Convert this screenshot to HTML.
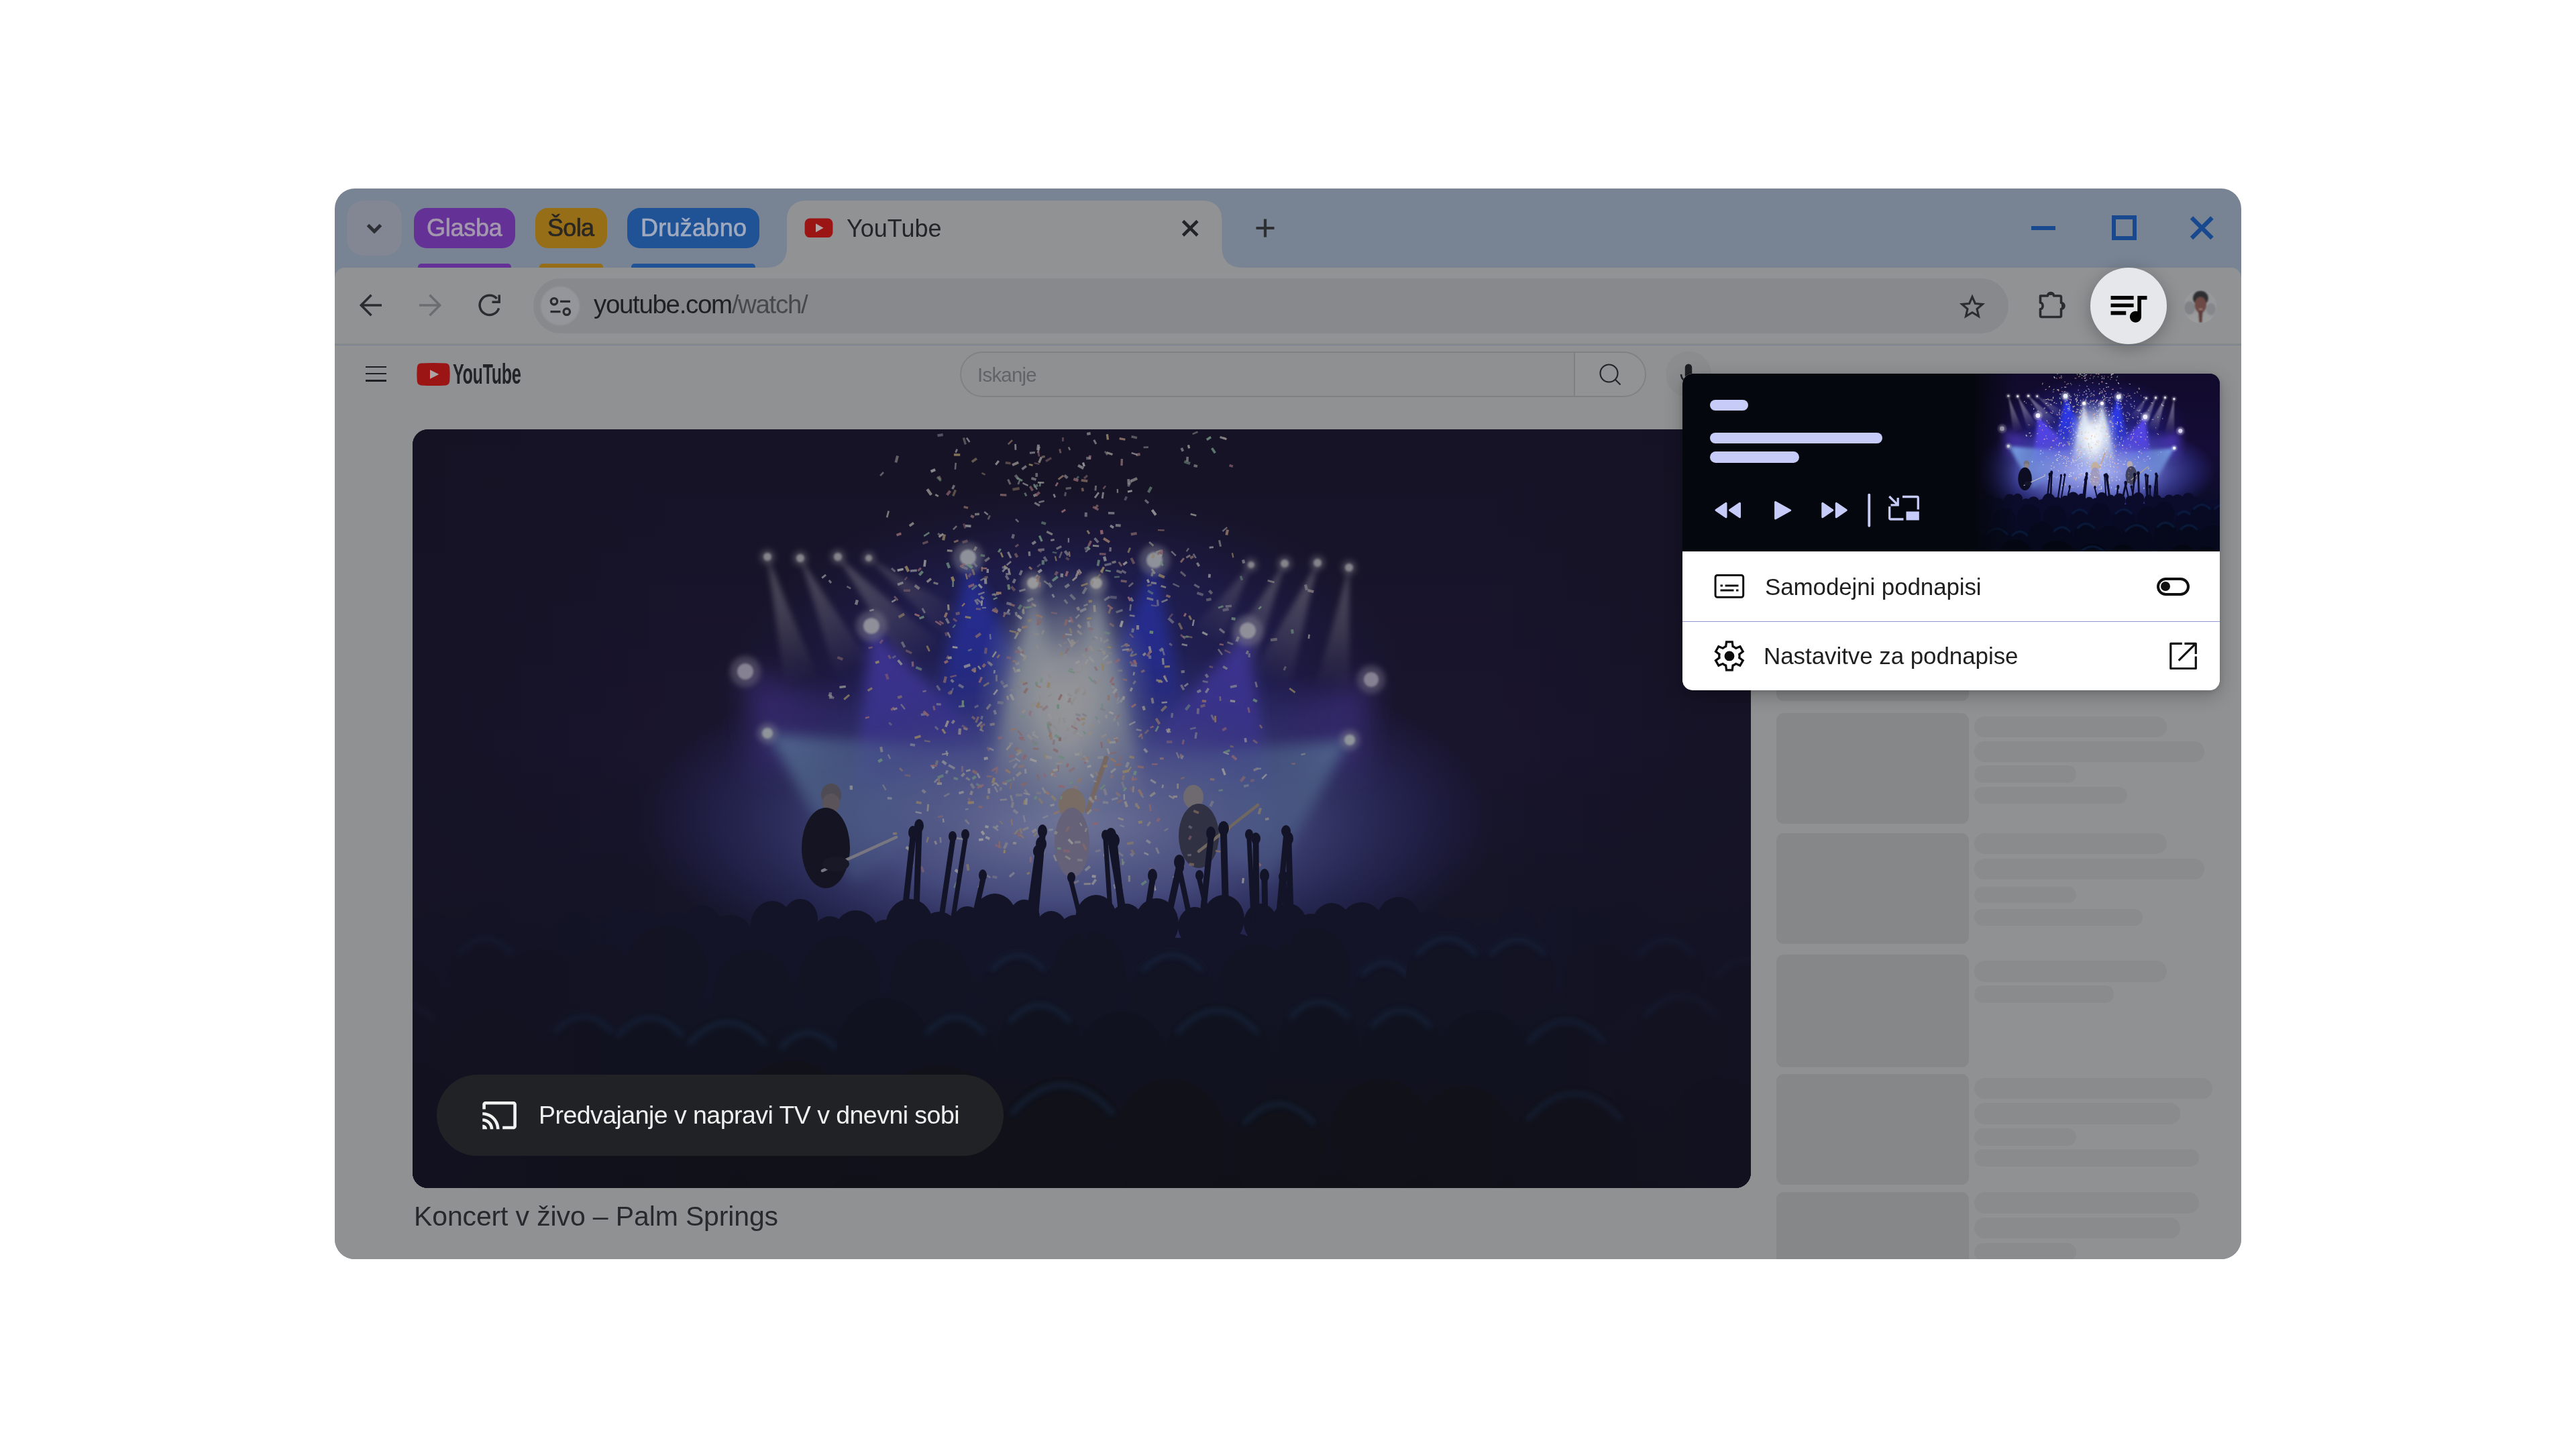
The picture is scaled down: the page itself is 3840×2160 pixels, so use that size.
<!DOCTYPE html><html lang="sl"><head><meta charset="utf-8"><title>YouTube</title><style>
*{box-sizing:border-box}
html,body{margin:0;padding:0}
body{width:3840px;height:2160px;background:#fff;position:relative;overflow:hidden;font-family:"Liberation Sans",sans-serif;-webkit-font-smoothing:antialiased}
.abs{position:absolute}
.t{position:absolute;white-space:nowrap;line-height:1;margin:0;will-change:transform}
#win{position:absolute;left:499px;top:281px;width:2842px;height:1596px;border-radius:30px;overflow:hidden;background:#788393}
#win>.in{position:absolute;left:-499px;top:-281px;width:3840px;height:2160px}
svg{position:absolute;overflow:visible}
.sk{position:absolute;background:#8a8b8d;border-radius:16px}
.th{position:absolute;background:#868789;border-radius:11px;left:2648px;width:287px}
</style></head><body><div id="win"><div class="in"><div class="abs" style="left:517px;top:299px;width:82px;height:82px;border-radius:25px;background:#838793"></div><svg style="left:540px;top:325px" width="36" height="32" viewBox="0 0 36 32" ><path d="M8.5 10.5 L18 20 L27.5 10.5" fill="none" stroke="#2d2f35" stroke-width="5" stroke-linejoin="miter"/></svg><div class="abs" style="left:617px;top:310px;width:151px;height:60px;border-radius:19px;background:#643296"></div><div class="t" style="letter-spacing:-0.246px;left:636px;top:322.43px;font-size:36px;color:#a398ad;-webkit-text-stroke:0.7px #a398ad">Glasba</div><div class="abs" style="left:623px;top:393px;width:139px;height:10px;border-radius:5px;background:#643296"></div><div class="abs" style="left:798px;top:310px;width:107px;height:60px;border-radius:19px;background:#966e17"></div><div class="t" style="letter-spacing:-0.641px;left:816.3px;top:322.43px;font-size:36px;color:#2a2723;-webkit-text-stroke:0.7px #2a2723">Šola</div><div class="abs" style="left:804px;top:393px;width:95px;height:10px;border-radius:5px;background:#966e17"></div><div class="abs" style="left:935px;top:310px;width:197px;height:60px;border-radius:19px;background:#205296"></div><div class="t" style="letter-spacing:0.263px;left:954.7px;top:322.43px;font-size:36px;color:#a0aabf;-webkit-text-stroke:0.7px #a0aabf">Družabno</div><div class="abs" style="left:940.5px;top:393px;width:185.5px;height:10px;border-radius:5px;background:#205296"></div><div class="abs" style="left:3028px;top:336.7px;width:36px;height:6.800000000000011px;background:#18498f"></div><div class="abs" style="left:3148px;top:321px;width:37px;height:37px;border:6.5px solid #18498f"></div><svg style="left:3262px;top:320px" width="40" height="40" viewBox="0 0 40 40" ><path d="M5 4.5 L35.5 35 M35.5 4.5 L5 35" stroke="#18498f" stroke-width="6.2" fill="none"/></svg><svg style="left:1870px;top:324px" width="32" height="32" viewBox="0 0 32 32" ><path d="M16 2.5V29.5M2.5 16H29.5" stroke="#2d2f33" stroke-width="4.2" fill="none"/></svg><div class="abs" style="left:499px;top:399px;width:2842px;height:115px;background:#919294;border-radius:15px 15px 0 0"></div><svg style="left:1140px;top:295px" width="720" height="110" viewBox="1140 295 720 110" ><path d="M1143 399 C1162 399 1173 388 1173 369 L1173 327 C1173 310 1184 299 1201 299 L1793.5 299 C1810.5 299 1821.5 310 1821.5 327 L1821.5 369 C1821.5 388 1833 399 1852 399 L1852 401 L1143 401 Z" fill="#919294"/></svg><svg style="left:1199px;top:325px" width="44" height="30" viewBox="0 0 44 30" ><rect x="0.6" y="0.6" width="41.8" height="28.5" rx="7.5" fill="#9c1515"/><path d="M17 8.3 L28.5 14.8 L17 21.3Z" fill="#b3a5a6"/></svg><div class="t" style="letter-spacing:0.004px;left:1261.5px;top:322.53px;font-size:36px;color:#242528">YouTube</div><svg style="left:1760px;top:326px" width="28" height="28" viewBox="0 0 28 28" ><path d="M3.5 3.5 L25 25 M25 3.5 L3.5 25" stroke="#232427" stroke-width="4.6" fill="none"/></svg><div class="abs" style="left:499px;top:512.3px;width:2842px;height:1.900000000000091px;background:#88898a"></div><svg style="left:535px;top:437px" width="36" height="36" viewBox="0 0 36 36" ><path d="M34 18 H4 M18.5 2.8 L3.3 18 L18.5 33.2" fill="none" stroke="#2a2c2f" stroke-width="3.5"/></svg><svg style="left:623px;top:437px" width="36" height="36" viewBox="0 0 36 36" ><path d="M2 18 H32 M17.5 2.8 L32.7 18 L17.5 33.2" fill="none" stroke="#6c6d70" stroke-width="3.5"/></svg><svg style="left:712px;top:437px" width="36" height="36" viewBox="0 0 36 36" ><path d="M31.6 22.5 A14.6 14.6 0 1 1 28.6 8.2" fill="none" stroke="#2a2c2f" stroke-width="3.5"/><path d="M32.2 2.5 V13.3 H21.5" fill="none" stroke="#2a2c2f" stroke-width="3.5"/></svg><div class="abs" style="left:795px;top:415.3px;width:2199px;height:81.5px;border-radius:41px;background:#88898d"></div><div class="abs" style="left:805.5px;top:426.9px;width:58.39999999999998px;height:58.200000000000045px;border-radius:30px;background:#95969b;filter:blur(1.2px)"></div><svg style="left:818px;top:440px" width="34" height="34" viewBox="0 0 34 34" ><g fill="none" stroke="#2a2c2f" stroke-width="3.3"><circle cx="8" cy="9.3" r="4.7"/><path d="M17 9.3H32"/><circle cx="26.8" cy="24.7" r="4.7"/><path d="M2.5 24.7H17.5"/></g></svg><div class="t" style="letter-spacing:-1.339px;left:885.2px;top:434.71px;font-size:38.5px;color:#46484d"><span style="color:#1f2024">youtube.com</span>/watch/</div><svg style="left:2919px;top:436px" width="42" height="42" viewBox="0 0 24 24" ><path d="M12 3.6 L14.5 9.4 L20.8 9.95 L16 14.1 L17.45 20.3 L12 17 L6.55 20.3 L8 14.1 L3.2 9.95 L9.5 9.4 Z" fill="none" stroke="#2a2c2f" stroke-width="1.75" stroke-linejoin="miter"/></svg><svg style="left:3036px;top:432px" width="46" height="46" viewBox="0 0 46 46" ><path d="M5.5 9 H16.5 C16.5 3 25.5 3 25.5 9 H34.5 Q36.5 9 36.5 11 V19.5 C42.5 19.5 42.5 28.5 36.5 28.5 V38.5 Q36.5 40.5 34.5 40.5 H7.5 Q5.5 40.5 5.5 38.5 V28.8 C10.3 28.8 10.3 19.2 5.5 19.2 Z" fill="none" stroke="#2a2c2f" stroke-width="3.6" stroke-linejoin="round"/><path d="M17.5 8 C17.5 3 24.5 3 24.5 8Z M37 20.5 C42 20.5 42 27.5 37 27.5Z" fill="#2a2c2f"/></svg><svg style="left:3255px;top:431.5px" width="50" height="50" viewBox="0 0 50 50" ><defs><clipPath id="avc"><circle cx="25" cy="25" r="24.6"/></clipPath><filter id="avb" x="-20%" y="-20%" width="140%" height="140%"><feGaussianBlur stdDeviation="0.9"/></filter></defs><g clip-path="url(#avc)"><rect width="50" height="50" fill="#97989a"/><g filter="url(#avb)"><ellipse cx="9" cy="27" rx="8" ry="10" fill="#808286"/><ellipse cx="41" cy="29" rx="7" ry="9" fill="#85878b"/><ellipse cx="25" cy="49" rx="21" ry="14" fill="#9a9b9d"/><ellipse cx="25.4" cy="12.5" rx="11.4" ry="11" fill="#2f2f32"/><ellipse cx="25.3" cy="22.5" rx="8.8" ry="11.8" fill="#6d4a45"/><path d="M21.8 31 L28.8 31 L27.6 49 L23.2 49Z" fill="#5f3d39"/><ellipse cx="25.5" cy="29" rx="3" ry="1.3" fill="#9a7a78"/></g></g></svg><div class="abs" style="left:499px;top:514.5px;width:2842px;height:1362.5px;background:#909193"></div><div class="abs" style="left:545px;top:545.6999999999999px;width:30.700000000000045px;height:2.2000000000000455px;background:#1e1f22"></div><div class="abs" style="left:545px;top:556.1999999999999px;width:30.700000000000045px;height:2.2000000000000455px;background:#1e1f22"></div><div class="abs" style="left:545px;top:566.4px;width:30.700000000000045px;height:2.2000000000000455px;background:#1e1f22"></div><svg style="left:621px;top:540px" width="52" height="36" viewBox="0 0 52 36" ><path d="M6.5 1.6 Q25 0.2 43.5 1.6 Q48.6 2.2 49.2 7.5 Q50.2 18 49.2 28.5 Q48.6 33.8 43.5 34.4 Q25 35.8 6.5 34.4 Q1.4 33.8 0.8 28.5 Q-0.2 18 0.8 7.5 Q1.4 2.2 6.5 1.6Z" fill="#9c1515"/><path d="M20 11.2 L33.3 18 L20 24.8Z" fill="#aca3a4"/></svg><div class="t" id="ytword" style="left:675.2px;top:535.90px;font-size:43px;font-weight:bold;color:#222326;transform-origin:0 0;transform:scaleX(0.583);letter-spacing:-0.5px">YouTube</div><div class="abs" style="left:1431.2px;top:524.2px;width:1022.9999999999998px;height:67.59999999999991px;border-radius:34px;border:2px solid #808183;background:#8f9092"></div><div class="abs" style="left:2346px;top:526.2px;width:106.19999999999982px;height:63.59999999999991px;border-radius:0 32px 32px 0;border-left:2px solid #808183;background:#929395"></div><div class="t" style="letter-spacing:-0.783px;left:1456.5px;top:543.63px;font-size:29.5px;color:#626366">Iskanje</div><svg style="left:2382px;top:540px" width="38" height="38" viewBox="0 0 38 38" ><circle cx="16.5" cy="16.5" r="13" fill="none" stroke="#222326" stroke-width="2.1"/><path d="M26 26 L33.5 33.5" stroke="#222326" stroke-width="2.1"/></svg><div class="abs" style="left:2483px;top:524px;width:68px;height:68px;border-radius:34px;background:#8b8c8e"></div><svg style="left:2500px;top:540px" width="34" height="40" viewBox="0 0 34 40" ><rect x="11.8" y="2.5" width="10.4" height="22" rx="5.2" fill="#1d1e21"/><path d="M6 18 A11 11 0 0 0 28 18 M17 29 V36" fill="none" stroke="#1d1e21" stroke-width="2.4"/></svg><svg style="left:615px;top:640px" width="1995" height="1131" viewBox="615 640 1995 1131"><defs>
<linearGradient id="sc-base" x1="0" y1="0" x2="0" y2="1">
 <stop offset="0" stop-color="#100a2a"/><stop offset="0.42" stop-color="#150d36"/>
 <stop offset="0.68" stop-color="#0b0d28"/><stop offset="1" stop-color="#03050f"/>
</linearGradient>
<radialGradient id="sc-glow" cx="0.5" cy="0.5" r="0.5">
 <stop offset="0" stop-color="#3a42d4" stop-opacity="0.6"/><stop offset="0.6" stop-color="#3030c0" stop-opacity="0.38"/>
 <stop offset="1" stop-color="#241c96" stop-opacity="0"/>
</radialGradient>
<radialGradient id="sc-glow2" cx="0.5" cy="0.5" r="0.5">
 <stop offset="0" stop-color="#fbfcff" stop-opacity="1"/><stop offset="0.3" stop-color="#eef3fa" stop-opacity="0.92"/><stop offset="0.6" stop-color="#c8d6ee" stop-opacity="0.6"/>
 <stop offset="1" stop-color="#8aa0e0" stop-opacity="0"/>
</radialGradient>
<radialGradient id="sc-haze" cx="0.5" cy="0.5" r="0.5">
 <stop offset="0" stop-color="#b4c0fa" stop-opacity="1"/><stop offset="0.45" stop-color="#7c88ee" stop-opacity="0.8"/>
 <stop offset="0.8" stop-color="#4a4cd0" stop-opacity="0.36"/><stop offset="1" stop-color="#3c38c0" stop-opacity="0"/>
</radialGradient>
<linearGradient id="sc-crowd" x1="0" y1="0" x2="0" y2="1">
 <stop offset="0" stop-color="#0b0c2c"/><stop offset="0.3" stop-color="#080b24"/><stop offset="1" stop-color="#03050f"/>
</linearGradient>
<linearGradient id="sc-vig" x1="0" y1="0" x2="1" y2="0">
 <stop offset="0" stop-color="#0c0824" stop-opacity="0.7"/><stop offset="0.2" stop-color="#0c0824" stop-opacity="0"/>
 <stop offset="0.8" stop-color="#0c0824" stop-opacity="0"/><stop offset="1" stop-color="#0c0824" stop-opacity="0.7"/></linearGradient>
<filter id="sc-b4" x="-50%" y="-50%" width="200%" height="200%"><feGaussianBlur stdDeviation="4"/></filter>
<filter id="sc-b10" x="-50%" y="-50%" width="200%" height="200%"><feGaussianBlur stdDeviation="10"/></filter>
<filter id="sc-b22" x="-50%" y="-50%" width="200%" height="200%"><feGaussianBlur stdDeviation="22"/></filter>
<filter id="sc-b2" x="-50%" y="-50%" width="200%" height="200%"><feGaussianBlur stdDeviation="1.6"/></filter>
<clipPath id="vclip"><rect x="615" y="640" width="1995" height="1131" rx="23"/></clipPath><g id="scene"><rect x="615" y="640" width="1995" height="1131" fill="url(#sc-base)"/><ellipse cx="1590" cy="1000" rx="500" ry="270" fill="url(#sc-glow)"/><ellipse cx="1590" cy="1225" rx="640" ry="265" fill="url(#sc-haze)"/><linearGradient id="sg1" gradientUnits="userSpaceOnUse" x1="1144" y1="830" x2="1195" y2="1018"><stop offset="0" stop-color="#cfc8dc" stop-opacity="0.6"/><stop offset="0.5" stop-color="#cfc8dc" stop-opacity="0.36"/><stop offset="1" stop-color="#cfc8dc" stop-opacity="0"/></linearGradient><polygon points="1144,830 1170,1023 1220,1012" fill="url(#sg1)" filter="url(#sc-b4)"/><linearGradient id="sg2" gradientUnits="userSpaceOnUse" x1="1193" y1="832" x2="1273" y2="999"><stop offset="0" stop-color="#cfc8dc" stop-opacity="0.55"/><stop offset="0.5" stop-color="#cfc8dc" stop-opacity="0.33"/><stop offset="1" stop-color="#cfc8dc" stop-opacity="0"/></linearGradient><polygon points="1193,832 1246,1007 1299,991" fill="url(#sg2)" filter="url(#sc-b4)"/><linearGradient id="sg3" gradientUnits="userSpaceOnUse" x1="1249" y1="830" x2="1380" y2="981"><stop offset="0" stop-color="#cfc8dc" stop-opacity="0.55"/><stop offset="0.5" stop-color="#cfc8dc" stop-opacity="0.33"/><stop offset="1" stop-color="#cfc8dc" stop-opacity="0"/></linearGradient><polygon points="1249,830 1351,997 1409,965" fill="url(#sg3)" filter="url(#sc-b4)"/><linearGradient id="sg4" gradientUnits="userSpaceOnUse" x1="1295" y1="832" x2="1427" y2="934"><stop offset="0" stop-color="#cfc8dc" stop-opacity="0.4"/><stop offset="0.5" stop-color="#cfc8dc" stop-opacity="0.24"/><stop offset="1" stop-color="#cfc8dc" stop-opacity="0"/></linearGradient><polygon points="1295,832 1409,949 1446,918" fill="url(#sg4)" filter="url(#sc-b4)"/><linearGradient id="sg5" gradientUnits="userSpaceOnUse" x1="2011" y1="846" x2="1986" y2="1031"><stop offset="0" stop-color="#cfc8dc" stop-opacity="0.55"/><stop offset="0.5" stop-color="#cfc8dc" stop-opacity="0.33"/><stop offset="1" stop-color="#cfc8dc" stop-opacity="0"/></linearGradient><polygon points="2011,846 1960,1028 2012,1033" fill="url(#sg5)" filter="url(#sc-b4)"/><linearGradient id="sg6" gradientUnits="userSpaceOnUse" x1="1964" y1="839" x2="1894" y2="1015"><stop offset="0" stop-color="#cfc8dc" stop-opacity="0.6"/><stop offset="0.5" stop-color="#cfc8dc" stop-opacity="0.36"/><stop offset="1" stop-color="#cfc8dc" stop-opacity="0"/></linearGradient><polygon points="1964,839 1865,1007 1923,1023" fill="url(#sg6)" filter="url(#sc-b4)"/><linearGradient id="sg7" gradientUnits="userSpaceOnUse" x1="1915" y1="840" x2="1839" y2="997"><stop offset="0" stop-color="#cfc8dc" stop-opacity="0.55"/><stop offset="0.5" stop-color="#cfc8dc" stop-opacity="0.33"/><stop offset="1" stop-color="#cfc8dc" stop-opacity="0"/></linearGradient><polygon points="1915,840 1813,986 1865,1007" fill="url(#sg7)" filter="url(#sc-b4)"/><linearGradient id="sg8" gradientUnits="userSpaceOnUse" x1="1865" y1="842" x2="1797" y2="952"><stop offset="0" stop-color="#cfc8dc" stop-opacity="0.4"/><stop offset="0.5" stop-color="#cfc8dc" stop-opacity="0.24"/><stop offset="1" stop-color="#cfc8dc" stop-opacity="0"/></linearGradient><polygon points="1865,842 1776,939 1818,965" fill="url(#sg8)" filter="url(#sc-b4)"/><linearGradient id="sg9" gradientUnits="userSpaceOnUse" x1="1111" y1="1001" x2="1262" y2="1123"><stop offset="0" stop-color="#5a3fd0" stop-opacity="0.9"/><stop offset="0.5" stop-color="#5a3fd0" stop-opacity="0.54"/><stop offset="1" stop-color="#5a3fd0" stop-opacity="0"/></linearGradient><polygon points="1111,1001 1126,1154 1399,1091" fill="url(#sg9)" filter="url(#sc-b22)"/><linearGradient id="sg10" gradientUnits="userSpaceOnUse" x1="2044" y1="1013" x2="1897" y2="1125"><stop offset="0" stop-color="#5a3fd0" stop-opacity="0.85"/><stop offset="0.5" stop-color="#5a3fd0" stop-opacity="0.51"/><stop offset="1" stop-color="#5a3fd0" stop-opacity="0"/></linearGradient><polygon points="2044,1013 1766,1091 2028,1159" fill="url(#sg10)" filter="url(#sc-b22)"/><linearGradient id="sg11" gradientUnits="userSpaceOnUse" x1="1443" y1="831" x2="1480" y2="1107"><stop offset="0" stop-color="#2c3af0" stop-opacity="1.0"/><stop offset="0.5" stop-color="#2c3af0" stop-opacity="0.85"/><stop offset="1" stop-color="#2c3af0" stop-opacity="0"/></linearGradient><polygon points="1443,831 1383,1112 1577,1102" fill="url(#sg11)" filter="url(#sc-b10)"/><linearGradient id="sg12" gradientUnits="userSpaceOnUse" x1="1721" y1="835" x2="1692" y2="1107"><stop offset="0" stop-color="#2c3af0" stop-opacity="1.0"/><stop offset="0.5" stop-color="#2c3af0" stop-opacity="0.85"/><stop offset="1" stop-color="#2c3af0" stop-opacity="0"/></linearGradient><polygon points="1721,835 1608,1102 1776,1112" fill="url(#sg12)" filter="url(#sc-b10)"/><linearGradient id="sg13" gradientUnits="userSpaceOnUse" x1="1299" y1="933" x2="1393" y2="1167"><stop offset="0" stop-color="#5848f2" stop-opacity="1.0"/><stop offset="0.5" stop-color="#5848f2" stop-opacity="0.80"/><stop offset="1" stop-color="#5848f2" stop-opacity="0"/></linearGradient><polygon points="1299,933 1273,1180 1514,1154" fill="url(#sg13)" filter="url(#sc-b10)"/><linearGradient id="sg14" gradientUnits="userSpaceOnUse" x1="1860" y1="940" x2="1779" y2="1167"><stop offset="0" stop-color="#5848f2" stop-opacity="1.0"/><stop offset="0.5" stop-color="#5848f2" stop-opacity="0.80"/><stop offset="1" stop-color="#5848f2" stop-opacity="0"/></linearGradient><polygon points="1860,940 1666,1154 1892,1180" fill="url(#sg14)" filter="url(#sc-b10)"/><linearGradient id="sg15" gradientUnits="userSpaceOnUse" x1="1144" y1="1093" x2="1425" y2="1222"><stop offset="0" stop-color="#86baf6" stop-opacity="0.85"/><stop offset="0.5" stop-color="#86baf6" stop-opacity="0.42"/><stop offset="1" stop-color="#86baf6" stop-opacity="0"/></linearGradient><polygon points="1144,1093 1273,1317 1577,1128" fill="url(#sg15)" filter="url(#sc-b10)"/><linearGradient id="sg16" gradientUnits="userSpaceOnUse" x1="2012" y1="1103" x2="1742" y2="1227"><stop offset="0" stop-color="#86baf6" stop-opacity="0.8"/><stop offset="0.5" stop-color="#86baf6" stop-opacity="0.36"/><stop offset="1" stop-color="#86baf6" stop-opacity="0"/></linearGradient><polygon points="2012,1103 1593,1138 1892,1317" fill="url(#sg16)" filter="url(#sc-b10)"/><linearGradient id="sg17" gradientUnits="userSpaceOnUse" x1="1540" y1="869" x2="1548" y2="1196"><stop offset="0" stop-color="#e8f0f6" stop-opacity="1.0"/><stop offset="0.5" stop-color="#e8f0f6" stop-opacity="0.92"/><stop offset="1" stop-color="#e8f0f6" stop-opacity="0"/></linearGradient><polygon points="1540,869 1472,1191 1624,1201" fill="url(#sg17)" filter="url(#sc-b10)"/><linearGradient id="sg18" gradientUnits="userSpaceOnUse" x1="1634" y1="869" x2="1632" y2="1196"><stop offset="0" stop-color="#e8f0f6" stop-opacity="1.0"/><stop offset="0.5" stop-color="#e8f0f6" stop-opacity="0.92"/><stop offset="1" stop-color="#e8f0f6" stop-opacity="0"/></linearGradient><polygon points="1634,869 1556,1201 1708,1191" fill="url(#sg18)" filter="url(#sc-b10)"/><ellipse cx="1588" cy="1044" rx="135" ry="205" fill="url(#sc-glow2)"/><circle cx="1144" cy="830" r="11" fill="#dcd8e2" opacity="0.4" filter="url(#sc-b4)"/><circle cx="1144" cy="830" r="6" fill="#dcd8e2" filter="url(#sc-b2)"/><circle cx="1193" cy="832" r="11" fill="#dcd8e2" opacity="0.4" filter="url(#sc-b4)"/><circle cx="1193" cy="832" r="6" fill="#dcd8e2" filter="url(#sc-b2)"/><circle cx="1249" cy="830" r="11" fill="#dcd8e2" opacity="0.4" filter="url(#sc-b4)"/><circle cx="1249" cy="830" r="6" fill="#dcd8e2" filter="url(#sc-b2)"/><circle cx="1295" cy="832" r="10" fill="#dcd8e2" opacity="0.4" filter="url(#sc-b4)"/><circle cx="1295" cy="832" r="5" fill="#dcd8e2" filter="url(#sc-b2)"/><circle cx="1865" cy="842" r="10" fill="#dcd8e2" opacity="0.4" filter="url(#sc-b4)"/><circle cx="1865" cy="842" r="5" fill="#dcd8e2" filter="url(#sc-b2)"/><circle cx="1915" cy="840" r="11" fill="#dcd8e2" opacity="0.4" filter="url(#sc-b4)"/><circle cx="1915" cy="840" r="6" fill="#dcd8e2" filter="url(#sc-b2)"/><circle cx="1964" cy="839" r="11" fill="#dcd8e2" opacity="0.4" filter="url(#sc-b4)"/><circle cx="1964" cy="839" r="6" fill="#dcd8e2" filter="url(#sc-b2)"/><circle cx="2011" cy="846" r="11" fill="#dcd8e2" opacity="0.4" filter="url(#sc-b4)"/><circle cx="2011" cy="846" r="6" fill="#dcd8e2" filter="url(#sc-b2)"/><circle cx="1443" cy="831" r="23" fill="#eef3ff" opacity="0.4" filter="url(#sc-b4)"/><circle cx="1443" cy="831" r="12" fill="#eef3ff" filter="url(#sc-b2)"/><circle cx="1721" cy="835" r="23" fill="#eef3ff" opacity="0.4" filter="url(#sc-b4)"/><circle cx="1721" cy="835" r="12" fill="#eef3ff" filter="url(#sc-b2)"/><circle cx="1540" cy="869" r="17" fill="#ffffff" opacity="0.4" filter="url(#sc-b4)"/><circle cx="1540" cy="869" r="9" fill="#ffffff" filter="url(#sc-b2)"/><circle cx="1634" cy="869" r="17" fill="#ffffff" opacity="0.4" filter="url(#sc-b4)"/><circle cx="1634" cy="869" r="9" fill="#ffffff" filter="url(#sc-b2)"/><circle cx="1299" cy="933" r="23" fill="#efeeff" opacity="0.4" filter="url(#sc-b4)"/><circle cx="1299" cy="933" r="12" fill="#efeeff" filter="url(#sc-b2)"/><circle cx="1860" cy="940" r="23" fill="#efeeff" opacity="0.4" filter="url(#sc-b4)"/><circle cx="1860" cy="940" r="12" fill="#efeeff" filter="url(#sc-b2)"/><circle cx="1111" cy="1001" r="23" fill="#ddd4f0" opacity="0.4" filter="url(#sc-b4)"/><circle cx="1111" cy="1001" r="12" fill="#ddd4f0" filter="url(#sc-b2)"/><circle cx="2044" cy="1013" r="21" fill="#ddd4f0" opacity="0.4" filter="url(#sc-b4)"/><circle cx="2044" cy="1013" r="11" fill="#ddd4f0" filter="url(#sc-b2)"/><circle cx="1144" cy="1093" r="15" fill="#eef6ff" opacity="0.4" filter="url(#sc-b4)"/><circle cx="1144" cy="1093" r="8" fill="#eef6ff" filter="url(#sc-b2)"/><circle cx="2012" cy="1103" r="15" fill="#eef6ff" opacity="0.4" filter="url(#sc-b4)"/><circle cx="2012" cy="1103" r="8" fill="#eef6ff" filter="url(#sc-b2)"/><ellipse cx="1239" cy="1185" rx="15" ry="17" fill="#76727e"/><ellipse cx="1239" cy="1197" rx="13" ry="14" fill="#8c8088"/><ellipse cx="1231" cy="1264" rx="36" ry="60" fill="#0c0c22"/><line x1="1226" y1="1298" x2="1336" y2="1248" stroke="#c4c0d0" stroke-width="4.5" stroke-linecap="round"/><ellipse cx="1246" cy="1288" rx="20" ry="11" fill="#14142a"/><ellipse cx="1598" cy="1199" rx="20" ry="24" fill="#c4ae9c"/><ellipse cx="1598" cy="1256" rx="26" ry="52" fill="#a09ac0"/><line x1="1621" y1="1209" x2="1649" y2="1130" stroke="#c0a498" stroke-width="7" stroke-linecap="round"/><ellipse cx="1779" cy="1188" rx="15" ry="18" fill="#b4aab0"/><ellipse cx="1787" cy="1246" rx="30" ry="48" fill="#40425e"/><line x1="1787" y1="1269" x2="1875" y2="1200" stroke="#b4a494" stroke-width="4.5" stroke-linecap="round"/><g><rect x="1712" y="863" width="5.4" height="3.4" fill="#f4f4f4" opacity="0.91" transform="rotate(66 1712 863)"/><rect x="1598" y="927" width="5.3" height="3.4" fill="#e8e8f0" opacity="0.78" transform="rotate(171 1598 927)"/><rect x="1773" y="1286" width="7.2" height="4.3" fill="#f2bc9e" opacity="0.63" transform="rotate(8 1773 1286)"/><rect x="1681" y="741" width="6.0" height="3.5" fill="#ccccdc" opacity="0.54" transform="rotate(115 1681 741)"/><rect x="1672" y="1126" width="8.1" height="3.5" fill="#dca4a4" opacity="0.69" transform="rotate(89 1672 1126)"/><rect x="1449" y="856" width="6.6" height="3.9" fill="#eca0ae" opacity="0.54" transform="rotate(126 1449 856)"/><rect x="1505" y="847" width="7.7" height="3.0" fill="#f0e8e0" opacity="0.94" transform="rotate(81 1505 847)"/><rect x="1709" y="975" width="5.2" height="3.6" fill="#f0e8e0" opacity="0.86" transform="rotate(138 1709 975)"/><rect x="1702" y="1184" width="5.4" height="2.5" fill="#e8e8f0" opacity="0.53" transform="rotate(49 1702 1184)"/><rect x="1517" y="1139" width="8.7" height="3.2" fill="#e8e8f0" opacity="0.66" transform="rotate(129 1517 1139)"/><rect x="1484" y="1058" width="6.6" height="3.8" fill="#ffffff" opacity="0.54" transform="rotate(72 1484 1058)"/><rect x="1591" y="948" width="8.0" height="4.1" fill="#dca4a4" opacity="0.63" transform="rotate(147 1591 948)"/><rect x="1395" y="925" width="10.3" height="2.6" fill="#eca0ae" opacity="0.80" transform="rotate(32 1395 925)"/><rect x="1824" y="651" width="6.0" height="2.9" fill="#dca4a4" opacity="0.67" transform="rotate(26 1824 651)"/><rect x="1803" y="1027" width="7.8" height="3.5" fill="#f4f4f4" opacity="0.71" transform="rotate(122 1803 1027)"/><rect x="1522" y="1234" width="8.7" height="3.4" fill="#f2d498" opacity="0.55" transform="rotate(72 1522 1234)"/><rect x="1638" y="1073" width="6.1" height="2.6" fill="#f4f4f4" opacity="0.55" transform="rotate(61 1638 1073)"/><rect x="1608" y="1028" width="8.0" height="4.2" fill="#ece4dc" opacity="0.89" transform="rotate(110 1608 1028)"/><rect x="1654" y="1060" width="6.9" height="3.0" fill="#ffffff" opacity="0.95" transform="rotate(22 1654 1060)"/><rect x="1677" y="959" width="7.7" height="2.5" fill="#ccccdc" opacity="0.83" transform="rotate(18 1677 959)"/><rect x="1524" y="968" width="6.1" height="4.2" fill="#dca4a4" opacity="0.91" transform="rotate(65 1524 968)"/><rect x="1422" y="1158" width="6.6" height="3.6" fill="#acE4c4" opacity="0.73" transform="rotate(16 1422 1158)"/><rect x="1670" y="984" width="8.5" height="3.5" fill="#eca0ae" opacity="0.86" transform="rotate(142 1670 984)"/><rect x="1482" y="884" width="5.2" height="2.4" fill="#acE4c4" opacity="0.59" transform="rotate(50 1482 884)"/><rect x="1438" y="1054" width="9.0" height="3.0" fill="#ece4dc" opacity="0.60" transform="rotate(175 1438 1054)"/><rect x="1363" y="781" width="7.6" height="3.6" fill="#ece4dc" opacity="0.88" transform="rotate(144 1363 781)"/><rect x="1684" y="1126" width="7.4" height="3.6" fill="#f2d498" opacity="0.71" transform="rotate(16 1684 1126)"/><rect x="1880" y="1147" width="5.5" height="2.6" fill="#f4f4f4" opacity="0.57" transform="rotate(179 1880 1147)"/><rect x="1616" y="1257" width="10.4" height="3.6" fill="#dca4a4" opacity="0.75" transform="rotate(63 1616 1257)"/><rect x="1510" y="657" width="9.0" height="2.5" fill="#f2bc9e" opacity="0.70" transform="rotate(135 1510 657)"/><rect x="1498" y="842" width="6.3" height="3.5" fill="#f2d498" opacity="0.88" transform="rotate(47 1498 842)"/><rect x="1568" y="684" width="9.5" height="3.3" fill="#dca4a4" opacity="0.56" transform="rotate(149 1568 684)"/><rect x="1621" y="1235" width="5.8" height="2.6" fill="#ece4dc" opacity="0.75" transform="rotate(111 1621 1235)"/><rect x="1389" y="864" width="7.9" height="3.4" fill="#ece4dc" opacity="0.90" transform="rotate(141 1389 864)"/><rect x="1628" y="950" width="5.2" height="4.1" fill="#ccccdc" opacity="0.78" transform="rotate(11 1628 950)"/><rect x="1362" y="986" width="7.5" height="3.4" fill="#eca0ae" opacity="0.81" transform="rotate(86 1362 986)"/><rect x="1570" y="1238" width="6.4" height="3.4" fill="#ffffff" opacity="0.56" transform="rotate(170 1570 1238)"/><rect x="1608" y="692" width="9.3" height="4.1" fill="#e8e8f0" opacity="0.80" transform="rotate(28 1608 692)"/><rect x="1864" y="974" width="5.9" height="3.2" fill="#ccccdc" opacity="0.69" transform="rotate(93 1864 974)"/><rect x="1570" y="885" width="5.5" height="3.0" fill="#ffffff" opacity="0.70" transform="rotate(61 1570 885)"/><rect x="1766" y="686" width="9.3" height="4.2" fill="#acE4c4" opacity="0.62" transform="rotate(19 1766 686)"/><rect x="1690" y="1258" width="9.7" height="3.7" fill="#f2d498" opacity="0.57" transform="rotate(170 1690 1258)"/><rect x="1812" y="1267" width="8.9" height="2.5" fill="#f2bc9e" opacity="0.69" transform="rotate(10 1812 1267)"/><rect x="1780" y="692" width="5.5" height="4.0" fill="#ece4dc" opacity="0.70" transform="rotate(12 1780 692)"/><rect x="1509" y="873" width="8.0" height="4.2" fill="#f2bc9e" opacity="0.52" transform="rotate(48 1509 873)"/><rect x="1946" y="1125" width="6.4" height="2.7" fill="#e8e8f0" opacity="0.64" transform="rotate(168 1946 1125)"/><rect x="1441" y="1158" width="6.6" height="3.3" fill="#ccccdc" opacity="0.86" transform="rotate(32 1441 1158)"/><rect x="1384" y="809" width="8.6" height="3.4" fill="#dca4a4" opacity="0.64" transform="rotate(160 1384 809)"/><rect x="1427" y="1315" width="9.6" height="2.3" fill="#acE4c4" opacity="0.69" transform="rotate(113 1427 1315)"/><rect x="1464" y="1302" width="8.8" height="2.4" fill="#acE4c4" opacity="0.70" transform="rotate(33 1464 1302)"/><rect x="1494" y="1014" width="6.3" height="4.2" fill="#ccccdc" opacity="0.58" transform="rotate(56 1494 1014)"/><rect x="1690" y="870" width="8.6" height="2.8" fill="#ece4dc" opacity="0.62" transform="rotate(140 1690 870)"/><rect x="1605" y="1040" width="7.9" height="3.8" fill="#f0e8e0" opacity="0.68" transform="rotate(118 1605 1040)"/><rect x="1671" y="864" width="9.0" height="3.6" fill="#dca4a4" opacity="0.78" transform="rotate(8 1671 864)"/><rect x="1579" y="1141" width="9.5" height="2.6" fill="#dca4a4" opacity="0.76" transform="rotate(94 1579 1141)"/><rect x="1810" y="1195" width="8.9" height="4.2" fill="#ece4dc" opacity="0.51" transform="rotate(116 1810 1195)"/><rect x="1684" y="714" width="8.4" height="3.7" fill="#f4f4f4" opacity="0.71" transform="rotate(88 1684 714)"/><rect x="1426" y="690" width="9.9" height="2.5" fill="#ffffff" opacity="0.61" transform="rotate(95 1426 690)"/><rect x="1824" y="1145" width="10.4" height="3.3" fill="#ffffff" opacity="0.91" transform="rotate(69 1824 1145)"/><rect x="1786" y="838" width="6.1" height="3.5" fill="#e8e8f0" opacity="0.83" transform="rotate(60 1786 838)"/><rect x="1648" y="849" width="8.1" height="2.3" fill="#acE4c4" opacity="0.94" transform="rotate(11 1648 849)"/><rect x="1622" y="710" width="6.6" height="3.2" fill="#dca4a4" opacity="0.59" transform="rotate(138 1622 710)"/><rect x="1754" y="1307" width="5.1" height="3.2" fill="#ffffff" opacity="0.95" transform="rotate(148 1754 1307)"/><rect x="1881" y="905" width="5.4" height="2.5" fill="#acE4c4" opacity="0.93" transform="rotate(135 1881 905)"/><rect x="1418" y="733" width="7.8" height="4.1" fill="#eca0ae" opacity="0.72" transform="rotate(127 1418 733)"/><rect x="1519" y="1238" width="8.7" height="3.1" fill="#f2d498" opacity="0.65" transform="rotate(131 1519 1238)"/><rect x="1641" y="857" width="9.6" height="2.3" fill="#f2d498" opacity="0.55" transform="rotate(135 1641 857)"/><rect x="1280" y="895" width="7.2" height="4.3" fill="#ccccdc" opacity="0.92" transform="rotate(106 1280 895)"/><rect x="1660" y="1156" width="5.3" height="3.6" fill="#f2bc9e" opacity="0.61" transform="rotate(114 1660 1156)"/><rect x="1493" y="823" width="7.8" height="2.7" fill="#f2d498" opacity="0.90" transform="rotate(67 1493 823)"/><rect x="1366" y="1194" width="8.0" height="3.7" fill="#f2d498" opacity="0.70" transform="rotate(9 1366 1194)"/><rect x="1349" y="1154" width="8.5" height="2.9" fill="#dca4a4" opacity="0.56" transform="rotate(9 1349 1154)"/><rect x="1519" y="963" width="9.1" height="4.3" fill="#e8e8f0" opacity="0.61" transform="rotate(47 1519 963)"/><rect x="1690" y="971" width="8.7" height="2.5" fill="#ece4dc" opacity="0.59" transform="rotate(116 1690 971)"/><rect x="1484" y="1258" width="10.5" height="3.2" fill="#eca0ae" opacity="0.61" transform="rotate(25 1484 1258)"/><rect x="1589" y="761" width="6.8" height="3.0" fill="#eca0ae" opacity="0.90" transform="rotate(146 1589 761)"/><rect x="1458" y="1152" width="7.9" height="3.1" fill="#f4f4f4" opacity="0.72" transform="rotate(61 1458 1152)"/><rect x="1666" y="1033" width="7.0" height="3.7" fill="#eca0ae" opacity="0.54" transform="rotate(95 1666 1033)"/><rect x="1728" y="855" width="9.5" height="4.2" fill="#f2d498" opacity="0.82" transform="rotate(23 1728 855)"/><rect x="1620" y="909" width="10.1" height="4.0" fill="#ffffff" opacity="0.61" transform="rotate(154 1620 909)"/><rect x="1688" y="717" width="10.2" height="3.7" fill="#ffffff" opacity="0.54" transform="rotate(117 1688 717)"/><rect x="1735" y="1170" width="5.0" height="2.6" fill="#f4f4f4" opacity="0.79" transform="rotate(102 1735 1170)"/><rect x="1665" y="849" width="8.5" height="3.7" fill="#ece4dc" opacity="0.64" transform="rotate(20 1665 849)"/><rect x="1589" y="820" width="8.0" height="4.3" fill="#ccccdc" opacity="0.79" transform="rotate(50 1589 820)"/><rect x="1594" y="802" width="6.7" height="2.3" fill="#e8e8f0" opacity="0.79" transform="rotate(90 1594 802)"/><rect x="1652" y="1115" width="9.0" height="3.0" fill="#f4f4f4" opacity="0.86" transform="rotate(71 1652 1115)"/><rect x="1488" y="1145" width="10.3" height="2.9" fill="#eca0ae" opacity="0.71" transform="rotate(148 1488 1145)"/><rect x="1584" y="823" width="9.9" height="2.5" fill="#f0e8e0" opacity="0.58" transform="rotate(112 1584 823)"/><rect x="1399" y="794" width="5.8" height="3.1" fill="#f0e8e0" opacity="0.56" transform="rotate(38 1399 794)"/><rect x="1832" y="910" width="9.0" height="4.3" fill="#ccccdc" opacity="0.59" transform="rotate(168 1832 910)"/><rect x="1406" y="1086" width="7.9" height="3.2" fill="#f2d498" opacity="0.88" transform="rotate(56 1406 1086)"/><rect x="1495" y="1165" width="6.7" height="3.9" fill="#ffffff" opacity="0.59" transform="rotate(16 1495 1165)"/><rect x="1465" y="1010" width="9.1" height="3.2" fill="#eca0ae" opacity="0.87" transform="rotate(114 1465 1010)"/><rect x="1630" y="1163" width="5.2" height="2.4" fill="#f4f4f4" opacity="0.62" transform="rotate(11 1630 1163)"/><rect x="1695" y="1150" width="6.5" height="4.2" fill="#acE4c4" opacity="0.84" transform="rotate(111 1695 1150)"/><rect x="1508" y="1111" width="10.1" height="2.9" fill="#f0e8e0" opacity="0.91" transform="rotate(130 1508 1111)"/><rect x="1618" y="1073" width="6.3" height="3.3" fill="#f2d498" opacity="0.86" transform="rotate(172 1618 1073)"/><rect x="1576" y="1263" width="5.7" height="3.3" fill="#acE4c4" opacity="0.87" transform="rotate(2 1576 1263)"/><rect x="1485" y="1168" width="6.8" height="3.0" fill="#ece4dc" opacity="0.73" transform="rotate(141 1485 1168)"/><rect x="1506" y="909" width="5.9" height="3.1" fill="#ffffff" opacity="0.75" transform="rotate(117 1506 909)"/><rect x="1890" y="864" width="10.4" height="2.8" fill="#ece4dc" opacity="0.69" transform="rotate(15 1890 864)"/><rect x="1550" y="1314" width="6.0" height="2.6" fill="#e8e8f0" opacity="0.61" transform="rotate(83 1550 1314)"/><rect x="1624" y="1008" width="9.3" height="2.9" fill="#acE4c4" opacity="0.67" transform="rotate(50 1624 1008)"/><rect x="1342" y="1144" width="6.1" height="2.8" fill="#f2bc9e" opacity="0.63" transform="rotate(44 1342 1144)"/><rect x="1720" y="1084" width="5.2" height="2.3" fill="#eca0ae" opacity="0.88" transform="rotate(159 1720 1084)"/><rect x="1657" y="842" width="10.4" height="3.5" fill="#ccccdc" opacity="0.73" transform="rotate(167 1657 842)"/><rect x="1652" y="763" width="9.3" height="3.6" fill="#e8e8f0" opacity="0.77" transform="rotate(1 1652 763)"/><rect x="1616" y="1064" width="5.8" height="2.7" fill="#f0e8e0" opacity="0.83" transform="rotate(46 1616 1064)"/><rect x="1725" y="1263" width="9.5" height="3.1" fill="#f0e8e0" opacity="0.64" transform="rotate(67 1725 1263)"/><rect x="1546" y="1016" width="5.9" height="3.7" fill="#acE4c4" opacity="0.80" transform="rotate(74 1546 1016)"/><rect x="1538" y="926" width="5.3" height="3.8" fill="#f2d498" opacity="0.69" transform="rotate(159 1538 926)"/><rect x="1584" y="1137" width="6.1" height="2.3" fill="#f2d498" opacity="0.55" transform="rotate(162 1584 1137)"/><rect x="1464" y="704" width="5.7" height="2.4" fill="#f2d498" opacity="0.54" transform="rotate(26 1464 704)"/><rect x="1522" y="1065" width="7.0" height="3.3" fill="#acE4c4" opacity="0.57" transform="rotate(26 1522 1065)"/><rect x="1719" y="759" width="9.4" height="3.9" fill="#f4f4f4" opacity="0.94" transform="rotate(54 1719 759)"/><rect x="1647" y="970" width="5.3" height="4.2" fill="#f0e8e0" opacity="0.81" transform="rotate(70 1647 970)"/><rect x="1403" y="1248" width="8.4" height="2.7" fill="#f0e8e0" opacity="0.60" transform="rotate(85 1403 1248)"/><rect x="1364" y="914" width="7.8" height="3.1" fill="#eca0ae" opacity="0.94" transform="rotate(22 1364 914)"/><rect x="1695" y="1197" width="8.7" height="3.6" fill="#f2d498" opacity="0.77" transform="rotate(58 1695 1197)"/><rect x="1873" y="1016" width="8.4" height="2.9" fill="#f0e8e0" opacity="0.61" transform="rotate(76 1873 1016)"/><rect x="1470" y="907" width="6.0" height="2.3" fill="#ffffff" opacity="0.61" transform="rotate(178 1470 907)"/><rect x="1716" y="1161" width="9.3" height="3.2" fill="#ffffff" opacity="0.68" transform="rotate(32 1716 1161)"/><rect x="1499" y="688" width="7.8" height="3.6" fill="#f2bc9e" opacity="0.54" transform="rotate(7 1499 688)"/><rect x="1696" y="1141" width="9.3" height="3.3" fill="#dca4a4" opacity="0.90" transform="rotate(10 1696 1141)"/><rect x="1595" y="1086" width="5.4" height="3.5" fill="#ece4dc" opacity="0.59" transform="rotate(125 1595 1086)"/><rect x="1664" y="1292" width="10.1" height="2.4" fill="#acE4c4" opacity="0.57" transform="rotate(63 1664 1292)"/><rect x="1695" y="1197" width="6.1" height="2.8" fill="#ccccdc" opacity="0.67" transform="rotate(91 1695 1197)"/><rect x="1564" y="1075" width="7.1" height="3.9" fill="#dca4a4" opacity="0.52" transform="rotate(48 1564 1075)"/><rect x="1716" y="1226" width="7.5" height="3.3" fill="#ece4dc" opacity="0.61" transform="rotate(124 1716 1226)"/><rect x="1737" y="1006" width="7.0" height="3.1" fill="#f2bc9e" opacity="0.66" transform="rotate(66 1737 1006)"/><rect x="1399" y="1162" width="7.4" height="2.7" fill="#f4f4f4" opacity="0.63" transform="rotate(134 1399 1162)"/><rect x="1447" y="993" width="9.8" height="4.2" fill="#f4f4f4" opacity="0.84" transform="rotate(161 1447 993)"/><rect x="1466" y="1068" width="5.3" height="3.3" fill="#f4f4f4" opacity="0.51" transform="rotate(110 1466 1068)"/><rect x="1522" y="715" width="8.2" height="2.7" fill="#ffffff" opacity="0.57" transform="rotate(112 1522 715)"/><rect x="1669" y="652" width="8.9" height="3.2" fill="#f2bc9e" opacity="0.89" transform="rotate(11 1669 652)"/><rect x="1494" y="1174" width="5.1" height="3.6" fill="#ccccdc" opacity="0.77" transform="rotate(101 1494 1174)"/><rect x="1654" y="1036" width="8.3" height="3.3" fill="#f2bc9e" opacity="0.91" transform="rotate(89 1654 1036)"/><rect x="1558" y="682" width="5.1" height="3.4" fill="#f2bc9e" opacity="0.69" transform="rotate(169 1558 682)"/><rect x="1455" y="995" width="7.3" height="3.5" fill="#ece4dc" opacity="0.64" transform="rotate(92 1455 995)"/><rect x="1422" y="676" width="9.3" height="3.7" fill="#f2d498" opacity="0.84" transform="rotate(1 1422 676)"/><rect x="1579" y="959" width="6.2" height="2.5" fill="#f4f4f4" opacity="0.56" transform="rotate(42 1579 959)"/><rect x="1426" y="1248" width="10.2" height="2.8" fill="#e8e8f0" opacity="0.75" transform="rotate(9 1426 1248)"/><rect x="1630" y="939" width="6.5" height="3.6" fill="#eca0ae" opacity="0.54" transform="rotate(174 1630 939)"/><rect x="1414" y="987" width="5.9" height="4.1" fill="#eca0ae" opacity="0.93" transform="rotate(152 1414 987)"/><rect x="1447" y="1149" width="6.8" height="2.8" fill="#e8e8f0" opacity="0.91" transform="rotate(163 1447 1149)"/><rect x="1855" y="1309" width="7.9" height="3.2" fill="#f4f4f4" opacity="0.89" transform="rotate(96 1855 1309)"/><rect x="1557" y="940" width="6.7" height="2.7" fill="#ece4dc" opacity="0.75" transform="rotate(112 1557 940)"/><rect x="1525" y="719" width="8.9" height="2.4" fill="#e8e8f0" opacity="0.79" transform="rotate(25 1525 719)"/><rect x="1527" y="1116" width="9.1" height="2.4" fill="#ccccdc" opacity="0.59" transform="rotate(106 1527 1116)"/><rect x="1375" y="1291" width="9.2" height="3.7" fill="#eca0ae" opacity="0.59" transform="rotate(69 1375 1291)"/><rect x="1667" y="1218" width="8.5" height="2.9" fill="#ece4dc" opacity="0.86" transform="rotate(18 1667 1218)"/><rect x="1395" y="1082" width="6.6" height="3.0" fill="#ccccdc" opacity="0.62" transform="rotate(47 1395 1082)"/><rect x="1557" y="835" width="6.8" height="4.2" fill="#acE4c4" opacity="0.78" transform="rotate(91 1557 835)"/><rect x="1607" y="939" width="8.9" height="3.4" fill="#ece4dc" opacity="0.76" transform="rotate(39 1607 939)"/><rect x="1453" y="838" width="7.4" height="3.3" fill="#f4f4f4" opacity="0.50" transform="rotate(52 1453 838)"/><rect x="1326" y="976" width="6.0" height="3.3" fill="#dca4a4" opacity="0.62" transform="rotate(62 1326 976)"/><rect x="1424" y="1075" width="5.4" height="3.9" fill="#ece4dc" opacity="0.78" transform="rotate(125 1424 1075)"/><rect x="1468" y="884" width="9.9" height="2.5" fill="#f4f4f4" opacity="0.67" transform="rotate(160 1468 884)"/><rect x="1673" y="849" width="7.4" height="3.4" fill="#e8e8f0" opacity="0.61" transform="rotate(31 1673 849)"/><rect x="1346" y="956" width="9.1" height="3.6" fill="#ccccdc" opacity="0.73" transform="rotate(63 1346 956)"/><rect x="1515" y="1019" width="8.8" height="2.8" fill="#ccccdc" opacity="0.71" transform="rotate(42 1515 1019)"/><rect x="1515" y="773" width="5.9" height="2.6" fill="#ccccdc" opacity="0.77" transform="rotate(45 1515 773)"/><rect x="1804" y="879" width="6.3" height="4.2" fill="#ece4dc" opacity="0.57" transform="rotate(47 1804 879)"/><rect x="1616" y="1089" width="5.8" height="2.9" fill="#acE4c4" opacity="0.59" transform="rotate(54 1616 1089)"/><rect x="1667" y="1076" width="5.6" height="2.7" fill="#f4f4f4" opacity="0.51" transform="rotate(70 1667 1076)"/><rect x="1491" y="1223" width="6.6" height="2.3" fill="#f2d498" opacity="0.50" transform="rotate(46 1491 1223)"/><rect x="1628" y="807" width="8.9" height="3.5" fill="#eca0ae" opacity="0.80" transform="rotate(116 1628 807)"/><rect x="1739" y="1086" width="8.2" height="2.8" fill="#ece4dc" opacity="0.70" transform="rotate(33 1739 1086)"/><rect x="1441" y="855" width="8.5" height="2.5" fill="#f2d498" opacity="0.82" transform="rotate(76 1441 855)"/><rect x="1587" y="1070" width="7.5" height="3.5" fill="#e8e8f0" opacity="0.80" transform="rotate(74 1587 1070)"/><rect x="1742" y="1236" width="6.8" height="2.3" fill="#ece4dc" opacity="0.52" transform="rotate(150 1742 1236)"/><rect x="1724" y="1012" width="10.2" height="3.3" fill="#f0e8e0" opacity="0.71" transform="rotate(18 1724 1012)"/><rect x="1451" y="1147" width="7.5" height="4.3" fill="#dca4a4" opacity="0.84" transform="rotate(33 1451 1147)"/><rect x="1574" y="829" width="7.2" height="2.3" fill="#f2d498" opacity="0.78" transform="rotate(75 1574 829)"/><rect x="1526" y="1101" width="6.7" height="3.1" fill="#eca0ae" opacity="0.95" transform="rotate(172 1526 1101)"/><rect x="1638" y="754" width="6.1" height="3.6" fill="#f2bc9e" opacity="0.66" transform="rotate(130 1638 754)"/><rect x="1564" y="1076" width="9.5" height="3.9" fill="#acE4c4" opacity="0.84" transform="rotate(84 1564 1076)"/><rect x="1618" y="1084" width="9.3" height="2.8" fill="#e8e8f0" opacity="0.61" transform="rotate(127 1618 1084)"/><rect x="1425" y="932" width="6.0" height="2.3" fill="#acE4c4" opacity="0.66" transform="rotate(130 1425 932)"/><rect x="1515" y="1087" width="8.4" height="2.5" fill="#f2bc9e" opacity="0.92" transform="rotate(161 1515 1087)"/><rect x="1444" y="1207" width="5.1" height="2.3" fill="#e8e8f0" opacity="0.63" transform="rotate(171 1444 1207)"/><rect x="1334" y="1056" width="6.0" height="3.2" fill="#eca0ae" opacity="0.91" transform="rotate(141 1334 1056)"/><rect x="1451" y="1180" width="5.9" height="4.1" fill="#ece4dc" opacity="0.80" transform="rotate(110 1451 1180)"/><rect x="1315" y="1113" width="7.9" height="3.8" fill="#ece4dc" opacity="0.75" transform="rotate(79 1315 1113)"/><rect x="1595" y="822" width="7.7" height="2.4" fill="#f2bc9e" opacity="0.82" transform="rotate(84 1595 822)"/><rect x="1579" y="1050" width="6.8" height="3.7" fill="#acE4c4" opacity="0.88" transform="rotate(90 1579 1050)"/><rect x="1501" y="897" width="7.3" height="4.2" fill="#e8e8f0" opacity="0.66" transform="rotate(14 1501 897)"/><rect x="1632" y="1082" width="9.1" height="4.3" fill="#ece4dc" opacity="0.73" transform="rotate(146 1632 1082)"/><rect x="1593" y="972" width="9.9" height="2.4" fill="#e8e8f0" opacity="0.56" transform="rotate(129 1593 972)"/><rect x="1515" y="707" width="8.0" height="4.1" fill="#ccccdc" opacity="0.69" transform="rotate(51 1515 707)"/><rect x="1475" y="1019" width="9.5" height="2.9" fill="#f2d498" opacity="0.65" transform="rotate(149 1475 1019)"/><rect x="1491" y="977" width="5.6" height="2.7" fill="#f2bc9e" opacity="0.76" transform="rotate(128 1491 977)"/><rect x="1596" y="1074" width="9.0" height="4.1" fill="#f4f4f4" opacity="0.68" transform="rotate(98 1596 1074)"/><rect x="1626" y="983" width="8.0" height="3.1" fill="#e8e8f0" opacity="0.81" transform="rotate(26 1626 983)"/><rect x="1545" y="1048" width="8.7" height="3.2" fill="#ece4dc" opacity="0.80" transform="rotate(137 1545 1048)"/><rect x="1609" y="711" width="5.8" height="2.9" fill="#acE4c4" opacity="0.58" transform="rotate(128 1609 711)"/><rect x="1301" y="1027" width="7.7" height="3.3" fill="#f2d498" opacity="0.76" transform="rotate(148 1301 1027)"/><rect x="1438" y="652" width="10.4" height="3.3" fill="#ece4dc" opacity="0.54" transform="rotate(74 1438 652)"/><rect x="1715" y="963" width="9.9" height="3.6" fill="#f4f4f4" opacity="0.81" transform="rotate(77 1715 963)"/><rect x="1649" y="725" width="5.7" height="2.3" fill="#eca0ae" opacity="0.70" transform="rotate(129 1649 725)"/><rect x="1574" y="1148" width="10.1" height="3.0" fill="#f2bc9e" opacity="0.83" transform="rotate(135 1574 1148)"/><rect x="1566" y="1085" width="9.5" height="2.5" fill="#f0e8e0" opacity="0.57" transform="rotate(56 1566 1085)"/><rect x="1592" y="1033" width="7.4" height="3.7" fill="#ece4dc" opacity="0.66" transform="rotate(26 1592 1033)"/><rect x="1483" y="1081" width="7.1" height="3.9" fill="#f0e8e0" opacity="0.65" transform="rotate(170 1483 1081)"/><rect x="1476" y="833" width="8.4" height="3.6" fill="#f0e8e0" opacity="0.65" transform="rotate(144 1476 833)"/><rect x="1862" y="1054" width="8.3" height="2.9" fill="#eca0ae" opacity="0.67" transform="rotate(77 1862 1054)"/><rect x="1548" y="1108" width="8.3" height="4.1" fill="#acE4c4" opacity="0.81" transform="rotate(145 1548 1108)"/><rect x="1578" y="861" width="10.1" height="3.8" fill="#acE4c4" opacity="0.87" transform="rotate(141 1578 861)"/><rect x="1673" y="1194" width="8.1" height="2.8" fill="#dca4a4" opacity="0.81" transform="rotate(153 1673 1194)"/><rect x="1552" y="1263" width="9.4" height="2.7" fill="#eca0ae" opacity="0.64" transform="rotate(135 1552 1263)"/><rect x="1762" y="1124" width="5.1" height="3.1" fill="#dca4a4" opacity="0.86" transform="rotate(97 1762 1124)"/><rect x="1500" y="1167" width="6.3" height="3.5" fill="#dca4a4" opacity="0.64" transform="rotate(161 1500 1167)"/><rect x="1618" y="986" width="5.5" height="3.9" fill="#f0e8e0" opacity="0.75" transform="rotate(52 1618 986)"/><rect x="1684" y="916" width="7.8" height="2.6" fill="#ffffff" opacity="0.67" transform="rotate(8 1684 916)"/><rect x="1396" y="1048" width="6.9" height="3.3" fill="#f4f4f4" opacity="0.59" transform="rotate(4 1396 1048)"/><rect x="1401" y="709" width="5.7" height="4.0" fill="#f2bc9e" opacity="0.67" transform="rotate(61 1401 709)"/><rect x="1541" y="894" width="9.7" height="4.1" fill="#e8e8f0" opacity="0.68" transform="rotate(155 1541 894)"/><rect x="1424" y="724" width="6.4" height="3.4" fill="#e8e8f0" opacity="0.73" transform="rotate(115 1424 724)"/><rect x="1473" y="1132" width="5.9" height="4.2" fill="#f4f4f4" opacity="0.91" transform="rotate(169 1473 1132)"/><rect x="1611" y="1257" width="8.9" height="3.6" fill="#f4f4f4" opacity="0.55" transform="rotate(177 1611 1257)"/><rect x="1548" y="858" width="5.0" height="2.7" fill="#f0e8e0" opacity="0.77" transform="rotate(135 1548 858)"/><rect x="1690" y="1157" width="6.4" height="2.5" fill="#f2bc9e" opacity="0.70" transform="rotate(87 1690 1157)"/><rect x="1667" y="1191" width="9.9" height="3.2" fill="#f4f4f4" opacity="0.57" transform="rotate(164 1667 1191)"/><rect x="1683" y="1151" width="9.3" height="4.2" fill="#f2d498" opacity="0.88" transform="rotate(167 1683 1151)"/><rect x="1460" y="1069" width="9.5" height="3.3" fill="#f2bc9e" opacity="0.65" transform="rotate(113 1460 1069)"/><rect x="1627" y="1143" width="6.0" height="3.2" fill="#ffffff" opacity="0.89" transform="rotate(160 1627 1143)"/><rect x="1515" y="824" width="6.5" height="4.0" fill="#f2bc9e" opacity="0.62" transform="rotate(60 1515 824)"/><rect x="1688" y="970" width="8.5" height="3.9" fill="#dca4a4" opacity="0.71" transform="rotate(167 1688 970)"/><rect x="1732" y="837" width="6.4" height="2.7" fill="#acE4c4" opacity="0.95" transform="rotate(66 1732 837)"/><rect x="1687" y="1271" width="5.3" height="3.8" fill="#e8e8f0" opacity="0.51" transform="rotate(53 1687 1271)"/><rect x="1775" y="765" width="8.9" height="2.7" fill="#ece4dc" opacity="0.90" transform="rotate(14 1775 765)"/><rect x="1594" y="1139" width="5.8" height="3.6" fill="#eca0ae" opacity="0.76" transform="rotate(113 1594 1139)"/><rect x="1391" y="1140" width="5.3" height="3.9" fill="#e8e8f0" opacity="0.89" transform="rotate(60 1391 1140)"/><rect x="1716" y="977" width="5.1" height="4.1" fill="#e8e8f0" opacity="0.62" transform="rotate(86 1716 977)"/><rect x="1465" y="895" width="8.3" height="2.3" fill="#ffffff" opacity="0.94" transform="rotate(94 1465 895)"/><rect x="1519" y="691" width="10.0" height="3.9" fill="#f0e8e0" opacity="0.84" transform="rotate(156 1519 691)"/><rect x="1674" y="684" width="10.2" height="3.3" fill="#dca4a4" opacity="0.86" transform="rotate(92 1674 684)"/><rect x="1590" y="734" width="5.9" height="2.9" fill="#f4f4f4" opacity="0.51" transform="rotate(100 1590 734)"/><rect x="1651" y="1272" width="6.4" height="4.0" fill="#ffffff" opacity="0.74" transform="rotate(115 1651 1272)"/><rect x="1824" y="1120" width="8.9" height="2.4" fill="#ffffff" opacity="0.76" transform="rotate(22 1824 1120)"/><rect x="1766" y="1160" width="5.6" height="2.5" fill="#dca4a4" opacity="0.77" transform="rotate(159 1766 1160)"/><rect x="1703" y="1227" width="5.9" height="4.0" fill="#f2d498" opacity="0.81" transform="rotate(169 1703 1227)"/><rect x="1740" y="1048" width="8.3" height="2.4" fill="#f4f4f4" opacity="0.85" transform="rotate(175 1740 1048)"/><rect x="1595" y="873" width="7.4" height="4.3" fill="#ccccdc" opacity="0.87" transform="rotate(145 1595 873)"/><rect x="1918" y="994" width="6.4" height="3.1" fill="#ccccdc" opacity="0.55" transform="rotate(114 1918 994)"/><rect x="1496" y="912" width="10.5" height="3.2" fill="#f4f4f4" opacity="0.52" transform="rotate(8 1496 912)"/><rect x="1566" y="1078" width="6.5" height="3.4" fill="#f0e8e0" opacity="0.55" transform="rotate(166 1566 1078)"/><rect x="1437" y="1044" width="10.1" height="3.2" fill="#acE4c4" opacity="0.91" transform="rotate(92 1437 1044)"/><rect x="1551" y="1035" width="9.1" height="2.9" fill="#f0e8e0" opacity="0.60" transform="rotate(82 1551 1035)"/><rect x="1824" y="905" width="8.0" height="3.0" fill="#acE4c4" opacity="0.78" transform="rotate(161 1824 905)"/><rect x="1547" y="961" width="6.2" height="3.3" fill="#f0e8e0" opacity="0.68" transform="rotate(69 1547 961)"/><rect x="1772" y="681" width="6.9" height="3.6" fill="#ffffff" opacity="0.66" transform="rotate(93 1772 681)"/><rect x="1613" y="1161" width="7.9" height="4.3" fill="#f2bc9e" opacity="0.69" transform="rotate(122 1613 1161)"/><rect x="1650" y="1096" width="8.4" height="2.9" fill="#ece4dc" opacity="0.83" transform="rotate(151 1650 1096)"/><rect x="1664" y="1147" width="9.2" height="3.3" fill="#e8e8f0" opacity="0.91" transform="rotate(141 1664 1147)"/><rect x="1597" y="729" width="8.2" height="3.3" fill="#f0e8e0" opacity="0.57" transform="rotate(173 1597 729)"/><rect x="1807" y="1065" width="8.8" height="2.9" fill="#ccccdc" opacity="0.68" transform="rotate(63 1807 1065)"/><rect x="1772" y="1020" width="7.1" height="2.9" fill="#ffffff" opacity="0.67" transform="rotate(142 1772 1020)"/><rect x="1330" y="846" width="7.4" height="3.1" fill="#ccccdc" opacity="0.65" transform="rotate(42 1330 846)"/><rect x="1527" y="1215" width="10.3" height="2.7" fill="#f4f4f4" opacity="0.51" transform="rotate(77 1527 1215)"/><rect x="1686" y="817" width="8.0" height="2.9" fill="#f2d498" opacity="0.73" transform="rotate(112 1686 817)"/><rect x="1512" y="994" width="8.8" height="3.1" fill="#f0e8e0" opacity="0.80" transform="rotate(64 1512 994)"/><rect x="1643" y="950" width="6.3" height="3.1" fill="#e8e8f0" opacity="0.75" transform="rotate(90 1643 950)"/><rect x="1591" y="1033" width="9.8" height="4.2" fill="#ffffff" opacity="0.85" transform="rotate(88 1591 1033)"/><rect x="1395" y="1253" width="5.5" height="3.0" fill="#ece4dc" opacity="0.87" transform="rotate(66 1395 1253)"/><rect x="1470" y="991" width="5.6" height="4.1" fill="#dca4a4" opacity="0.90" transform="rotate(124 1470 991)"/><rect x="1655" y="928" width="7.8" height="3.3" fill="#f2bc9e" opacity="0.53" transform="rotate(34 1655 928)"/><rect x="1689" y="1026" width="5.6" height="3.4" fill="#f4f4f4" opacity="0.81" transform="rotate(114 1689 1026)"/><rect x="1819" y="650" width="10.0" height="3.1" fill="#f4f4f4" opacity="0.80" transform="rotate(18 1819 650)"/><rect x="1566" y="1018" width="7.9" height="4.3" fill="#f2d498" opacity="0.77" transform="rotate(103 1566 1018)"/><rect x="1645" y="989" width="10.2" height="3.3" fill="#f2d498" opacity="0.86" transform="rotate(84 1645 989)"/><rect x="1485" y="1166" width="6.9" height="2.6" fill="#ece4dc" opacity="0.89" transform="rotate(48 1485 1166)"/><rect x="1567" y="912" width="9.2" height="2.4" fill="#eca0ae" opacity="0.61" transform="rotate(10 1567 912)"/><rect x="1466" y="1253" width="6.7" height="3.5" fill="#ffffff" opacity="0.94" transform="rotate(173 1466 1253)"/><rect x="1490" y="688" width="7.3" height="3.1" fill="#f4f4f4" opacity="0.86" transform="rotate(128 1490 688)"/><rect x="1739" y="886" width="6.6" height="3.4" fill="#dca4a4" opacity="0.89" transform="rotate(21 1739 886)"/><rect x="1948" y="871" width="8.6" height="4.2" fill="#ccccdc" opacity="0.75" transform="rotate(76 1948 871)"/><rect x="1455" y="906" width="7.4" height="2.9" fill="#f2bc9e" opacity="0.61" transform="rotate(5 1455 906)"/><rect x="1631" y="1013" width="7.6" height="3.9" fill="#ccccdc" opacity="0.66" transform="rotate(43 1631 1013)"/><rect x="1406" y="1133" width="7.1" height="4.2" fill="#ffffff" opacity="0.73" transform="rotate(37 1406 1133)"/><rect x="1513" y="797" width="6.4" height="4.1" fill="#ccccdc" opacity="0.74" transform="rotate(106 1513 797)"/><rect x="1610" y="917" width="7.8" height="2.6" fill="#e8e8f0" opacity="0.73" transform="rotate(135 1610 917)"/><rect x="1555" y="1011" width="7.1" height="3.6" fill="#acE4c4" opacity="0.51" transform="rotate(102 1555 1011)"/><rect x="1838" y="1125" width="8.8" height="3.9" fill="#eca0ae" opacity="0.80" transform="rotate(42 1838 1125)"/><rect x="1535" y="844" width="5.4" height="2.9" fill="#f2bc9e" opacity="0.87" transform="rotate(41 1535 844)"/><rect x="1413" y="914" width="7.6" height="3.6" fill="#f2bc9e" opacity="0.92" transform="rotate(113 1413 914)"/><rect x="1474" y="1186" width="5.1" height="3.7" fill="#f2d498" opacity="0.66" transform="rotate(83 1474 1186)"/><rect x="1296" y="1070" width="6.0" height="2.5" fill="#eca0ae" opacity="0.82" transform="rotate(164 1296 1070)"/><rect x="1609" y="848" width="7.1" height="2.4" fill="#e8e8f0" opacity="0.92" transform="rotate(56 1609 848)"/><rect x="1612" y="1026" width="7.9" height="4.2" fill="#f0e8e0" opacity="0.66" transform="rotate(121 1612 1026)"/><rect x="1578" y="1170" width="9.7" height="3.5" fill="#eca0ae" opacity="0.81" transform="rotate(9 1578 1170)"/><rect x="1404" y="1170" width="7.3" height="3.8" fill="#f0e8e0" opacity="0.87" transform="rotate(180 1404 1170)"/><rect x="1855" y="834" width="5.5" height="4.2" fill="#ccccdc" opacity="0.81" transform="rotate(76 1855 834)"/><rect x="1687" y="1144" width="7.5" height="2.4" fill="#f2d498" opacity="0.80" transform="rotate(126 1687 1144)"/><rect x="1406" y="1218" width="7.7" height="2.7" fill="#dca4a4" opacity="0.62" transform="rotate(171 1406 1218)"/><rect x="1793" y="1014" width="8.0" height="2.8" fill="#ccccdc" opacity="0.66" transform="rotate(11 1793 1014)"/><rect x="1547" y="705" width="5.8" height="3.7" fill="#ffffff" opacity="0.61" transform="rotate(88 1547 705)"/><rect x="1429" y="807" width="6.9" height="2.9" fill="#f2bc9e" opacity="0.76" transform="rotate(159 1429 807)"/><rect x="1572" y="806" width="5.6" height="3.1" fill="#e8e8f0" opacity="0.80" transform="rotate(169 1572 806)"/><rect x="1344" y="1049" width="9.6" height="2.5" fill="#ccccdc" opacity="0.72" transform="rotate(52 1344 1049)"/><rect x="1648" y="672" width="6.7" height="2.5" fill="#ece4dc" opacity="0.57" transform="rotate(56 1648 672)"/><rect x="1477" y="945" width="8.1" height="2.4" fill="#ffffff" opacity="0.54" transform="rotate(84 1477 945)"/><rect x="1536" y="1130" width="10.4" height="3.4" fill="#ffffff" opacity="0.93" transform="rotate(20 1536 1130)"/><rect x="1615" y="974" width="7.0" height="2.5" fill="#f0e8e0" opacity="0.92" transform="rotate(51 1615 974)"/><rect x="1461" y="1086" width="6.4" height="2.8" fill="#f4f4f4" opacity="0.51" transform="rotate(25 1461 1086)"/><rect x="1674" y="911" width="10.3" height="3.4" fill="#e8e8f0" opacity="0.58" transform="rotate(161 1674 911)"/><rect x="1699" y="1176" width="9.6" height="3.8" fill="#f2bc9e" opacity="0.79" transform="rotate(59 1699 1176)"/><rect x="1597" y="885" width="10.1" height="4.0" fill="#f4f4f4" opacity="0.52" transform="rotate(46 1597 885)"/><rect x="1666" y="1028" width="8.5" height="3.9" fill="#f4f4f4" opacity="0.93" transform="rotate(127 1666 1028)"/><rect x="1501" y="978" width="6.6" height="3.5" fill="#eca0ae" opacity="0.57" transform="rotate(14 1501 978)"/><rect x="1588" y="944" width="10.3" height="2.5" fill="#ffffff" opacity="0.72" transform="rotate(7 1588 944)"/><rect x="1561" y="791" width="9.6" height="3.3" fill="#ece4dc" opacity="0.80" transform="rotate(26 1561 791)"/><rect x="1614" y="992" width="7.3" height="3.0" fill="#e8e8f0" opacity="0.93" transform="rotate(79 1614 992)"/><rect x="1446" y="1189" width="8.7" height="3.4" fill="#dca4a4" opacity="0.65" transform="rotate(84 1446 1189)"/><rect x="1904" y="955" width="9.8" height="4.2" fill="#f0e8e0" opacity="0.54" transform="rotate(173 1904 955)"/><rect x="1530" y="1193" width="6.8" height="3.6" fill="#f2d498" opacity="0.93" transform="rotate(102 1530 1193)"/><rect x="1513" y="969" width="6.9" height="4.1" fill="#eca0ae" opacity="0.60" transform="rotate(5 1513 969)"/><rect x="1488" y="1145" width="8.8" height="2.6" fill="#dca4a4" opacity="0.76" transform="rotate(104 1488 1145)"/><rect x="1401" y="925" width="7.2" height="2.5" fill="#eca0ae" opacity="0.75" transform="rotate(32 1401 925)"/><rect x="1552" y="719" width="6.4" height="2.5" fill="#acE4c4" opacity="0.82" transform="rotate(96 1552 719)"/><rect x="1410" y="797" width="9.0" height="4.1" fill="#f2d498" opacity="0.81" transform="rotate(102 1410 797)"/><rect x="1635" y="1186" width="5.7" height="3.3" fill="#ece4dc" opacity="0.78" transform="rotate(91 1635 1186)"/><rect x="1425" y="1295" width="8.0" height="4.2" fill="#ffffff" opacity="0.85" transform="rotate(34 1425 1295)"/><rect x="1572" y="736" width="5.3" height="2.8" fill="#f4f4f4" opacity="0.82" transform="rotate(67 1572 736)"/><rect x="1609" y="1314" width="7.0" height="3.0" fill="#e8e8f0" opacity="0.51" transform="rotate(151 1609 1314)"/><rect x="1657" y="816" width="6.3" height="3.3" fill="#ccccdc" opacity="0.82" transform="rotate(94 1657 816)"/><rect x="1547" y="1188" width="5.6" height="4.2" fill="#acE4c4" opacity="0.66" transform="rotate(122 1547 1188)"/><rect x="1646" y="941" width="9.4" height="3.3" fill="#acE4c4" opacity="0.58" transform="rotate(13 1646 941)"/><rect x="1532" y="1019" width="7.1" height="2.6" fill="#dca4a4" opacity="0.95" transform="rotate(158 1532 1019)"/><rect x="1804" y="1160" width="6.5" height="3.2" fill="#f2bc9e" opacity="0.72" transform="rotate(4 1804 1160)"/><rect x="1862" y="971" width="5.4" height="3.5" fill="#f0e8e0" opacity="0.68" transform="rotate(116 1862 971)"/><rect x="1643" y="966" width="5.9" height="4.0" fill="#f0e8e0" opacity="0.73" transform="rotate(71 1643 966)"/><rect x="1463" y="888" width="5.7" height="3.5" fill="#ccccdc" opacity="0.83" transform="rotate(38 1463 888)"/><rect x="1565" y="868" width="7.6" height="4.2" fill="#ccccdc" opacity="0.76" transform="rotate(57 1565 868)"/><rect x="1749" y="869" width="10.4" height="2.4" fill="#e8e8f0" opacity="0.56" transform="rotate(26 1749 869)"/><rect x="1608" y="904" width="5.3" height="4.3" fill="#f0e8e0" opacity="0.74" transform="rotate(64 1608 904)"/><rect x="1626" y="1293" width="9.2" height="4.0" fill="#e8e8f0" opacity="0.76" transform="rotate(139 1626 1293)"/><rect x="1586" y="710" width="9.4" height="2.8" fill="#f2bc9e" opacity="0.81" transform="rotate(143 1586 710)"/><rect x="1608" y="849" width="7.8" height="3.6" fill="#dca4a4" opacity="0.82" transform="rotate(63 1608 849)"/><rect x="1347" y="870" width="8.9" height="3.6" fill="#ffffff" opacity="0.73" transform="rotate(159 1347 870)"/><rect x="1456" y="1167" width="10.1" height="3.5" fill="#acE4c4" opacity="0.61" transform="rotate(26 1456 1167)"/><rect x="1381" y="1031" width="5.4" height="2.7" fill="#f0e8e0" opacity="0.58" transform="rotate(166 1381 1031)"/><rect x="1267" y="1037" width="10.4" height="3.0" fill="#f2d498" opacity="0.82" transform="rotate(139 1267 1037)"/><rect x="1512" y="1158" width="5.1" height="2.4" fill="#f0e8e0" opacity="0.63" transform="rotate(81 1512 1158)"/><rect x="1510" y="984" width="5.5" height="2.8" fill="#f2bc9e" opacity="0.77" transform="rotate(10 1510 984)"/><rect x="1736" y="1007" width="10.1" height="2.7" fill="#f4f4f4" opacity="0.79" transform="rotate(59 1736 1007)"/><rect x="1439" y="918" width="8.7" height="3.0" fill="#f2d498" opacity="0.86" transform="rotate(10 1439 918)"/><rect x="1395" y="702" width="7.2" height="4.2" fill="#f4f4f4" opacity="0.92" transform="rotate(157 1395 702)"/><rect x="1422" y="1026" width="10.4" height="2.4" fill="#ccccdc" opacity="0.57" transform="rotate(111 1422 1026)"/><rect x="1632" y="655" width="7.0" height="3.0" fill="#e8e8f0" opacity="0.76" transform="rotate(62 1632 655)"/><rect x="1762" y="1020" width="8.6" height="3.5" fill="#f0e8e0" opacity="0.62" transform="rotate(60 1762 1020)"/><rect x="1609" y="1126" width="6.7" height="3.8" fill="#ffffff" opacity="0.75" transform="rotate(176 1609 1126)"/><rect x="1334" y="888" width="7.9" height="2.8" fill="#dca4a4" opacity="0.71" transform="rotate(46 1334 888)"/><rect x="1608" y="1088" width="10.4" height="2.8" fill="#ece4dc" opacity="0.92" transform="rotate(136 1608 1088)"/><rect x="1450" y="1067" width="5.7" height="3.4" fill="#f2bc9e" opacity="0.62" transform="rotate(37 1450 1067)"/><rect x="1563" y="1054" width="9.8" height="4.0" fill="#dca4a4" opacity="0.51" transform="rotate(140 1563 1054)"/><rect x="1271" y="1171" width="6.3" height="4.3" fill="#e8e8f0" opacity="0.91" transform="rotate(90 1271 1171)"/><rect x="1510" y="1255" width="5.1" height="3.6" fill="#e8e8f0" opacity="0.91" transform="rotate(3 1510 1255)"/><rect x="1653" y="1101" width="6.9" height="2.8" fill="#f2d498" opacity="0.93" transform="rotate(68 1653 1101)"/><rect x="1606" y="1069" width="6.4" height="3.2" fill="#eca0ae" opacity="0.65" transform="rotate(42 1606 1069)"/><rect x="1698" y="932" width="6.5" height="4.1" fill="#f0e8e0" opacity="0.86" transform="rotate(90 1698 932)"/><rect x="1817" y="967" width="10.2" height="2.6" fill="#ece4dc" opacity="0.65" transform="rotate(54 1817 967)"/><rect x="1486" y="972" width="9.9" height="2.6" fill="#f0e8e0" opacity="0.93" transform="rotate(123 1486 972)"/><rect x="1830" y="787" width="9.0" height="2.4" fill="#ffffff" opacity="0.58" transform="rotate(139 1830 787)"/><rect x="1670" y="1229" width="6.6" height="2.3" fill="#f4f4f4" opacity="0.56" transform="rotate(20 1670 1229)"/><rect x="1451" y="848" width="9.1" height="3.2" fill="#f2d498" opacity="0.65" transform="rotate(71 1451 848)"/><rect x="1585" y="1266" width="9.9" height="4.3" fill="#eca0ae" opacity="0.59" transform="rotate(6 1585 1266)"/><rect x="1666" y="1069" width="8.3" height="3.4" fill="#f4f4f4" opacity="0.52" transform="rotate(126 1666 1069)"/><rect x="1484" y="999" width="5.0" height="2.7" fill="#e8e8f0" opacity="0.83" transform="rotate(97 1484 999)"/><rect x="1692" y="983" width="7.7" height="4.1" fill="#eca0ae" opacity="0.88" transform="rotate(63 1692 983)"/><rect x="1237" y="864" width="5.2" height="3.2" fill="#ccccdc" opacity="0.81" transform="rotate(51 1237 864)"/><rect x="1421" y="859" width="7.3" height="4.2" fill="#f2d498" opacity="0.90" transform="rotate(70 1421 859)"/><rect x="1755" y="1189" width="6.3" height="3.3" fill="#f0e8e0" opacity="0.83" transform="rotate(178 1755 1189)"/><rect x="1463" y="1316" width="8.6" height="2.5" fill="#f4f4f4" opacity="0.91" transform="rotate(112 1463 1316)"/><rect x="1543" y="676" width="8.0" height="2.9" fill="#f4f4f4" opacity="0.71" transform="rotate(175 1543 676)"/><rect x="1465" y="1082" width="7.6" height="3.0" fill="#f2d498" opacity="0.61" transform="rotate(98 1465 1082)"/><rect x="1581" y="1070" width="8.9" height="3.1" fill="#f0e8e0" opacity="0.80" transform="rotate(95 1581 1070)"/><rect x="1416" y="1184" width="9.2" height="2.8" fill="#ccccdc" opacity="0.73" transform="rotate(151 1416 1184)"/><rect x="1301" y="966" width="6.2" height="2.6" fill="#dca4a4" opacity="0.66" transform="rotate(167 1301 966)"/><rect x="1656" y="782" width="5.8" height="3.6" fill="#e8e8f0" opacity="0.89" transform="rotate(32 1656 782)"/><rect x="1519" y="813" width="5.6" height="3.0" fill="#dca4a4" opacity="0.64" transform="rotate(145 1519 813)"/><rect x="1568" y="1092" width="7.5" height="2.5" fill="#f2bc9e" opacity="0.84" transform="rotate(114 1568 1092)"/><rect x="1708" y="744" width="7.0" height="3.3" fill="#ccccdc" opacity="0.74" transform="rotate(43 1708 744)"/><rect x="1584" y="1187" width="5.0" height="2.8" fill="#acE4c4" opacity="0.82" transform="rotate(106 1584 1187)"/><rect x="1775" y="829" width="6.8" height="2.8" fill="#ece4dc" opacity="0.74" transform="rotate(150 1775 829)"/><rect x="1653" y="978" width="10.3" height="2.9" fill="#f4f4f4" opacity="0.82" transform="rotate(141 1653 978)"/><rect x="1628" y="898" width="5.2" height="3.8" fill="#f2d498" opacity="0.79" transform="rotate(175 1628 898)"/><rect x="1501" y="1193" width="10.1" height="2.7" fill="#f0e8e0" opacity="0.67" transform="rotate(175 1501 1193)"/><rect x="1703" y="1095" width="6.8" height="2.4" fill="#f2d498" opacity="0.68" transform="rotate(136 1703 1095)"/><rect x="1781" y="924" width="9.4" height="2.5" fill="#ffffff" opacity="0.82" transform="rotate(101 1781 924)"/><rect x="1505" y="939" width="10.5" height="2.7" fill="#f2d498" opacity="0.72" transform="rotate(12 1505 939)"/><rect x="1686" y="990" width="9.1" height="3.1" fill="#e8e8f0" opacity="0.63" transform="rotate(7 1686 990)"/><rect x="1392" y="867" width="7.1" height="3.2" fill="#ece4dc" opacity="0.76" transform="rotate(16 1392 867)"/><rect x="1593" y="951" width="9.5" height="2.7" fill="#f4f4f4" opacity="0.75" transform="rotate(60 1593 951)"/><rect x="1632" y="1151" width="7.2" height="2.4" fill="#ccccdc" opacity="0.65" transform="rotate(113 1632 1151)"/><rect x="1520" y="995" width="5.0" height="4.3" fill="#acE4c4" opacity="0.54" transform="rotate(49 1520 995)"/><rect x="1524" y="903" width="7.2" height="4.1" fill="#acE4c4" opacity="0.64" transform="rotate(123 1524 903)"/><rect x="1481" y="1231" width="9.7" height="2.8" fill="#f4f4f4" opacity="0.59" transform="rotate(36 1481 1231)"/><rect x="1783" y="1086" width="8.9" height="2.6" fill="#ccccdc" opacity="0.59" transform="rotate(167 1783 1086)"/><rect x="1499" y="1267" width="5.3" height="2.9" fill="#f2d498" opacity="0.93" transform="rotate(96 1499 1267)"/><rect x="1472" y="1304" width="6.1" height="2.7" fill="#e8e8f0" opacity="0.56" transform="rotate(32 1472 1304)"/><rect x="1491" y="736" width="9.5" height="3.3" fill="#dca4a4" opacity="0.83" transform="rotate(3 1491 736)"/><rect x="1630" y="754" width="9.4" height="3.4" fill="#eca0ae" opacity="0.73" transform="rotate(29 1630 754)"/><rect x="1818" y="959" width="6.1" height="2.5" fill="#eca0ae" opacity="0.80" transform="rotate(9 1818 959)"/><rect x="1773" y="818" width="5.9" height="2.4" fill="#f4f4f4" opacity="0.57" transform="rotate(125 1773 818)"/><rect x="1463" y="946" width="9.2" height="4.0" fill="#dca4a4" opacity="0.82" transform="rotate(143 1463 946)"/><rect x="1578" y="853" width="6.2" height="4.2" fill="#eca0ae" opacity="0.68" transform="rotate(120 1578 853)"/><rect x="1618" y="1078" width="5.5" height="3.2" fill="#f2d498" opacity="0.65" transform="rotate(131 1618 1078)"/><rect x="1769" y="915" width="5.2" height="3.0" fill="#eca0ae" opacity="0.95" transform="rotate(118 1769 915)"/><rect x="1567" y="1152" width="7.7" height="4.2" fill="#ffffff" opacity="0.63" transform="rotate(17 1567 1152)"/><rect x="1374" y="848" width="6.1" height="3.2" fill="#eca0ae" opacity="0.76" transform="rotate(138 1374 848)"/><rect x="1463" y="846" width="8.2" height="2.5" fill="#eca0ae" opacity="0.92" transform="rotate(0 1463 846)"/><rect x="1713" y="1089" width="7.5" height="2.8" fill="#f2bc9e" opacity="0.55" transform="rotate(134 1713 1089)"/><rect x="1628" y="1208" width="9.0" height="3.2" fill="#ece4dc" opacity="0.85" transform="rotate(134 1628 1208)"/><rect x="1550" y="1047" width="7.8" height="2.5" fill="#f2bc9e" opacity="0.69" transform="rotate(116 1550 1047)"/><rect x="1574" y="1137" width="8.6" height="2.5" fill="#e8e8f0" opacity="0.89" transform="rotate(1 1574 1137)"/><rect x="1449" y="969" width="5.8" height="2.5" fill="#ece4dc" opacity="0.57" transform="rotate(158 1449 969)"/><rect x="1462" y="826" width="6.4" height="3.4" fill="#acE4c4" opacity="0.67" transform="rotate(8 1462 826)"/><rect x="1663" y="781" width="7.8" height="4.1" fill="#f4f4f4" opacity="0.72" transform="rotate(3 1663 781)"/><rect x="1665" y="1180" width="8.1" height="3.7" fill="#f2bc9e" opacity="0.57" transform="rotate(41 1665 1180)"/><rect x="1731" y="822" width="7.8" height="2.9" fill="#ece4dc" opacity="0.80" transform="rotate(160 1731 822)"/><rect x="1317" y="1169" width="9.5" height="2.4" fill="#ece4dc" opacity="0.52" transform="rotate(61 1317 1169)"/><rect x="1565" y="1063" width="8.8" height="3.9" fill="#ffffff" opacity="0.77" transform="rotate(62 1565 1063)"/><rect x="1448" y="767" width="5.2" height="3.9" fill="#dca4a4" opacity="0.81" transform="rotate(27 1448 767)"/><rect x="1685" y="1305" width="9.4" height="3.3" fill="#ccccdc" opacity="0.91" transform="rotate(90 1685 1305)"/><rect x="1523" y="1153" width="8.4" height="4.0" fill="#ece4dc" opacity="0.79" transform="rotate(142 1523 1153)"/><rect x="1513" y="1302" width="9.4" height="3.3" fill="#ffffff" opacity="0.56" transform="rotate(139 1513 1302)"/><rect x="1881" y="1205" width="9.6" height="3.9" fill="#f2d498" opacity="0.67" transform="rotate(106 1881 1205)"/><rect x="1465" y="1077" width="10.2" height="3.3" fill="#f0e8e0" opacity="0.74" transform="rotate(135 1465 1077)"/><rect x="1876" y="1285" width="6.4" height="4.0" fill="#eca0ae" opacity="0.76" transform="rotate(42 1876 1285)"/><rect x="1844" y="1024" width="9.8" height="3.5" fill="#f4f4f4" opacity="0.68" transform="rotate(168 1844 1024)"/><rect x="1648" y="1175" width="10.2" height="4.0" fill="#ece4dc" opacity="0.60" transform="rotate(73 1648 1175)"/><rect x="1373" y="1099" width="9.4" height="3.6" fill="#f2d498" opacity="0.86" transform="rotate(163 1373 1099)"/><rect x="1459" y="1053" width="6.2" height="3.0" fill="#f0e8e0" opacity="0.51" transform="rotate(152 1459 1053)"/><rect x="1622" y="871" width="10.5" height="2.7" fill="#f2d498" opacity="0.80" transform="rotate(160 1622 871)"/><rect x="1722" y="827" width="6.2" height="4.1" fill="#f2d498" opacity="0.64" transform="rotate(110 1722 827)"/><rect x="1551" y="859" width="9.8" height="3.9" fill="#f2bc9e" opacity="0.68" transform="rotate(109 1551 859)"/><rect x="1533" y="1027" width="8.6" height="3.8" fill="#dca4a4" opacity="0.83" transform="rotate(122 1533 1027)"/><rect x="1548" y="1154" width="9.1" height="2.8" fill="#dca4a4" opacity="0.78" transform="rotate(75 1548 1154)"/><rect x="1519" y="944" width="10.3" height="3.0" fill="#e8e8f0" opacity="0.81" transform="rotate(119 1519 944)"/><rect x="1606" y="1280" width="7.7" height="3.7" fill="#e8e8f0" opacity="0.55" transform="rotate(3 1606 1280)"/><rect x="1539" y="899" width="6.7" height="3.3" fill="#f0e8e0" opacity="0.84" transform="rotate(27 1539 899)"/><rect x="1551" y="666" width="9.9" height="2.6" fill="#f0e8e0" opacity="0.73" transform="rotate(106 1551 666)"/><rect x="1792" y="1043" width="6.3" height="3.8" fill="#dca4a4" opacity="0.94" transform="rotate(5 1792 1043)"/><rect x="1564" y="1083" width="9.4" height="3.7" fill="#ccccdc" opacity="0.81" transform="rotate(68 1564 1083)"/><rect x="1688" y="831" width="9.5" height="3.9" fill="#f2bc9e" opacity="0.59" transform="rotate(63 1688 831)"/><rect x="1367" y="852" width="10.0" height="3.5" fill="#ccccdc" opacity="0.93" transform="rotate(175 1367 852)"/><rect x="1303" y="910" width="6.5" height="2.7" fill="#ffffff" opacity="0.73" transform="rotate(164 1303 910)"/><rect x="1836" y="920" width="5.9" height="4.1" fill="#acE4c4" opacity="0.84" transform="rotate(8 1836 920)"/><rect x="1383" y="962" width="9.1" height="2.9" fill="#f2d498" opacity="0.74" transform="rotate(65 1383 962)"/><rect x="1508" y="838" width="8.5" height="2.8" fill="#f4f4f4" opacity="0.74" transform="rotate(139 1508 838)"/><rect x="1519" y="1117" width="7.0" height="4.3" fill="#dca4a4" opacity="0.54" transform="rotate(159 1519 1117)"/><rect x="1775" y="1052" width="9.6" height="4.0" fill="#acE4c4" opacity="0.57" transform="rotate(128 1775 1052)"/><rect x="1349" y="917" width="9.6" height="3.9" fill="#f2d498" opacity="0.68" transform="rotate(151 1349 917)"/><rect x="1532" y="1190" width="9.8" height="3.4" fill="#e8e8f0" opacity="0.92" transform="rotate(94 1532 1190)"/><rect x="1664" y="839" width="6.2" height="3.7" fill="#ece4dc" opacity="0.73" transform="rotate(166 1664 839)"/><rect x="1420" y="1032" width="6.5" height="4.0" fill="#f2bc9e" opacity="0.57" transform="rotate(142 1420 1032)"/><rect x="1592" y="1099" width="9.9" height="4.1" fill="#e8e8f0" opacity="0.67" transform="rotate(134 1592 1099)"/><rect x="1414" y="838" width="8.6" height="4.1" fill="#acE4c4" opacity="0.82" transform="rotate(69 1414 838)"/><rect x="1449" y="1167" width="8.3" height="4.1" fill="#ccccdc" opacity="0.80" transform="rotate(56 1449 1167)"/><rect x="1480" y="1305" width="7.0" height="3.7" fill="#ccccdc" opacity="0.60" transform="rotate(13 1480 1305)"/><rect x="1601" y="954" width="7.8" height="4.3" fill="#f0e8e0" opacity="0.86" transform="rotate(106 1601 954)"/><rect x="1428" y="670" width="5.6" height="2.7" fill="#ccccdc" opacity="0.93" transform="rotate(113 1428 670)"/><rect x="1611" y="1003" width="9.5" height="2.9" fill="#f0e8e0" opacity="0.74" transform="rotate(175 1611 1003)"/><rect x="1773" y="663" width="5.2" height="3.3" fill="#ece4dc" opacity="0.93" transform="rotate(76 1773 663)"/><rect x="1648" y="829" width="7.1" height="4.2" fill="#e8e8f0" opacity="0.89" transform="rotate(74 1648 829)"/><rect x="1626" y="1319" width="10.3" height="3.0" fill="#ece4dc" opacity="0.79" transform="rotate(178 1626 1319)"/><rect x="1236" y="1034" width="9.8" height="3.5" fill="#f0e8e0" opacity="0.59" transform="rotate(34 1236 1034)"/><rect x="1749" y="916" width="6.6" height="2.7" fill="#dca4a4" opacity="0.51" transform="rotate(132 1749 916)"/><rect x="1648" y="1171" width="9.3" height="2.7" fill="#acE4c4" opacity="0.84" transform="rotate(136 1648 1171)"/><rect x="1353" y="1287" width="9.0" height="3.7" fill="#eca0ae" opacity="0.69" transform="rotate(11 1353 1287)"/><rect x="1398" y="1021" width="8.5" height="3.4" fill="#ccccdc" opacity="0.64" transform="rotate(57 1398 1021)"/><rect x="1650" y="673" width="9.4" height="3.2" fill="#ece4dc" opacity="0.89" transform="rotate(18 1650 673)"/><rect x="1710" y="890" width="9.9" height="3.3" fill="#ccccdc" opacity="0.86" transform="rotate(15 1710 890)"/><rect x="1621" y="966" width="5.6" height="3.4" fill="#eca0ae" opacity="0.66" transform="rotate(91 1621 966)"/><rect x="1518" y="1088" width="10.2" height="2.7" fill="#dca4a4" opacity="0.70" transform="rotate(50 1518 1088)"/><rect x="1387" y="1140" width="9.6" height="2.6" fill="#eca0ae" opacity="0.83" transform="rotate(2 1387 1140)"/><rect x="1766" y="1003" width="5.2" height="3.9" fill="#ece4dc" opacity="0.71" transform="rotate(175 1766 1003)"/><rect x="1471" y="862" width="8.4" height="4.1" fill="#e8e8f0" opacity="0.91" transform="rotate(87 1471 862)"/><rect x="1626" y="648" width="5.5" height="4.1" fill="#ffffff" opacity="0.71" transform="rotate(170 1626 648)"/><rect x="1719" y="1040" width="8.5" height="3.7" fill="#ece4dc" opacity="0.76" transform="rotate(79 1719 1040)"/><rect x="1645" y="1131" width="8.6" height="4.0" fill="#e8e8f0" opacity="0.71" transform="rotate(178 1645 1131)"/><rect x="1519" y="1241" width="5.7" height="3.3" fill="#eca0ae" opacity="0.86" transform="rotate(69 1519 1241)"/><rect x="1777" y="1247" width="6.2" height="3.8" fill="#eca0ae" opacity="0.54" transform="rotate(117 1777 1247)"/><rect x="1593" y="1306" width="5.2" height="2.4" fill="#eca0ae" opacity="0.85" transform="rotate(43 1593 1306)"/><rect x="1826" y="968" width="9.9" height="2.5" fill="#dca4a4" opacity="0.57" transform="rotate(26 1826 968)"/><rect x="1520" y="990" width="5.6" height="3.9" fill="#f4f4f4" opacity="0.53" transform="rotate(160 1520 990)"/><rect x="1550" y="663" width="8.4" height="3.9" fill="#f4f4f4" opacity="0.80" transform="rotate(97 1550 663)"/><rect x="1538" y="1060" width="7.5" height="3.6" fill="#eca0ae" opacity="0.51" transform="rotate(101 1538 1060)"/><rect x="1437" y="1084" width="6.1" height="3.2" fill="#ece4dc" opacity="0.75" transform="rotate(20 1437 1084)"/><rect x="1785" y="882" width="9.7" height="4.0" fill="#ccccdc" opacity="0.62" transform="rotate(18 1785 882)"/><rect x="1720" y="853" width="6.6" height="3.3" fill="#ccccdc" opacity="0.85" transform="rotate(104 1720 853)"/><rect x="1652" y="647" width="8.3" height="3.3" fill="#f2d498" opacity="0.92" transform="rotate(82 1652 647)"/><rect x="1620" y="1033" width="6.2" height="3.8" fill="#ece4dc" opacity="0.91" transform="rotate(135 1620 1033)"/><rect x="1580" y="1211" width="9.7" height="3.2" fill="#f2bc9e" opacity="0.78" transform="rotate(158 1580 1211)"/><rect x="1552" y="842" width="6.4" height="2.6" fill="#ccccdc" opacity="0.51" transform="rotate(142 1552 842)"/><rect x="1633" y="902" width="10.2" height="3.6" fill="#f0e8e0" opacity="0.88" transform="rotate(85 1633 902)"/><rect x="1662" y="1318" width="6.5" height="2.8" fill="#f4f4f4" opacity="0.65" transform="rotate(74 1662 1318)"/><rect x="1419" y="1012" width="5.0" height="3.8" fill="#ccccdc" opacity="0.86" transform="rotate(43 1419 1012)"/><rect x="1799" y="1004" width="5.6" height="4.0" fill="#e8e8f0" opacity="0.65" transform="rotate(56 1799 1004)"/><rect x="1700" y="679" width="6.3" height="4.1" fill="#dca4a4" opacity="0.81" transform="rotate(168 1700 679)"/><rect x="1493" y="819" width="6.0" height="3.2" fill="#acE4c4" opacity="0.84" transform="rotate(124 1493 819)"/><rect x="1809" y="817" width="6.2" height="2.8" fill="#e8e8f0" opacity="0.83" transform="rotate(174 1809 817)"/><rect x="1542" y="689" width="7.9" height="2.4" fill="#dca4a4" opacity="0.55" transform="rotate(13 1542 689)"/><rect x="1625" y="978" width="10.3" height="3.7" fill="#ffffff" opacity="0.58" transform="rotate(49 1625 978)"/><rect x="1538" y="711" width="7.4" height="3.8" fill="#ffffff" opacity="0.65" transform="rotate(17 1538 711)"/><rect x="1630" y="1206" width="8.7" height="2.9" fill="#eca0ae" opacity="0.53" transform="rotate(2 1630 1206)"/><rect x="1544" y="1092" width="5.3" height="3.3" fill="#f4f4f4" opacity="0.67" transform="rotate(151 1544 1092)"/><rect x="1694" y="1086" width="8.1" height="2.7" fill="#f4f4f4" opacity="0.62" transform="rotate(12 1694 1086)"/><rect x="1527" y="1143" width="8.6" height="4.0" fill="#f2bc9e" opacity="0.63" transform="rotate(164 1527 1143)"/><rect x="1652" y="901" width="9.2" height="2.7" fill="#eca0ae" opacity="0.84" transform="rotate(35 1652 901)"/><rect x="1506" y="899" width="7.6" height="3.3" fill="#dca4a4" opacity="0.82" transform="rotate(20 1506 899)"/><rect x="1636" y="968" width="7.4" height="2.5" fill="#ccccdc" opacity="0.70" transform="rotate(12 1636 968)"/><rect x="1578" y="1058" width="10.5" height="4.2" fill="#f4f4f4" opacity="0.92" transform="rotate(68 1578 1058)"/><rect x="1593" y="999" width="9.8" height="2.7" fill="#acE4c4" opacity="0.71" transform="rotate(15 1593 999)"/><rect x="1677" y="1285" width="5.7" height="3.9" fill="#ece4dc" opacity="0.59" transform="rotate(114 1677 1285)"/><rect x="1540" y="1093" width="10.4" height="3.3" fill="#f4f4f4" opacity="0.78" transform="rotate(32 1540 1093)"/><rect x="1644" y="1194" width="8.5" height="3.7" fill="#e8e8f0" opacity="0.61" transform="rotate(6 1644 1194)"/><rect x="1419" y="982" width="5.8" height="3.9" fill="#f4f4f4" opacity="0.89" transform="rotate(170 1419 982)"/><rect x="1457" y="892" width="10.0" height="2.7" fill="#f0e8e0" opacity="0.71" transform="rotate(41 1457 892)"/><rect x="1316" y="1134" width="6.6" height="4.3" fill="#acE4c4" opacity="0.84" transform="rotate(151 1316 1134)"/><rect x="1677" y="1039" width="10.2" height="3.1" fill="#f4f4f4" opacity="0.66" transform="rotate(122 1677 1039)"/><rect x="1717" y="971" width="9.7" height="3.8" fill="#eca0ae" opacity="0.78" transform="rotate(121 1717 971)"/><rect x="1644" y="790" width="6.1" height="4.3" fill="#eca0ae" opacity="0.94" transform="rotate(82 1644 790)"/><rect x="1677" y="1156" width="7.3" height="3.7" fill="#f2bc9e" opacity="0.61" transform="rotate(102 1677 1156)"/><rect x="1484" y="905" width="6.4" height="3.4" fill="#f2d498" opacity="0.57" transform="rotate(49 1484 905)"/><rect x="1395" y="736" width="5.3" height="2.8" fill="#f0e8e0" opacity="0.87" transform="rotate(30 1395 736)"/><rect x="1560" y="1179" width="6.4" height="3.4" fill="#f2bc9e" opacity="0.93" transform="rotate(40 1560 1179)"/><rect x="1728" y="825" width="5.3" height="4.1" fill="#f4f4f4" opacity="0.91" transform="rotate(19 1728 825)"/><rect x="1534" y="691" width="6.0" height="2.6" fill="#f2d498" opacity="0.88" transform="rotate(13 1534 691)"/><rect x="1443" y="808" width="8.2" height="3.9" fill="#dca4a4" opacity="0.59" transform="rotate(162 1443 808)"/><rect x="1473" y="1113" width="6.4" height="2.8" fill="#dca4a4" opacity="0.62" transform="rotate(66 1473 1113)"/><rect x="1572" y="1201" width="6.2" height="3.0" fill="#ffffff" opacity="0.71" transform="rotate(166 1572 1201)"/><rect x="1539" y="1103" width="8.9" height="3.6" fill="#ccccdc" opacity="0.85" transform="rotate(32 1539 1103)"/><rect x="1743" y="920" width="10.3" height="4.1" fill="#ccccdc" opacity="0.67" transform="rotate(42 1743 920)"/><rect x="1249" y="978" width="8.5" height="4.1" fill="#dca4a4" opacity="0.56" transform="rotate(20 1249 978)"/><rect x="1759" y="928" width="10.2" height="3.5" fill="#f2d498" opacity="0.64" transform="rotate(64 1759 928)"/><rect x="1679" y="1194" width="8.7" height="3.9" fill="#ece4dc" opacity="0.93" transform="rotate(71 1679 1194)"/><rect x="1695" y="1163" width="8.5" height="3.7" fill="#eca0ae" opacity="0.67" transform="rotate(174 1695 1163)"/><rect x="1407" y="1220" width="5.9" height="2.4" fill="#e8e8f0" opacity="0.89" transform="rotate(82 1407 1220)"/><rect x="1596" y="1043" width="7.9" height="3.8" fill="#ece4dc" opacity="0.86" transform="rotate(49 1596 1043)"/><rect x="1629" y="812" width="9.3" height="2.8" fill="#ece4dc" opacity="0.92" transform="rotate(4 1629 812)"/><rect x="1460" y="870" width="7.3" height="3.3" fill="#f4f4f4" opacity="0.92" transform="rotate(47 1460 870)"/><rect x="1569" y="822" width="6.5" height="2.4" fill="#acE4c4" opacity="0.56" transform="rotate(9 1569 822)"/><rect x="1740" y="1054" width="10.4" height="3.9" fill="#f2d498" opacity="0.67" transform="rotate(135 1740 1054)"/><rect x="1621" y="1130" width="9.4" height="2.5" fill="#eca0ae" opacity="0.86" transform="rotate(106 1621 1130)"/><rect x="1848" y="950" width="7.6" height="3.9" fill="#e8e8f0" opacity="0.71" transform="rotate(112 1848 950)"/><rect x="1928" y="938" width="6.2" height="4.0" fill="#acE4c4" opacity="0.73" transform="rotate(82 1928 938)"/><rect x="1616" y="997" width="6.8" height="2.4" fill="#f4f4f4" opacity="0.60" transform="rotate(41 1616 997)"/><rect x="1444" y="840" width="8.4" height="4.1" fill="#acE4c4" opacity="0.95" transform="rotate(37 1444 840)"/><rect x="1457" y="685" width="8.7" height="3.7" fill="#f2d498" opacity="0.64" transform="rotate(145 1457 685)"/><rect x="1618" y="1132" width="5.3" height="3.5" fill="#f4f4f4" opacity="0.65" transform="rotate(16 1618 1132)"/><rect x="1529" y="1176" width="8.8" height="3.3" fill="#ece4dc" opacity="0.55" transform="rotate(56 1529 1176)"/><rect x="1584" y="971" width="6.2" height="2.9" fill="#f2d498" opacity="0.85" transform="rotate(86 1584 971)"/><rect x="1806" y="895" width="7.5" height="4.2" fill="#f0e8e0" opacity="0.52" transform="rotate(168 1806 895)"/><rect x="1870" y="1165" width="5.7" height="4.0" fill="#dca4a4" opacity="0.56" transform="rotate(170 1870 1165)"/><rect x="1762" y="959" width="8.4" height="2.9" fill="#e8e8f0" opacity="0.85" transform="rotate(12 1762 959)"/><rect x="1714" y="940" width="5.5" height="4.2" fill="#acE4c4" opacity="0.91" transform="rotate(9 1714 940)"/><rect x="1663" y="1098" width="7.9" height="3.7" fill="#dca4a4" opacity="0.77" transform="rotate(57 1663 1098)"/><rect x="1597" y="919" width="9.4" height="3.7" fill="#eca0ae" opacity="0.71" transform="rotate(65 1597 919)"/><rect x="1732" y="1017" width="5.5" height="4.2" fill="#f2d498" opacity="0.71" transform="rotate(169 1732 1017)"/><rect x="1514" y="1129" width="9.0" height="2.6" fill="#ffffff" opacity="0.55" transform="rotate(35 1514 1129)"/><rect x="1681" y="961" width="10.4" height="2.6" fill="#ccccdc" opacity="0.64" transform="rotate(154 1681 961)"/><rect x="1717" y="1138" width="8.6" height="2.4" fill="#eca0ae" opacity="0.76" transform="rotate(0 1717 1138)"/><rect x="1406" y="650" width="8.3" height="4.1" fill="#ccccdc" opacity="0.60" transform="rotate(171 1406 650)"/><rect x="1851" y="858" width="6.7" height="3.5" fill="#acE4c4" opacity="0.55" transform="rotate(71 1851 858)"/><rect x="1344" y="797" width="7.3" height="3.6" fill="#eca0ae" opacity="0.87" transform="rotate(160 1344 797)"/><rect x="1879" y="1080" width="5.9" height="2.6" fill="#dca4a4" opacity="0.80" transform="rotate(55 1879 1080)"/><rect x="1687" y="901" width="9.6" height="2.6" fill="#ccccdc" opacity="0.80" transform="rotate(97 1687 901)"/><rect x="1532" y="1169" width="9.7" height="4.2" fill="#dca4a4" opacity="0.79" transform="rotate(157 1532 1169)"/><rect x="1453" y="873" width="9.3" height="3.9" fill="#eca0ae" opacity="0.83" transform="rotate(157 1453 873)"/><rect x="1655" y="888" width="9.9" height="4.1" fill="#ccccdc" opacity="0.53" transform="rotate(5 1655 888)"/><rect x="1616" y="689" width="6.1" height="3.2" fill="#ffffff" opacity="0.93" transform="rotate(72 1616 689)"/><rect x="1377" y="853" width="7.6" height="4.1" fill="#acE4c4" opacity="0.83" transform="rotate(132 1377 853)"/><rect x="1357" y="882" width="10.0" height="3.5" fill="#dca4a4" opacity="0.53" transform="rotate(180 1357 882)"/><rect x="1953" y="946" width="6.2" height="2.7" fill="#e8e8f0" opacity="0.81" transform="rotate(98 1953 946)"/><rect x="1615" y="727" width="5.2" height="3.5" fill="#f2bc9e" opacity="0.69" transform="rotate(78 1615 727)"/><rect x="1318" y="705" width="7.0" height="2.7" fill="#f4f4f4" opacity="0.60" transform="rotate(134 1318 705)"/><rect x="1547" y="1242" width="7.4" height="3.1" fill="#f2d498" opacity="0.59" transform="rotate(128 1547 1242)"/><rect x="1474" y="848" width="6.0" height="3.4" fill="#e8e8f0" opacity="0.89" transform="rotate(90 1474 848)"/><rect x="1797" y="1053" width="7.1" height="4.0" fill="#f2bc9e" opacity="0.58" transform="rotate(162 1797 1053)"/><rect x="1352" y="1261" width="7.0" height="4.1" fill="#f4f4f4" opacity="0.91" transform="rotate(37 1352 1261)"/><rect x="1509" y="1221" width="8.9" height="2.7" fill="#f2bc9e" opacity="0.75" transform="rotate(83 1509 1221)"/><rect x="1393" y="1052" width="6.4" height="2.9" fill="#dca4a4" opacity="0.78" transform="rotate(76 1393 1052)"/><rect x="1627" y="679" width="5.9" height="3.9" fill="#eca0ae" opacity="0.73" transform="rotate(97 1627 679)"/><rect x="1326" y="762" width="10.0" height="2.7" fill="#ece4dc" opacity="0.84" transform="rotate(105 1326 762)"/><rect x="1559" y="1126" width="9.6" height="4.2" fill="#f4f4f4" opacity="0.70" transform="rotate(9 1559 1126)"/><rect x="1552" y="1184" width="7.5" height="3.6" fill="#ccccdc" opacity="0.68" transform="rotate(180 1552 1184)"/><rect x="1514" y="1133" width="10.5" height="2.8" fill="#ccccdc" opacity="0.78" transform="rotate(156 1514 1133)"/><rect x="1642" y="849" width="5.5" height="2.7" fill="#dca4a4" opacity="0.63" transform="rotate(57 1642 849)"/><rect x="1675" y="926" width="9.6" height="3.8" fill="#ffffff" opacity="0.93" transform="rotate(107 1675 926)"/><rect x="1651" y="963" width="5.8" height="2.6" fill="#f2d498" opacity="0.94" transform="rotate(13 1651 963)"/><rect x="1774" y="917" width="6.9" height="3.2" fill="#f2d498" opacity="0.79" transform="rotate(63 1774 917)"/><rect x="1681" y="959" width="5.2" height="3.9" fill="#dca4a4" opacity="0.78" transform="rotate(86 1681 959)"/><rect x="1532" y="936" width="8.6" height="3.8" fill="#f2bc9e" opacity="0.78" transform="rotate(171 1532 936)"/><rect x="1766" y="1103" width="7.2" height="3.0" fill="#eca0ae" opacity="0.65" transform="rotate(103 1766 1103)"/><rect x="1542" y="721" width="9.4" height="2.4" fill="#ffffff" opacity="0.70" transform="rotate(58 1542 721)"/><rect x="1558" y="829" width="8.0" height="3.9" fill="#ffffff" opacity="0.55" transform="rotate(59 1558 829)"/><rect x="1583" y="816" width="8.4" height="3.4" fill="#f4f4f4" opacity="0.67" transform="rotate(154 1583 816)"/><rect x="1376" y="906" width="8.0" height="2.9" fill="#ffffff" opacity="0.57" transform="rotate(60 1376 906)"/><rect x="1834" y="1111" width="5.1" height="2.7" fill="#f2bc9e" opacity="0.57" transform="rotate(11 1834 1111)"/><rect x="1695" y="797" width="9.0" height="4.1" fill="#dca4a4" opacity="0.75" transform="rotate(170 1695 797)"/><rect x="1628" y="1304" width="5.8" height="4.0" fill="#ffffff" opacity="0.89" transform="rotate(7 1628 1304)"/><rect x="1836" y="905" width="9.1" height="3.5" fill="#f4f4f4" opacity="0.54" transform="rotate(176 1836 905)"/><rect x="1557" y="865" width="7.5" height="2.5" fill="#ccccdc" opacity="0.80" transform="rotate(36 1557 865)"/><rect x="1646" y="801" width="10.5" height="3.7" fill="#f2bc9e" opacity="0.90" transform="rotate(32 1646 801)"/><rect x="1437" y="1182" width="7.5" height="3.5" fill="#ffffff" opacity="0.75" transform="rotate(163 1437 1182)"/><rect x="1793" y="941" width="8.6" height="3.3" fill="#f4f4f4" opacity="0.91" transform="rotate(27 1793 941)"/><rect x="1617" y="1024" width="5.8" height="2.7" fill="#e8e8f0" opacity="0.50" transform="rotate(69 1617 1024)"/><rect x="1627" y="1187" width="5.0" height="3.9" fill="#e8e8f0" opacity="0.59" transform="rotate(75 1627 1187)"/><rect x="1415" y="901" width="8.6" height="3.0" fill="#f0e8e0" opacity="0.92" transform="rotate(86 1415 901)"/><rect x="1530" y="1060" width="6.5" height="4.1" fill="#f0e8e0" opacity="0.87" transform="rotate(143 1530 1060)"/><rect x="1718" y="1316" width="6.8" height="3.8" fill="#f0e8e0" opacity="0.65" transform="rotate(47 1718 1316)"/><rect x="1240" y="1032" width="9.7" height="4.3" fill="#f4f4f4" opacity="0.57" transform="rotate(89 1240 1032)"/><rect x="1484" y="1160" width="8.2" height="4.1" fill="#f2d498" opacity="0.82" transform="rotate(106 1484 1160)"/><rect x="1546" y="1238" width="7.4" height="4.1" fill="#ece4dc" opacity="0.83" transform="rotate(146 1546 1238)"/><rect x="1728" y="1083" width="9.0" height="2.7" fill="#acE4c4" opacity="0.85" transform="rotate(118 1728 1083)"/><rect x="1340" y="983" width="8.8" height="3.6" fill="#e8e8f0" opacity="0.89" transform="rotate(50 1340 983)"/><rect x="1545" y="915" width="10.2" height="3.2" fill="#f2bc9e" opacity="0.87" transform="rotate(21 1545 915)"/><rect x="1352" y="843" width="9.1" height="4.2" fill="#f2d498" opacity="0.89" transform="rotate(63 1352 843)"/><rect x="1412" y="819" width="7.8" height="3.2" fill="#ece4dc" opacity="0.88" transform="rotate(5 1412 819)"/><rect x="1623" y="1131" width="9.0" height="3.0" fill="#f2bc9e" opacity="0.93" transform="rotate(168 1623 1131)"/><rect x="1598" y="1081" width="9.6" height="2.8" fill="#eca0ae" opacity="0.71" transform="rotate(30 1598 1081)"/><rect x="1376" y="1176" width="6.4" height="4.1" fill="#f0e8e0" opacity="0.64" transform="rotate(40 1376 1176)"/><rect x="1721" y="1317" width="10.3" height="2.7" fill="#ffffff" opacity="0.86" transform="rotate(75 1721 1317)"/><rect x="1643" y="1106" width="9.1" height="2.8" fill="#dca4a4" opacity="0.93" transform="rotate(83 1643 1106)"/><rect x="1706" y="1270" width="7.2" height="2.6" fill="#ffffff" opacity="0.71" transform="rotate(25 1706 1270)"/><rect x="1776" y="1276" width="5.5" height="3.3" fill="#ccccdc" opacity="0.57" transform="rotate(175 1776 1276)"/><rect x="1337" y="1244" width="5.8" height="3.5" fill="#f2d498" opacity="0.76" transform="rotate(174 1337 1244)"/><rect x="1232" y="858" width="7.5" height="3.0" fill="#e8e8f0" opacity="0.81" transform="rotate(140 1232 858)"/><rect x="1683" y="969" width="10.1" height="2.7" fill="#e8e8f0" opacity="0.80" transform="rotate(172 1683 969)"/><rect x="1489" y="887" width="10.3" height="2.8" fill="#ece4dc" opacity="0.69" transform="rotate(175 1489 887)"/><rect x="1459" y="992" width="6.3" height="2.5" fill="#ece4dc" opacity="0.95" transform="rotate(52 1459 992)"/><rect x="1378" y="1103" width="8.9" height="2.3" fill="#f2d498" opacity="0.54" transform="rotate(9 1378 1103)"/><rect x="1766" y="833" width="7.8" height="3.0" fill="#dca4a4" opacity="0.87" transform="rotate(128 1766 833)"/><rect x="1621" y="764" width="6.5" height="4.1" fill="#ccccdc" opacity="0.80" transform="rotate(93 1621 764)"/><rect x="1528" y="904" width="10.5" height="2.4" fill="#f2d498" opacity="0.55" transform="rotate(107 1528 904)"/><rect x="1577" y="1149" width="7.0" height="3.6" fill="#f4f4f4" opacity="0.95" transform="rotate(172 1577 1149)"/><rect x="1670" y="1066" width="8.6" height="2.6" fill="#dca4a4" opacity="0.56" transform="rotate(131 1670 1066)"/><rect x="1677" y="1184" width="8.1" height="2.5" fill="#ffffff" opacity="0.74" transform="rotate(89 1677 1184)"/><rect x="1608" y="930" width="6.3" height="3.9" fill="#ece4dc" opacity="0.88" transform="rotate(43 1608 930)"/><rect x="1834" y="1043" width="7.4" height="3.3" fill="#e8e8f0" opacity="0.95" transform="rotate(7 1834 1043)"/><rect x="1624" y="819" width="6.9" height="2.5" fill="#ece4dc" opacity="0.73" transform="rotate(136 1624 819)"/><rect x="1543" y="748" width="8.9" height="3.2" fill="#f4f4f4" opacity="0.72" transform="rotate(30 1543 748)"/><rect x="1710" y="1315" width="9.1" height="3.9" fill="#acE4c4" opacity="0.73" transform="rotate(142 1710 1315)"/><rect x="1781" y="870" width="8.9" height="3.3" fill="#e8e8f0" opacity="0.59" transform="rotate(30 1781 870)"/><rect x="1733" y="819" width="7.5" height="2.8" fill="#eca0ae" opacity="0.80" transform="rotate(84 1733 819)"/><rect x="1687" y="890" width="6.4" height="3.6" fill="#f4f4f4" opacity="0.68" transform="rotate(59 1687 890)"/><rect x="1510" y="1110" width="5.4" height="3.4" fill="#e8e8f0" opacity="0.54" transform="rotate(178 1510 1110)"/><rect x="1623" y="984" width="7.7" height="2.7" fill="#ffffff" opacity="0.75" transform="rotate(121 1623 984)"/><rect x="1768" y="947" width="9.9" height="2.6" fill="#f2d498" opacity="0.56" transform="rotate(12 1768 947)"/><rect x="1663" y="1108" width="8.8" height="3.5" fill="#f4f4f4" opacity="0.86" transform="rotate(176 1663 1108)"/><rect x="1823" y="1179" width="6.3" height="2.7" fill="#acE4c4" opacity="0.66" transform="rotate(171 1823 1179)"/><rect x="1707" y="1115" width="7.0" height="3.7" fill="#ffffff" opacity="0.70" transform="rotate(50 1707 1115)"/><rect x="1786" y="645" width="8.5" height="2.6" fill="#ece4dc" opacity="0.55" transform="rotate(157 1786 645)"/><rect x="1716" y="901" width="8.7" height="2.3" fill="#ccccdc" opacity="0.54" transform="rotate(8 1716 901)"/><rect x="1347" y="850" width="9.1" height="3.4" fill="#ffffff" opacity="0.94" transform="rotate(168 1347 850)"/><rect x="1435" y="1080" width="10.2" height="3.4" fill="#dca4a4" opacity="0.59" transform="rotate(35 1435 1080)"/><rect x="1684" y="1137" width="8.1" height="4.3" fill="#e8e8f0" opacity="0.73" transform="rotate(112 1684 1137)"/><rect x="1685" y="985" width="7.3" height="3.6" fill="#dca4a4" opacity="0.63" transform="rotate(33 1685 985)"/><rect x="1472" y="966" width="8.9" height="4.0" fill="#dca4a4" opacity="0.63" transform="rotate(98 1472 966)"/><rect x="1518" y="916" width="7.7" height="3.8" fill="#ffffff" opacity="0.89" transform="rotate(38 1518 916)"/><rect x="1325" y="1124" width="7.5" height="2.5" fill="#e8e8f0" opacity="0.59" transform="rotate(65 1325 1124)"/><rect x="1633" y="801" width="8.5" height="3.7" fill="#f4f4f4" opacity="0.65" transform="rotate(49 1633 801)"/><rect x="1378" y="921" width="7.4" height="3.5" fill="#acE4c4" opacity="0.86" transform="rotate(160 1378 921)"/><rect x="1551" y="798" width="9.1" height="3.3" fill="#acE4c4" opacity="0.90" transform="rotate(66 1551 798)"/><rect x="1263" y="873" width="6.6" height="2.6" fill="#e8e8f0" opacity="0.58" transform="rotate(28 1263 873)"/><rect x="1667" y="1269" width="9.9" height="3.2" fill="#ccccdc" opacity="0.73" transform="rotate(35 1667 1269)"/><rect x="1353" y="861" width="5.7" height="2.4" fill="#eca0ae" opacity="0.51" transform="rotate(129 1353 861)"/><rect x="1494" y="1101" width="6.1" height="4.0" fill="#eca0ae" opacity="0.71" transform="rotate(164 1494 1101)"/><rect x="1509" y="1167" width="9.9" height="2.5" fill="#dca4a4" opacity="0.79" transform="rotate(103 1509 1167)"/><rect x="1513" y="1051" width="6.2" height="2.9" fill="#ccccdc" opacity="0.51" transform="rotate(75 1513 1051)"/><rect x="1500" y="914" width="6.8" height="2.8" fill="#dca4a4" opacity="0.86" transform="rotate(114 1500 914)"/><rect x="1407" y="797" width="8.0" height="3.1" fill="#ece4dc" opacity="0.94" transform="rotate(144 1407 797)"/><rect x="1407" y="1158" width="9.1" height="4.2" fill="#acE4c4" opacity="0.71" transform="rotate(158 1407 1158)"/><rect x="1588" y="893" width="7.4" height="3.3" fill="#ccccdc" opacity="0.73" transform="rotate(52 1588 893)"/><rect x="1741" y="895" width="9.7" height="2.7" fill="#ccccdc" opacity="0.88" transform="rotate(158 1741 895)"/><rect x="1478" y="1051" width="9.2" height="3.5" fill="#ece4dc" opacity="0.66" transform="rotate(129 1478 1051)"/><rect x="1545" y="1311" width="5.8" height="3.6" fill="#f2bc9e" opacity="0.69" transform="rotate(21 1545 1311)"/><rect x="1702" y="1093" width="8.7" height="3.2" fill="#eca0ae" opacity="0.58" transform="rotate(73 1702 1093)"/><rect x="1755" y="1121" width="9.5" height="2.4" fill="#ccccdc" opacity="0.81" transform="rotate(68 1755 1121)"/><rect x="1869" y="1102" width="7.7" height="3.2" fill="#f2bc9e" opacity="0.53" transform="rotate(36 1869 1102)"/><rect x="1834" y="1120" width="9.2" height="3.6" fill="#acE4c4" opacity="0.75" transform="rotate(157 1834 1120)"/><rect x="1609" y="852" width="8.7" height="3.4" fill="#f0e8e0" opacity="0.88" transform="rotate(111 1609 852)"/><rect x="1582" y="1099" width="5.7" height="4.0" fill="#dca4a4" opacity="0.94" transform="rotate(89 1582 1099)"/><rect x="1459" y="1201" width="5.6" height="3.5" fill="#dca4a4" opacity="0.83" transform="rotate(6 1459 1201)"/><rect x="1639" y="824" width="9.6" height="3.3" fill="#eca0ae" opacity="0.70" transform="rotate(3 1639 824)"/><rect x="1512" y="1206" width="7.9" height="4.0" fill="#e8e8f0" opacity="0.65" transform="rotate(37 1512 1206)"/><rect x="1634" y="1067" width="5.7" height="2.6" fill="#acE4c4" opacity="0.64" transform="rotate(53 1634 1067)"/><rect x="1672" y="1141" width="10.3" height="3.5" fill="#dca4a4" opacity="0.92" transform="rotate(175 1672 1141)"/><rect x="1639" y="1193" width="6.3" height="2.5" fill="#dca4a4" opacity="0.72" transform="rotate(167 1639 1193)"/><rect x="1694" y="1051" width="8.0" height="3.1" fill="#eca0ae" opacity="0.92" transform="rotate(145 1694 1051)"/><rect x="1629" y="941" width="6.9" height="3.3" fill="#ccccdc" opacity="0.68" transform="rotate(112 1629 941)"/><rect x="1666" y="1262" width="7.3" height="2.7" fill="#eca0ae" opacity="0.85" transform="rotate(175 1666 1262)"/><rect x="1553" y="777" width="6.9" height="3.9" fill="#acE4c4" opacity="0.66" transform="rotate(17 1553 777)"/><rect x="1548" y="725" width="6.7" height="3.9" fill="#acE4c4" opacity="0.61" transform="rotate(157 1548 725)"/><rect x="1780" y="1207" width="8.3" height="3.6" fill="#f2bc9e" opacity="0.63" transform="rotate(23 1780 1207)"/><rect x="1637" y="1229" width="7.4" height="3.6" fill="#eca0ae" opacity="0.88" transform="rotate(172 1637 1229)"/><rect x="1780" y="831" width="5.5" height="3.7" fill="#f2bc9e" opacity="0.71" transform="rotate(151 1780 831)"/><rect x="1426" y="1008" width="9.6" height="2.3" fill="#eca0ae" opacity="0.70" transform="rotate(167 1426 1008)"/><rect x="1652" y="1247" width="5.6" height="3.2" fill="#acE4c4" opacity="0.78" transform="rotate(153 1652 1247)"/><rect x="1671" y="1046" width="6.9" height="2.5" fill="#e8e8f0" opacity="0.57" transform="rotate(145 1671 1046)"/><rect x="1554" y="851" width="6.4" height="3.9" fill="#f4f4f4" opacity="0.88" transform="rotate(144 1554 851)"/><rect x="1622" y="814" width="5.5" height="3.3" fill="#acE4c4" opacity="0.91" transform="rotate(45 1622 814)"/><rect x="1889" y="1155" width="9.7" height="2.5" fill="#ffffff" opacity="0.81" transform="rotate(135 1889 1155)"/><rect x="1688" y="1173" width="5.2" height="3.8" fill="#dca4a4" opacity="0.68" transform="rotate(74 1688 1173)"/><rect x="1585" y="855" width="5.4" height="4.2" fill="#ffffff" opacity="0.80" transform="rotate(92 1585 855)"/><rect x="1345" y="1040" width="6.5" height="4.0" fill="#f2d498" opacity="0.59" transform="rotate(163 1345 1040)"/><rect x="1311" y="988" width="5.7" height="3.7" fill="#f2d498" opacity="0.94" transform="rotate(162 1311 988)"/><rect x="1442" y="652" width="7.6" height="2.6" fill="#e8e8f0" opacity="0.83" transform="rotate(54 1442 652)"/><rect x="1439" y="782" width="8.6" height="3.6" fill="#ffffff" opacity="0.82" transform="rotate(4 1439 782)"/><rect x="1594" y="996" width="5.3" height="2.5" fill="#acE4c4" opacity="0.64" transform="rotate(8 1594 996)"/><rect x="1642" y="1013" width="9.4" height="2.5" fill="#ece4dc" opacity="0.95" transform="rotate(132 1642 1013)"/><rect x="1647" y="846" width="8.9" height="3.5" fill="#f2d498" opacity="0.90" transform="rotate(115 1647 846)"/><rect x="1522" y="973" width="10.1" height="3.1" fill="#ffffff" opacity="0.79" transform="rotate(36 1522 973)"/><rect x="1575" y="1156" width="5.2" height="3.2" fill="#eca0ae" opacity="0.57" transform="rotate(157 1575 1156)"/><rect x="1657" y="907" width="8.4" height="3.0" fill="#f2bc9e" opacity="0.69" transform="rotate(109 1657 907)"/><rect x="1674" y="1280" width="7.3" height="2.4" fill="#acE4c4" opacity="0.91" transform="rotate(80 1674 1280)"/><rect x="1522" y="941" width="9.2" height="2.5" fill="#f2d498" opacity="0.64" transform="rotate(144 1522 941)"/><rect x="1729" y="1129" width="5.7" height="3.2" fill="#f2bc9e" opacity="0.73" transform="rotate(3 1729 1129)"/><rect x="1605" y="1076" width="9.5" height="3.4" fill="#ece4dc" opacity="0.56" transform="rotate(109 1605 1076)"/><rect x="1876" y="1147" width="7.2" height="3.5" fill="#ece4dc" opacity="0.69" transform="rotate(155 1876 1147)"/><rect x="1791" y="1031" width="6.2" height="4.0" fill="#e8e8f0" opacity="0.72" transform="rotate(155 1791 1031)"/><rect x="1477" y="769" width="6.6" height="2.8" fill="#ece4dc" opacity="0.54" transform="rotate(116 1477 769)"/><rect x="1633" y="993" width="6.9" height="3.0" fill="#dca4a4" opacity="0.63" transform="rotate(57 1633 993)"/><rect x="1593" y="852" width="7.8" height="3.5" fill="#eca0ae" opacity="0.95" transform="rotate(108 1593 852)"/><rect x="1512" y="1196" width="8.6" height="3.9" fill="#ece4dc" opacity="0.62" transform="rotate(100 1512 1196)"/><rect x="1523" y="1120" width="7.0" height="3.7" fill="#f2d498" opacity="0.71" transform="rotate(167 1523 1120)"/><rect x="1765" y="1127" width="5.6" height="3.3" fill="#e8e8f0" opacity="0.69" transform="rotate(117 1765 1127)"/><rect x="1710" y="1251" width="7.2" height="3.7" fill="#e8e8f0" opacity="0.81" transform="rotate(35 1710 1251)"/><rect x="1500" y="1146" width="8.1" height="3.3" fill="#f2bc9e" opacity="0.93" transform="rotate(34 1500 1146)"/><rect x="1467" y="1171" width="10.5" height="3.2" fill="#eca0ae" opacity="0.81" transform="rotate(151 1467 1171)"/><rect x="1555" y="1173" width="9.9" height="3.2" fill="#f0e8e0" opacity="0.67" transform="rotate(60 1555 1173)"/><rect x="1743" y="1185" width="8.7" height="2.6" fill="#f0e8e0" opacity="0.74" transform="rotate(28 1743 1185)"/><rect x="1351" y="968" width="9.8" height="3.3" fill="#dca4a4" opacity="0.60" transform="rotate(26 1351 968)"/><rect x="1838" y="824" width="7.2" height="2.3" fill="#f2d498" opacity="0.71" transform="rotate(78 1838 824)"/><rect x="1412" y="942" width="5.5" height="4.2" fill="#eca0ae" opacity="0.51" transform="rotate(73 1412 942)"/><rect x="1398" y="710" width="8.2" height="3.3" fill="#acE4c4" opacity="0.60" transform="rotate(44 1398 710)"/><rect x="1554" y="682" width="9.2" height="3.5" fill="#f0e8e0" opacity="0.86" transform="rotate(113 1554 682)"/><rect x="1571" y="1115" width="8.0" height="3.9" fill="#dca4a4" opacity="0.71" transform="rotate(28 1571 1115)"/><rect x="1621" y="877" width="10.4" height="3.9" fill="#ccccdc" opacity="0.77" transform="rotate(119 1621 877)"/><rect x="1641" y="1269" width="8.1" height="3.0" fill="#ccccdc" opacity="0.73" transform="rotate(167 1641 1269)"/><rect x="1581" y="669" width="6.4" height="2.8" fill="#dca4a4" opacity="0.70" transform="rotate(77 1581 669)"/><rect x="1830" y="956" width="9.2" height="2.9" fill="#f0e8e0" opacity="0.58" transform="rotate(20 1830 956)"/><rect x="1578" y="720" width="6.2" height="2.7" fill="#eca0ae" opacity="0.93" transform="rotate(120 1578 720)"/><rect x="1526" y="1181" width="10.3" height="2.6" fill="#ffffff" opacity="0.51" transform="rotate(14 1526 1181)"/><rect x="1521" y="1243" width="7.8" height="2.5" fill="#f2bc9e" opacity="0.85" transform="rotate(42 1521 1243)"/><rect x="1597" y="1041" width="7.7" height="3.1" fill="#dca4a4" opacity="0.50" transform="rotate(116 1597 1041)"/><rect x="1712" y="668" width="7.4" height="2.7" fill="#f4f4f4" opacity="0.54" transform="rotate(178 1712 668)"/><rect x="1340" y="680" width="10.3" height="4.0" fill="#f0e8e0" opacity="0.64" transform="rotate(105 1340 680)"/><rect x="1718" y="1294" width="7.3" height="4.2" fill="#dca4a4" opacity="0.67" transform="rotate(90 1718 1294)"/><rect x="1531" y="977" width="9.0" height="3.9" fill="#ece4dc" opacity="0.83" transform="rotate(108 1531 977)"/><rect x="1626" y="962" width="9.2" height="4.0" fill="#f0e8e0" opacity="0.90" transform="rotate(55 1626 962)"/><rect x="1533" y="1094" width="9.5" height="4.1" fill="#f0e8e0" opacity="0.71" transform="rotate(45 1533 1094)"/><rect x="1706" y="1052" width="6.3" height="4.0" fill="#f0e8e0" opacity="0.86" transform="rotate(72 1706 1052)"/><rect x="1628" y="1091" width="7.4" height="4.1" fill="#f0e8e0" opacity="0.94" transform="rotate(114 1628 1091)"/><rect x="1381" y="1066" width="7.9" height="3.7" fill="#f4f4f4" opacity="0.57" transform="rotate(170 1381 1066)"/><rect x="1616" y="1125" width="8.9" height="3.8" fill="#e8e8f0" opacity="0.57" transform="rotate(44 1616 1125)"/><rect x="1557" y="821" width="9.1" height="3.7" fill="#ccccdc" opacity="0.78" transform="rotate(176 1557 821)"/><rect x="1715" y="1199" width="10.2" height="2.6" fill="#dca4a4" opacity="0.93" transform="rotate(81 1715 1199)"/><rect x="1681" y="839" width="7.0" height="3.4" fill="#f4f4f4" opacity="0.92" transform="rotate(143 1681 839)"/><rect x="1631" y="866" width="6.7" height="3.7" fill="#ece4dc" opacity="0.88" transform="rotate(104 1631 866)"/><rect x="1653" y="955" width="9.1" height="3.3" fill="#ece4dc" opacity="0.60" transform="rotate(151 1653 955)"/><rect x="1489" y="1232" width="5.5" height="3.8" fill="#e8e8f0" opacity="0.73" transform="rotate(139 1489 1232)"/><rect x="1523" y="1122" width="8.7" height="3.2" fill="#f0e8e0" opacity="0.74" transform="rotate(145 1523 1122)"/><rect x="1639" y="735" width="9.9" height="2.8" fill="#e8e8f0" opacity="0.89" transform="rotate(126 1639 735)"/><rect x="1603" y="1146" width="10.1" height="3.7" fill="#dca4a4" opacity="0.57" transform="rotate(145 1603 1146)"/><rect x="1833" y="692" width="5.5" height="3.6" fill="#eca0ae" opacity="0.70" transform="rotate(15 1833 692)"/><rect x="1516" y="912" width="6.1" height="3.5" fill="#ccccdc" opacity="0.85" transform="rotate(78 1516 912)"/><rect x="1563" y="1004" width="7.1" height="2.9" fill="#ece4dc" opacity="0.60" transform="rotate(51 1563 1004)"/><rect x="1515" y="864" width="6.6" height="4.0" fill="#ffffff" opacity="0.64" transform="rotate(115 1515 864)"/><rect x="1650" y="1065" width="5.3" height="3.2" fill="#ffffff" opacity="0.62" transform="rotate(77 1650 1065)"/><rect x="1674" y="1165" width="10.4" height="3.3" fill="#ccccdc" opacity="0.67" transform="rotate(69 1674 1165)"/><rect x="1718" y="727" width="9.1" height="4.1" fill="#acE4c4" opacity="0.68" transform="rotate(119 1718 727)"/><rect x="1834" y="1234" width="8.2" height="3.5" fill="#f2bc9e" opacity="0.91" transform="rotate(112 1834 1234)"/><rect x="1693" y="1077" width="10.4" height="2.4" fill="#ffffff" opacity="0.67" transform="rotate(153 1693 1077)"/><rect x="1439" y="1154" width="6.1" height="3.9" fill="#ece4dc" opacity="0.79" transform="rotate(132 1439 1154)"/><rect x="1438" y="780" width="7.5" height="3.2" fill="#eca0ae" opacity="0.53" transform="rotate(70 1438 780)"/><rect x="1744" y="995" width="8.2" height="3.2" fill="#f2d498" opacity="0.80" transform="rotate(177 1744 995)"/><rect x="1514" y="1030" width="8.4" height="3.3" fill="#ccccdc" opacity="0.61" transform="rotate(178 1514 1030)"/><rect x="1507" y="857" width="7.7" height="3.2" fill="#f0e8e0" opacity="0.73" transform="rotate(176 1507 857)"/><rect x="1607" y="1092" width="6.6" height="2.5" fill="#ffffff" opacity="0.85" transform="rotate(39 1607 1092)"/><rect x="1541" y="943" width="8.0" height="3.4" fill="#ece4dc" opacity="0.58" transform="rotate(8 1541 943)"/><rect x="1634" y="1150" width="7.0" height="2.6" fill="#f2d498" opacity="0.60" transform="rotate(58 1634 1150)"/><rect x="1549" y="672" width="8.4" height="2.9" fill="#eca0ae" opacity="0.62" transform="rotate(80 1549 672)"/><rect x="1591" y="960" width="5.9" height="3.8" fill="#ccccdc" opacity="0.84" transform="rotate(170 1591 960)"/><rect x="1529" y="734" width="5.4" height="2.9" fill="#acE4c4" opacity="0.74" transform="rotate(65 1529 734)"/><rect x="1326" y="1076" width="5.6" height="3.0" fill="#ccccdc" opacity="0.51" transform="rotate(42 1326 1076)"/><rect x="1761" y="945" width="9.0" height="2.9" fill="#eca0ae" opacity="0.63" transform="rotate(42 1761 945)"/><rect x="1399" y="1134" width="6.9" height="3.8" fill="#f2d498" opacity="0.54" transform="rotate(103 1399 1134)"/><rect x="1369" y="1230" width="8.8" height="3.6" fill="#ffffff" opacity="0.59" transform="rotate(117 1369 1230)"/><rect x="1476" y="1175" width="8.0" height="3.8" fill="#f4f4f4" opacity="0.71" transform="rotate(88 1476 1175)"/><rect x="1470" y="1246" width="6.6" height="3.7" fill="#ffffff" opacity="0.86" transform="rotate(25 1470 1246)"/><rect x="1813" y="1067" width="9.7" height="2.9" fill="#f2bc9e" opacity="0.83" transform="rotate(89 1813 1067)"/><rect x="1712" y="879" width="9.0" height="3.5" fill="#acE4c4" opacity="0.55" transform="rotate(31 1712 879)"/><rect x="1627" y="1153" width="6.4" height="3.3" fill="#ffffff" opacity="0.92" transform="rotate(49 1627 1153)"/><rect x="1640" y="835" width="9.1" height="3.7" fill="#acE4c4" opacity="0.80" transform="rotate(101 1640 835)"/><rect x="1484" y="1172" width="9.4" height="2.8" fill="#e8e8f0" opacity="0.64" transform="rotate(62 1484 1172)"/><rect x="1635" y="724" width="7.5" height="2.9" fill="#f4f4f4" opacity="0.65" transform="rotate(95 1635 724)"/><rect x="1688" y="1266" width="8.1" height="3.3" fill="#f2bc9e" opacity="0.61" transform="rotate(59 1688 1266)"/><rect x="1548" y="818" width="6.4" height="2.8" fill="#dca4a4" opacity="0.61" transform="rotate(35 1548 818)"/><rect x="1487" y="1006" width="9.6" height="3.0" fill="#e8e8f0" opacity="0.53" transform="rotate(90 1487 1006)"/><rect x="1609" y="1094" width="7.6" height="2.4" fill="#ece4dc" opacity="0.62" transform="rotate(62 1609 1094)"/><rect x="1707" y="1001" width="5.5" height="3.5" fill="#f2bc9e" opacity="0.64" transform="rotate(155 1707 1001)"/><rect x="1820" y="1038" width="6.8" height="2.5" fill="#f2d498" opacity="0.59" transform="rotate(86 1820 1038)"/><rect x="1757" y="1168" width="7.7" height="2.7" fill="#ece4dc" opacity="0.81" transform="rotate(90 1757 1168)"/><rect x="1609" y="955" width="10.3" height="2.7" fill="#ccccdc" opacity="0.93" transform="rotate(138 1609 955)"/><rect x="1357" y="1108" width="7.3" height="3.8" fill="#e8e8f0" opacity="0.67" transform="rotate(8 1357 1108)"/><rect x="1323" y="1188" width="6.7" height="3.4" fill="#ffffff" opacity="0.58" transform="rotate(5 1323 1188)"/><rect x="1677" y="1038" width="5.3" height="3.6" fill="#f4f4f4" opacity="0.77" transform="rotate(95 1677 1038)"/><rect x="1806" y="653" width="7.4" height="3.5" fill="#acE4c4" opacity="0.91" transform="rotate(147 1806 653)"/><rect x="1422" y="921" width="6.5" height="3.2" fill="#eca0ae" opacity="0.61" transform="rotate(37 1422 921)"/><rect x="1515" y="662" width="8.7" height="2.8" fill="#ccccdc" opacity="0.93" transform="rotate(88 1515 662)"/><rect x="1612" y="714" width="9.6" height="3.8" fill="#f2bc9e" opacity="0.72" transform="rotate(8 1612 714)"/><rect x="1695" y="976" width="9.4" height="2.6" fill="#f2d498" opacity="0.63" transform="rotate(158 1695 976)"/><rect x="1544" y="1273" width="7.9" height="2.7" fill="#f2bc9e" opacity="0.51" transform="rotate(93 1544 1273)"/><rect x="1638" y="866" width="6.7" height="2.5" fill="#f4f4f4" opacity="0.54" transform="rotate(75 1638 866)"/><rect x="1734" y="967" width="9.8" height="2.7" fill="#e8e8f0" opacity="0.59" transform="rotate(73 1734 967)"/><rect x="1430" y="1019" width="8.3" height="3.9" fill="#ccccdc" opacity="0.75" transform="rotate(30 1430 1019)"/><rect x="1427" y="785" width="7.4" height="2.5" fill="#ccccdc" opacity="0.79" transform="rotate(135 1427 785)"/><rect x="1862" y="1172" width="7.8" height="3.4" fill="#e8e8f0" opacity="0.52" transform="rotate(166 1862 1172)"/><rect x="1780" y="825" width="7.3" height="2.4" fill="#e8e8f0" opacity="0.69" transform="rotate(59 1780 825)"/><rect x="1596" y="936" width="8.1" height="3.0" fill="#f2d498" opacity="0.62" transform="rotate(70 1596 936)"/><rect x="1465" y="845" width="6.8" height="2.5" fill="#f2bc9e" opacity="0.77" transform="rotate(89 1465 845)"/><rect x="1487" y="892" width="6.3" height="2.3" fill="#acE4c4" opacity="0.89" transform="rotate(157 1487 892)"/><rect x="1858" y="1100" width="6.3" height="3.6" fill="#ffffff" opacity="0.70" transform="rotate(81 1858 1100)"/><rect x="1452" y="1198" width="9.3" height="4.1" fill="#f2d498" opacity="0.83" transform="rotate(174 1452 1198)"/><rect x="1385" y="1248" width="8.4" height="2.5" fill="#f2d498" opacity="0.68" transform="rotate(106 1385 1248)"/><rect x="1473" y="985" width="8.2" height="3.2" fill="#ccccdc" opacity="0.54" transform="rotate(39 1473 985)"/><rect x="1563" y="1217" width="9.0" height="2.4" fill="#f4f4f4" opacity="0.55" transform="rotate(157 1563 1217)"/><rect x="1412" y="921" width="8.4" height="3.6" fill="#f4f4f4" opacity="0.70" transform="rotate(62 1412 921)"/><rect x="1669" y="861" width="7.9" height="2.6" fill="#acE4c4" opacity="0.61" transform="rotate(176 1669 861)"/><rect x="1869" y="1041" width="6.5" height="3.9" fill="#acE4c4" opacity="0.82" transform="rotate(28 1869 1041)"/><rect x="1465" y="1238" width="6.0" height="3.9" fill="#ffffff" opacity="0.94" transform="rotate(55 1465 1238)"/><rect x="1557" y="748" width="8.5" height="2.7" fill="#ccccdc" opacity="0.81" transform="rotate(165 1557 748)"/><rect x="1622" y="902" width="6.5" height="2.6" fill="#ccccdc" opacity="0.95" transform="rotate(159 1622 902)"/><rect x="1571" y="1080" width="10.4" height="3.8" fill="#e8e8f0" opacity="0.82" transform="rotate(48 1571 1080)"/><rect x="1691" y="937" width="6.2" height="3.9" fill="#ccccdc" opacity="0.77" transform="rotate(99 1691 937)"/><rect x="1635" y="1312" width="9.3" height="3.7" fill="#f4f4f4" opacity="0.81" transform="rotate(125 1635 1312)"/><rect x="1673" y="1001" width="7.4" height="2.8" fill="#ccccdc" opacity="0.70" transform="rotate(177 1673 1001)"/><rect x="1603" y="1316" width="9.3" height="3.4" fill="#eca0ae" opacity="0.93" transform="rotate(128 1603 1316)"/><rect x="1440" y="1221" width="8.9" height="2.9" fill="#f0e8e0" opacity="0.54" transform="rotate(49 1440 1221)"/><rect x="1589" y="1275" width="8.6" height="3.3" fill="#ece4dc" opacity="0.75" transform="rotate(32 1589 1275)"/><rect x="1824" y="992" width="7.3" height="3.5" fill="#ccccdc" opacity="0.87" transform="rotate(30 1824 992)"/><rect x="1434" y="843" width="9.7" height="3.7" fill="#e8e8f0" opacity="0.57" transform="rotate(20 1434 843)"/><rect x="1640" y="945" width="5.7" height="2.9" fill="#ccccdc" opacity="0.86" transform="rotate(43 1640 945)"/><rect x="1805" y="1277" width="7.9" height="3.9" fill="#ece4dc" opacity="0.76" transform="rotate(103 1805 1277)"/><rect x="1338" y="1057" width="5.8" height="3.0" fill="#f4f4f4" opacity="0.74" transform="rotate(156 1338 1057)"/><rect x="1516" y="711" width="9.8" height="2.9" fill="#acE4c4" opacity="0.81" transform="rotate(26 1516 711)"/><rect x="1336" y="895" width="6.9" height="2.6" fill="#ffffff" opacity="0.79" transform="rotate(150 1336 895)"/><rect x="1805" y="856" width="5.3" height="3.7" fill="#e8e8f0" opacity="0.89" transform="rotate(96 1805 856)"/><rect x="1456" y="1159" width="6.5" height="4.1" fill="#acE4c4" opacity="0.78" transform="rotate(144 1456 1159)"/><rect x="1540" y="1114" width="8.6" height="3.2" fill="#dca4a4" opacity="0.63" transform="rotate(7 1540 1114)"/><rect x="1739" y="1104" width="8.4" height="4.0" fill="#eca0ae" opacity="0.52" transform="rotate(0 1739 1104)"/><rect x="1691" y="1172" width="9.2" height="2.6" fill="#f0e8e0" opacity="0.68" transform="rotate(95 1691 1172)"/><rect x="1735" y="968" width="6.5" height="4.2" fill="#e8e8f0" opacity="0.64" transform="rotate(141 1735 968)"/><rect x="1657" y="1022" width="5.2" height="3.2" fill="#f0e8e0" opacity="0.70" transform="rotate(23 1657 1022)"/><rect x="1261" y="1025" width="9.4" height="3.4" fill="#f4f4f4" opacity="0.82" transform="rotate(173 1261 1025)"/><rect x="1536" y="1302" width="5.0" height="3.3" fill="#f2d498" opacity="0.67" transform="rotate(149 1536 1302)"/><rect x="1409" y="1318" width="5.2" height="2.5" fill="#f0e8e0" opacity="0.68" transform="rotate(14 1409 1318)"/><rect x="1412" y="1009" width="9.6" height="4.2" fill="#dca4a4" opacity="0.77" transform="rotate(104 1412 1009)"/><rect x="1950" y="878" width="9.0" height="4.0" fill="#ece4dc" opacity="0.73" transform="rotate(14 1950 878)"/><rect x="1531" y="1126" width="8.0" height="4.1" fill="#eca0ae" opacity="0.93" transform="rotate(120 1531 1126)"/><rect x="1501" y="847" width="8.3" height="2.9" fill="#e8e8f0" opacity="0.82" transform="rotate(132 1501 847)"/><rect x="1420" y="963" width="7.6" height="2.9" fill="#ffffff" opacity="0.93" transform="rotate(7 1420 963)"/><rect x="1473" y="862" width="5.2" height="3.7" fill="#f2bc9e" opacity="0.60" transform="rotate(168 1473 862)"/><rect x="1455" y="893" width="8.4" height="3.5" fill="#f0e8e0" opacity="0.66" transform="rotate(59 1455 893)"/><rect x="1529" y="880" width="9.6" height="3.0" fill="#ccccdc" opacity="0.87" transform="rotate(164 1529 880)"/><rect x="1546" y="739" width="5.1" height="4.0" fill="#ffffff" opacity="0.74" transform="rotate(155 1546 739)"/><rect x="1931" y="1140" width="5.6" height="3.0" fill="#dca4a4" opacity="0.62" transform="rotate(180 1931 1140)"/><rect x="1552" y="868" width="7.9" height="2.5" fill="#dca4a4" opacity="0.79" transform="rotate(96 1552 868)"/><rect x="1508" y="1034" width="10.0" height="3.8" fill="#f4f4f4" opacity="0.92" transform="rotate(62 1508 1034)"/><rect x="1457" y="816" width="6.3" height="3.7" fill="#ece4dc" opacity="0.77" transform="rotate(117 1457 816)"/><rect x="1731" y="872" width="7.9" height="2.8" fill="#ece4dc" opacity="0.83" transform="rotate(18 1731 872)"/><rect x="1680" y="1175" width="6.3" height="2.7" fill="#acE4c4" opacity="0.92" transform="rotate(129 1680 1175)"/><rect x="1457" y="874" width="9.5" height="3.2" fill="#acE4c4" opacity="0.68" transform="rotate(140 1457 874)"/><rect x="1644" y="1022" width="9.7" height="2.3" fill="#f0e8e0" opacity="0.53" transform="rotate(97 1644 1022)"/><rect x="1508" y="1185" width="9.5" height="3.0" fill="#f0e8e0" opacity="0.63" transform="rotate(73 1508 1185)"/><rect x="1487" y="1045" width="8.9" height="4.3" fill="#ccccdc" opacity="0.64" transform="rotate(5 1487 1045)"/><rect x="1714" y="807" width="8.5" height="2.8" fill="#ece4dc" opacity="0.70" transform="rotate(41 1714 807)"/><rect x="1501" y="857" width="7.2" height="3.7" fill="#ffffff" opacity="0.58" transform="rotate(58 1501 857)"/><rect x="1601" y="712" width="7.5" height="4.1" fill="#eca0ae" opacity="0.80" transform="rotate(19 1601 712)"/><rect x="1727" y="894" width="9.2" height="3.2" fill="#e8e8f0" opacity="0.56" transform="rotate(85 1727 894)"/><rect x="1572" y="1274" width="9.9" height="2.6" fill="#f0e8e0" opacity="0.78" transform="rotate(67 1572 1274)"/><rect x="1651" y="1144" width="6.4" height="3.7" fill="#f2d498" opacity="0.73" transform="rotate(180 1651 1144)"/><rect x="1336" y="979" width="5.8" height="2.8" fill="#ccccdc" opacity="0.53" transform="rotate(150 1336 979)"/><rect x="1525" y="851" width="7.6" height="3.8" fill="#e8e8f0" opacity="0.71" transform="rotate(114 1525 851)"/><rect x="1431" y="916" width="6.0" height="4.3" fill="#f2bc9e" opacity="0.59" transform="rotate(169 1431 916)"/><rect x="1747" y="821" width="9.3" height="2.3" fill="#ccccdc" opacity="0.83" transform="rotate(45 1747 821)"/><rect x="1665" y="1123" width="10.2" height="2.3" fill="#dca4a4" opacity="0.88" transform="rotate(173 1665 1123)"/><rect x="1414" y="1149" width="5.1" height="3.6" fill="#ffffff" opacity="0.56" transform="rotate(112 1414 1149)"/><rect x="1808" y="667" width="8.7" height="3.6" fill="#acE4c4" opacity="0.84" transform="rotate(56 1808 667)"/><rect x="1469" y="1230" width="5.1" height="3.8" fill="#ffffff" opacity="0.87" transform="rotate(13 1469 1230)"/><rect x="1547" y="718" width="9.4" height="2.5" fill="#ece4dc" opacity="0.89" transform="rotate(2 1547 718)"/><rect x="1323" y="1004" width="8.5" height="4.2" fill="#eca0ae" opacity="0.55" transform="rotate(71 1323 1004)"/><rect x="1592" y="924" width="9.2" height="3.9" fill="#dca4a4" opacity="0.85" transform="rotate(105 1592 924)"/><rect x="1647" y="1272" width="6.2" height="2.9" fill="#f4f4f4" opacity="0.66" transform="rotate(61 1647 1272)"/><rect x="1574" y="1094" width="7.8" height="4.0" fill="#acE4c4" opacity="0.73" transform="rotate(36 1574 1094)"/><rect x="1509" y="1164" width="9.1" height="3.7" fill="#acE4c4" opacity="0.52" transform="rotate(160 1509 1164)"/><rect x="1717" y="873" width="7.1" height="2.8" fill="#f2d498" opacity="0.53" transform="rotate(168 1717 873)"/><rect x="1657" y="1129" width="9.0" height="3.5" fill="#f2bc9e" opacity="0.87" transform="rotate(37 1657 1129)"/><rect x="1614" y="1063" width="7.2" height="2.8" fill="#ccccdc" opacity="0.78" transform="rotate(27 1614 1063)"/><rect x="1536" y="822" width="6.7" height="3.4" fill="#f0e8e0" opacity="0.80" transform="rotate(87 1536 822)"/><rect x="1584" y="1036" width="9.3" height="3.4" fill="#dca4a4" opacity="0.86" transform="rotate(117 1584 1036)"/><rect x="1667" y="729" width="5.7" height="2.3" fill="#f4f4f4" opacity="0.74" transform="rotate(89 1667 729)"/><rect x="1655" y="891" width="9.5" height="3.3" fill="#e8e8f0" opacity="0.61" transform="rotate(147 1655 891)"/><rect x="1468" y="863" width="6.8" height="2.3" fill="#f0e8e0" opacity="0.72" transform="rotate(151 1468 863)"/><rect x="1491" y="1254" width="9.9" height="2.5" fill="#dca4a4" opacity="0.94" transform="rotate(90 1491 1254)"/><rect x="1661" y="1010" width="9.4" height="3.4" fill="#eca0ae" opacity="0.88" transform="rotate(118 1661 1010)"/><rect x="1773" y="1230" width="5.4" height="3.8" fill="#ccccdc" opacity="0.55" transform="rotate(31 1773 1230)"/><rect x="1923" y="1025" width="10.4" height="2.9" fill="#f2d498" opacity="0.76" transform="rotate(36 1923 1025)"/><rect x="1522" y="1100" width="6.3" height="3.1" fill="#dca4a4" opacity="0.58" transform="rotate(18 1522 1100)"/><rect x="1551" y="735" width="7.9" height="4.0" fill="#eca0ae" opacity="0.72" transform="rotate(135 1551 735)"/><rect x="1460" y="768" width="6.8" height="3.6" fill="#ece4dc" opacity="0.77" transform="rotate(176 1460 768)"/><rect x="1692" y="1002" width="5.1" height="2.5" fill="#f0e8e0" opacity="0.84" transform="rotate(102 1692 1002)"/><rect x="1415" y="1139" width="10.5" height="3.7" fill="#e8e8f0" opacity="0.74" transform="rotate(29 1415 1139)"/><rect x="1512" y="1129" width="8.5" height="4.2" fill="#eca0ae" opacity="0.60" transform="rotate(175 1512 1129)"/><rect x="1488" y="1029" width="9.3" height="2.7" fill="#ffffff" opacity="0.85" transform="rotate(128 1488 1029)"/><rect x="1627" y="923" width="6.5" height="2.9" fill="#f2d498" opacity="0.86" transform="rotate(174 1627 923)"/><rect x="1504" y="822" width="10.2" height="3.2" fill="#f4f4f4" opacity="0.79" transform="rotate(64 1504 822)"/><rect x="1437" y="754" width="6.6" height="3.3" fill="#f2bc9e" opacity="0.70" transform="rotate(13 1437 754)"/><rect x="1604" y="1063" width="7.5" height="3.6" fill="#ccccdc" opacity="0.63" transform="rotate(15 1604 1063)"/><rect x="1485" y="882" width="7.7" height="3.9" fill="#f2bc9e" opacity="0.93" transform="rotate(1 1485 882)"/><rect x="1716" y="867" width="8.2" height="3.3" fill="#f0e8e0" opacity="0.77" transform="rotate(7 1716 867)"/><rect x="1763" y="667" width="5.4" height="3.8" fill="#e8e8f0" opacity="0.72" transform="rotate(67 1763 667)"/><rect x="1540" y="898" width="7.8" height="2.7" fill="#eca0ae" opacity="0.60" transform="rotate(93 1540 898)"/><rect x="1723" y="1183" width="9.3" height="3.7" fill="#ece4dc" opacity="0.84" transform="rotate(143 1723 1183)"/><rect x="1730" y="1221" width="5.7" height="4.0" fill="#eca0ae" opacity="0.76" transform="rotate(126 1730 1221)"/><rect x="1558" y="1269" width="9.7" height="4.2" fill="#f4f4f4" opacity="0.61" transform="rotate(107 1558 1269)"/><rect x="1415" y="1075" width="10.0" height="3.6" fill="#f0e8e0" opacity="0.93" transform="rotate(111 1415 1075)"/><rect x="1688" y="733" width="6.9" height="2.9" fill="#f4f4f4" opacity="0.92" transform="rotate(168 1688 733)"/><rect x="1480" y="907" width="9.1" height="4.1" fill="#dca4a4" opacity="0.94" transform="rotate(25 1480 907)"/><rect x="1622" y="790" width="5.9" height="2.9" fill="#f2d498" opacity="0.85" transform="rotate(58 1622 790)"/><rect x="1588" y="707" width="6.2" height="4.1" fill="#f4f4f4" opacity="0.65" transform="rotate(41 1588 707)"/><rect x="1433" y="1086" width="9.2" height="4.2" fill="#ece4dc" opacity="0.82" transform="rotate(94 1433 1086)"/><rect x="1569" y="1036" width="7.5" height="3.0" fill="#ece4dc" opacity="0.55" transform="rotate(149 1569 1036)"/><rect x="1696" y="715" width="10.3" height="4.2" fill="#ece4dc" opacity="0.78" transform="rotate(156 1696 715)"/><rect x="1625" y="1188" width="9.5" height="4.2" fill="#ffffff" opacity="0.55" transform="rotate(44 1625 1188)"/><rect x="1726" y="789" width="9.7" height="2.3" fill="#f2bc9e" opacity="0.62" transform="rotate(2 1726 789)"/><rect x="1734" y="822" width="9.8" height="2.5" fill="#eca0ae" opacity="0.75" transform="rotate(143 1734 822)"/><rect x="1788" y="1056" width="8.4" height="3.8" fill="#ece4dc" opacity="0.55" transform="rotate(93 1788 1056)"/><rect x="1530" y="1146" width="7.1" height="3.1" fill="#f4f4f4" opacity="0.76" transform="rotate(86 1530 1146)"/><rect x="1819" y="805" width="9.7" height="3.0" fill="#f0e8e0" opacity="0.67" transform="rotate(78 1819 805)"/><rect x="1545" y="1052" width="9.6" height="3.5" fill="#f2bc9e" opacity="0.51" transform="rotate(2 1545 1052)"/><rect x="1610" y="987" width="6.7" height="3.5" fill="#ffffff" opacity="0.91" transform="rotate(148 1610 987)"/><rect x="1718" y="847" width="8.7" height="3.0" fill="#f0e8e0" opacity="0.78" transform="rotate(56 1718 847)"/><rect x="1414" y="942" width="8.8" height="2.6" fill="#ece4dc" opacity="0.81" transform="rotate(66 1414 942)"/><rect x="1669" y="1040" width="6.4" height="2.4" fill="#f0e8e0" opacity="0.72" transform="rotate(115 1669 1040)"/><rect x="1649" y="972" width="8.9" height="3.1" fill="#ccccdc" opacity="0.63" transform="rotate(3 1649 972)"/><rect x="1744" y="958" width="5.0" height="3.0" fill="#f0e8e0" opacity="0.51" transform="rotate(36 1744 958)"/><rect x="1522" y="1014" width="7.0" height="2.8" fill="#f2d498" opacity="0.51" transform="rotate(29 1522 1014)"/><rect x="1412" y="1119" width="7.8" height="2.4" fill="#f4f4f4" opacity="0.77" transform="rotate(81 1412 1119)"/><rect x="1503" y="1257" width="10.1" height="4.0" fill="#ece4dc" opacity="0.62" transform="rotate(116 1503 1257)"/><rect x="1667" y="1101" width="7.0" height="2.5" fill="#f0e8e0" opacity="0.70" transform="rotate(168 1667 1101)"/><rect x="1764" y="1281" width="6.8" height="3.8" fill="#ffffff" opacity="0.82" transform="rotate(164 1764 1281)"/><rect x="1504" y="714" width="8.2" height="3.1" fill="#ece4dc" opacity="0.64" transform="rotate(65 1504 714)"/><rect x="1653" y="1258" width="5.8" height="3.4" fill="#acE4c4" opacity="0.82" transform="rotate(46 1653 1258)"/><rect x="1317" y="955" width="6.5" height="3.1" fill="#eca0ae" opacity="0.57" transform="rotate(129 1317 955)"/><rect x="1494" y="844" width="9.2" height="3.3" fill="#e8e8f0" opacity="0.64" transform="rotate(11 1494 844)"/><rect x="1595" y="1233" width="8.4" height="3.3" fill="#dca4a4" opacity="0.76" transform="rotate(120 1595 1233)"/><rect x="1568" y="1093" width="9.5" height="4.0" fill="#f2bc9e" opacity="0.67" transform="rotate(84 1568 1093)"/><rect x="1657" y="1018" width="5.1" height="3.0" fill="#dca4a4" opacity="0.91" transform="rotate(7 1657 1018)"/><rect x="1745" y="1087" width="6.6" height="3.9" fill="#f0e8e0" opacity="0.94" transform="rotate(117 1745 1087)"/><rect x="1829" y="1087" width="6.6" height="3.9" fill="#eca0ae" opacity="0.61" transform="rotate(150 1829 1087)"/><rect x="1549" y="922" width="9.8" height="3.7" fill="#dca4a4" opacity="0.73" transform="rotate(88 1549 922)"/><rect x="1632" y="948" width="5.3" height="2.4" fill="#f4f4f4" opacity="0.72" transform="rotate(26 1632 948)"/><rect x="1624" y="818" width="6.9" height="4.2" fill="#ccccdc" opacity="0.62" transform="rotate(162 1624 818)"/><rect x="1803" y="992" width="5.6" height="3.0" fill="#dca4a4" opacity="0.55" transform="rotate(13 1803 992)"/><rect x="1604" y="958" width="9.7" height="4.0" fill="#f0e8e0" opacity="0.89" transform="rotate(130 1604 958)"/><rect x="1469" y="1081" width="8.3" height="3.4" fill="#dca4a4" opacity="0.65" transform="rotate(156 1469 1081)"/><rect x="1687" y="649" width="8.6" height="3.6" fill="#ece4dc" opacity="0.58" transform="rotate(13 1687 649)"/><rect x="1586" y="652" width="6.1" height="2.9" fill="#dca4a4" opacity="0.57" transform="rotate(92 1586 652)"/><rect x="1857" y="1159" width="9.3" height="4.2" fill="#dca4a4" opacity="0.71" transform="rotate(129 1857 1159)"/><rect x="1534" y="1235" width="9.3" height="3.4" fill="#ece4dc" opacity="0.65" transform="rotate(156 1534 1235)"/><rect x="1611" y="1226" width="5.3" height="2.4" fill="#ece4dc" opacity="0.76" transform="rotate(59 1611 1226)"/><rect x="1468" y="762" width="7.0" height="2.4" fill="#ffffff" opacity="0.75" transform="rotate(38 1468 762)"/><rect x="1385" y="1199" width="10.5" height="2.7" fill="#ece4dc" opacity="0.86" transform="rotate(95 1385 1199)"/><rect x="1518" y="936" width="5.3" height="4.2" fill="#f4f4f4" opacity="0.94" transform="rotate(25 1518 936)"/><rect x="1694" y="1016" width="5.6" height="3.2" fill="#ccccdc" opacity="0.68" transform="rotate(128 1694 1016)"/><rect x="1450" y="996" width="6.5" height="4.2" fill="#f2bc9e" opacity="0.85" transform="rotate(34 1450 996)"/><rect x="1537" y="724" width="7.7" height="3.6" fill="#eca0ae" opacity="0.71" transform="rotate(59 1537 724)"/><rect x="1545" y="1021" width="7.4" height="2.5" fill="#f2bc9e" opacity="0.66" transform="rotate(20 1545 1021)"/><rect x="1378" y="1059" width="9.9" height="3.8" fill="#eca0ae" opacity="0.86" transform="rotate(42 1378 1059)"/><rect x="1365" y="1209" width="9.2" height="2.5" fill="#ffffff" opacity="0.69" transform="rotate(13 1365 1209)"/><rect x="1640" y="1055" width="8.6" height="3.2" fill="#ccccdc" opacity="0.71" transform="rotate(16 1640 1055)"/><rect x="1626" y="685" width="6.7" height="4.3" fill="#f4f4f4" opacity="0.59" transform="rotate(178 1626 685)"/><rect x="1520" y="730" width="10.3" height="4.0" fill="#f2d498" opacity="0.51" transform="rotate(170 1520 730)"/><rect x="1426" y="731" width="9.8" height="3.5" fill="#f2d498" opacity="0.56" transform="rotate(112 1426 731)"/><rect x="1503" y="1037" width="6.1" height="2.9" fill="#f0e8e0" opacity="0.89" transform="rotate(77 1503 1037)"/><rect x="1439" y="842" width="8.2" height="2.9" fill="#eca0ae" opacity="0.88" transform="rotate(150 1439 842)"/><rect x="1538" y="1277" width="8.6" height="3.1" fill="#eca0ae" opacity="0.86" transform="rotate(92 1538 1277)"/><rect x="1559" y="1124" width="7.7" height="2.5" fill="#f2d498" opacity="0.82" transform="rotate(85 1559 1124)"/><rect x="1414" y="1124" width="9.8" height="2.4" fill="#e8e8f0" opacity="0.88" transform="rotate(169 1414 1124)"/><rect x="1439" y="900" width="6.1" height="2.4" fill="#f2bc9e" opacity="0.95" transform="rotate(132 1439 900)"/><rect x="1475" y="986" width="7.1" height="4.0" fill="#f0e8e0" opacity="0.55" transform="rotate(40 1475 986)"/><rect x="1503" y="1023" width="7.3" height="3.9" fill="#f4f4f4" opacity="0.60" transform="rotate(157 1503 1023)"/><rect x="1527" y="908" width="7.3" height="3.5" fill="#f4f4f4" opacity="0.68" transform="rotate(84 1527 908)"/><rect x="1594" y="1250" width="9.2" height="3.5" fill="#f4f4f4" opacity="0.94" transform="rotate(47 1594 1250)"/><rect x="1444" y="1288" width="9.6" height="3.9" fill="#f2d498" opacity="0.63" transform="rotate(82 1444 1288)"/><rect x="1819" y="936" width="9.6" height="3.5" fill="#f4f4f4" opacity="0.61" transform="rotate(39 1819 936)"/><rect x="1512" y="1054" width="5.2" height="3.5" fill="#ccccdc" opacity="0.84" transform="rotate(17 1512 1054)"/><rect x="1573" y="1103" width="7.3" height="3.5" fill="#dca4a4" opacity="0.55" transform="rotate(100 1573 1103)"/><rect x="1624" y="926" width="8.9" height="3.9" fill="#e8e8f0" opacity="0.84" transform="rotate(80 1624 926)"/><rect x="1674" y="1011" width="6.9" height="2.5" fill="#dca4a4" opacity="0.84" transform="rotate(17 1674 1011)"/><rect x="1475" y="1114" width="7.6" height="2.7" fill="#ffffff" opacity="0.58" transform="rotate(26 1475 1114)"/><rect x="1505" y="871" width="7.8" height="3.8" fill="#acE4c4" opacity="0.87" transform="rotate(81 1505 871)"/><rect x="1735" y="981" width="9.8" height="3.2" fill="#e8e8f0" opacity="0.84" transform="rotate(85 1735 981)"/><rect x="1600" y="1166" width="6.2" height="3.0" fill="#acE4c4" opacity="0.93" transform="rotate(142 1600 1166)"/><rect x="1761" y="851" width="10.0" height="3.2" fill="#f0e8e0" opacity="0.55" transform="rotate(42 1761 851)"/><rect x="1785" y="1092" width="9.4" height="3.2" fill="#f0e8e0" opacity="0.58" transform="rotate(99 1785 1092)"/><rect x="1600" y="1171" width="7.9" height="3.1" fill="#f2bc9e" opacity="0.53" transform="rotate(15 1600 1171)"/><rect x="1554" y="926" width="9.8" height="3.4" fill="#dca4a4" opacity="0.62" transform="rotate(134 1554 926)"/><rect x="1749" y="1063" width="7.1" height="3.2" fill="#e8e8f0" opacity="0.57" transform="rotate(95 1749 1063)"/><rect x="1594" y="967" width="9.0" height="3.7" fill="#dca4a4" opacity="0.52" transform="rotate(114 1594 967)"/><rect x="1594" y="666" width="5.0" height="2.5" fill="#ece4dc" opacity="0.73" transform="rotate(64 1594 666)"/><rect x="1415" y="978" width="5.4" height="2.8" fill="#f2bc9e" opacity="0.58" transform="rotate(120 1415 978)"/><rect x="1606" y="861" width="8.4" height="2.9" fill="#f0e8e0" opacity="0.92" transform="rotate(138 1606 861)"/><rect x="1683" y="889" width="7.0" height="2.9" fill="#eca0ae" opacity="0.92" transform="rotate(63 1683 889)"/><rect x="1386" y="795" width="9.6" height="2.6" fill="#acE4c4" opacity="0.82" transform="rotate(147 1386 795)"/><rect x="1422" y="866" width="9.1" height="2.4" fill="#acE4c4" opacity="0.91" transform="rotate(92 1422 866)"/><rect x="1612" y="1118" width="7.7" height="2.6" fill="#f0e8e0" opacity="0.66" transform="rotate(84 1612 1118)"/><rect x="1577" y="1240" width="5.0" height="4.2" fill="#ece4dc" opacity="0.82" transform="rotate(114 1577 1240)"/><rect x="1401" y="1160" width="7.5" height="2.6" fill="#f2bc9e" opacity="0.64" transform="rotate(90 1401 1160)"/><rect x="1578" y="1126" width="9.7" height="4.1" fill="#acE4c4" opacity="0.61" transform="rotate(13 1578 1126)"/><rect x="1524" y="1187" width="10.0" height="3.9" fill="#ccccdc" opacity="0.76" transform="rotate(179 1524 1187)"/><rect x="1436" y="1142" width="8.7" height="3.1" fill="#dca4a4" opacity="0.74" transform="rotate(90 1436 1142)"/><rect x="1590" y="830" width="5.4" height="3.6" fill="#dca4a4" opacity="0.50" transform="rotate(33 1590 830)"/><rect x="1685" y="944" width="7.6" height="2.5" fill="#f2bc9e" opacity="0.51" transform="rotate(46 1685 944)"/><rect x="1569" y="1185" width="9.4" height="4.0" fill="#f2d498" opacity="0.67" transform="rotate(46 1569 1185)"/><rect x="1763" y="948" width="8.7" height="2.5" fill="#acE4c4" opacity="0.69" transform="rotate(1 1763 948)"/><rect x="1531" y="696" width="8.1" height="3.6" fill="#ccccdc" opacity="0.88" transform="rotate(142 1531 696)"/><rect x="1545" y="809" width="6.3" height="4.0" fill="#ffffff" opacity="0.75" transform="rotate(145 1545 809)"/><rect x="1646" y="734" width="9.4" height="2.9" fill="#f4f4f4" opacity="0.78" transform="rotate(98 1646 734)"/><rect x="1538" y="906" width="10.4" height="2.8" fill="#acE4c4" opacity="0.80" transform="rotate(172 1538 906)"/><rect x="1892" y="1222" width="5.7" height="3.7" fill="#f0e8e0" opacity="0.73" transform="rotate(167 1892 1222)"/><rect x="1644" y="1049" width="8.7" height="2.4" fill="#acE4c4" opacity="0.76" transform="rotate(86 1644 1049)"/><rect x="1381" y="835" width="9.9" height="3.6" fill="#f4f4f4" opacity="0.91" transform="rotate(97 1381 835)"/><rect x="1384" y="728" width="10.4" height="4.3" fill="#ece4dc" opacity="0.88" transform="rotate(55 1384 728)"/><rect x="1832" y="790" width="8.3" height="4.0" fill="#f2bc9e" opacity="0.87" transform="rotate(102 1832 790)"/><rect x="1658" y="988" width="8.8" height="4.0" fill="#f0e8e0" opacity="0.52" transform="rotate(160 1658 988)"/><rect x="1550" y="1189" width="9.6" height="3.6" fill="#f2d498" opacity="0.54" transform="rotate(54 1550 1189)"/><rect x="1687" y="674" width="9.1" height="2.4" fill="#e8e8f0" opacity="0.86" transform="rotate(17 1687 674)"/><rect x="1558" y="1152" width="6.6" height="3.3" fill="#eca0ae" opacity="0.67" transform="rotate(72 1558 1152)"/><rect x="1365" y="871" width="8.4" height="4.2" fill="#f0e8e0" opacity="0.72" transform="rotate(37 1365 871)"/><rect x="1471" y="1156" width="7.8" height="2.7" fill="#dca4a4" opacity="0.80" transform="rotate(1 1471 1156)"/><rect x="1521" y="1001" width="5.3" height="4.1" fill="#ffffff" opacity="0.90" transform="rotate(172 1521 1001)"/><rect x="1366" y="993" width="9.3" height="3.7" fill="#acE4c4" opacity="0.68" transform="rotate(22 1366 993)"/><rect x="1669" y="837" width="7.6" height="2.8" fill="#dca4a4" opacity="0.81" transform="rotate(56 1669 837)"/><rect x="1725" y="1070" width="9.8" height="3.9" fill="#f2bc9e" opacity="0.71" transform="rotate(58 1725 1070)"/><rect x="1551" y="1050" width="7.4" height="3.0" fill="#f2d498" opacity="0.90" transform="rotate(137 1551 1050)"/></g><rect x="615" y="1398" width="1995" height="373" fill="url(#sc-crowd)"/><ellipse cx="600" cy="1398" rx="28" ry="33" fill="#0b0c2c"/><rect x="560" y="1418" width="79" height="60" rx="20" fill="#0b0c2c"/><ellipse cx="650" cy="1395" rx="29" ry="33" fill="#0b0c2c"/><rect x="610" y="1415" width="80" height="60" rx="20" fill="#0b0c2c"/><ellipse cx="694" cy="1394" rx="25" ry="28" fill="#0b0c2c"/><rect x="660" y="1411" width="69" height="60" rx="20" fill="#0b0c2c"/><ellipse cx="733" cy="1378" rx="33" ry="38" fill="#0b0c2c"/><rect x="686" y="1401" width="93" height="60" rx="20" fill="#0b0c2c"/><ellipse cx="779" cy="1403" rx="23" ry="27" fill="#0b0c2c"/><rect x="746" y="1419" width="65" height="60" rx="20" fill="#0b0c2c"/><ellipse cx="816" cy="1408" rx="23" ry="26" fill="#0b0c2c"/><rect x="785" y="1424" width="63" height="60" rx="20" fill="#0b0c2c"/><ellipse cx="856" cy="1395" rx="31" ry="36" fill="#0b0c2c"/><rect x="813" y="1416" width="87" height="60" rx="20" fill="#0b0c2c"/><ellipse cx="897" cy="1391" rx="22" ry="26" fill="#0b0c2c"/><rect x="866" y="1406" width="62" height="60" rx="20" fill="#0b0c2c"/><ellipse cx="924" cy="1380" rx="25" ry="28" fill="#0b0c2c"/><rect x="890" y="1397" width="69" height="60" rx="20" fill="#0b0c2c"/><ellipse cx="954" cy="1387" rx="28" ry="33" fill="#0b0c2c"/><rect x="914" y="1407" width="80" height="60" rx="20" fill="#0b0c2c"/><ellipse cx="1003" cy="1393" rx="29" ry="34" fill="#0b0c2c"/><rect x="962" y="1414" width="82" height="60" rx="20" fill="#0b0c2c"/><ellipse cx="1047" cy="1386" rx="31" ry="36" fill="#0b0c2c"/><rect x="1003" y="1408" width="88" height="60" rx="20" fill="#0b0c2c"/><ellipse cx="1089" cy="1405" rx="36" ry="41" fill="#0b0c2c"/><rect x="1039" y="1430" width="101" height="60" rx="20" fill="#0b0c2c"/><ellipse cx="1151" cy="1380" rx="32" ry="37" fill="#0b0c2c"/><rect x="1106" y="1402" width="89" height="60" rx="20" fill="#0b0c2c"/><ellipse cx="1193" cy="1370" rx="26" ry="30" fill="#0b0c2c"/><rect x="1157" y="1389" width="73" height="60" rx="20" fill="#0b0c2c"/><ellipse cx="1237" cy="1398" rx="28" ry="32" fill="#0b0c2c"/><rect x="1198" y="1417" width="77" height="60" rx="20" fill="#0b0c2c"/><ellipse cx="1276" cy="1398" rx="35" ry="41" fill="#0b0c2c"/><rect x="1227" y="1422" width="99" height="60" rx="20" fill="#0b0c2c"/><ellipse cx="1319" cy="1400" rx="25" ry="29" fill="#0b0c2c"/><rect x="1284" y="1417" width="70" height="60" rx="20" fill="#0b0c2c"/><ellipse cx="1356" cy="1381" rx="36" ry="41" fill="#0b0c2c"/><rect x="1306" y="1406" width="100" height="60" rx="20" fill="#0b0c2c"/><ellipse cx="1400" cy="1394" rx="31" ry="35" fill="#0b0c2c"/><rect x="1357" y="1416" width="86" height="60" rx="20" fill="#0b0c2c"/><ellipse cx="1442" cy="1378" rx="23" ry="27" fill="#0b0c2c"/><rect x="1409" y="1394" width="65" height="60" rx="20" fill="#0b0c2c"/><ellipse cx="1483" cy="1370" rx="33" ry="38" fill="#0b0c2c"/><rect x="1438" y="1393" width="91" height="60" rx="20" fill="#0b0c2c"/><ellipse cx="1527" cy="1368" rx="23" ry="27" fill="#0b0c2c"/><rect x="1494" y="1385" width="66" height="60" rx="20" fill="#0b0c2c"/><ellipse cx="1567" cy="1386" rx="24" ry="28" fill="#0b0c2c"/><rect x="1532" y="1403" width="69" height="60" rx="20" fill="#0b0c2c"/><ellipse cx="1602" cy="1392" rx="25" ry="28" fill="#0b0c2c"/><rect x="1568" y="1410" width="69" height="60" rx="20" fill="#0b0c2c"/><ellipse cx="1634" cy="1370" rx="31" ry="36" fill="#0b0c2c"/><rect x="1591" y="1392" width="87" height="60" rx="20" fill="#0b0c2c"/><ellipse cx="1679" cy="1376" rx="25" ry="29" fill="#0b0c2c"/><rect x="1644" y="1393" width="70" height="60" rx="20" fill="#0b0c2c"/><ellipse cx="1724" cy="1377" rx="33" ry="38" fill="#0b0c2c"/><rect x="1677" y="1400" width="93" height="60" rx="20" fill="#0b0c2c"/><ellipse cx="1781" cy="1381" rx="25" ry="29" fill="#0b0c2c"/><rect x="1746" y="1398" width="70" height="60" rx="20" fill="#0b0c2c"/><ellipse cx="1824" cy="1370" rx="31" ry="36" fill="#0b0c2c"/><rect x="1780" y="1392" width="87" height="60" rx="20" fill="#0b0c2c"/><ellipse cx="1879" cy="1376" rx="25" ry="29" fill="#0b0c2c"/><rect x="1844" y="1394" width="70" height="60" rx="20" fill="#0b0c2c"/><ellipse cx="1921" cy="1378" rx="27" ry="31" fill="#0b0c2c"/><rect x="1884" y="1397" width="74" height="60" rx="20" fill="#0b0c2c"/><ellipse cx="1954" cy="1389" rx="23" ry="27" fill="#0b0c2c"/><rect x="1922" y="1405" width="65" height="60" rx="20" fill="#0b0c2c"/><ellipse cx="1985" cy="1381" rx="30" ry="35" fill="#0b0c2c"/><rect x="1943" y="1403" width="85" height="60" rx="20" fill="#0b0c2c"/><ellipse cx="2030" cy="1386" rx="35" ry="41" fill="#0b0c2c"/><rect x="1981" y="1411" width="99" height="60" rx="20" fill="#0b0c2c"/><ellipse cx="2085" cy="1376" rx="34" ry="39" fill="#0b0c2c"/><rect x="2037" y="1399" width="96" height="60" rx="20" fill="#0b0c2c"/><ellipse cx="2129" cy="1399" rx="35" ry="40" fill="#0b0c2c"/><rect x="2080" y="1423" width="97" height="60" rx="20" fill="#0b0c2c"/><ellipse cx="2176" cy="1397" rx="25" ry="28" fill="#0b0c2c"/><rect x="2141" y="1414" width="69" height="60" rx="20" fill="#0b0c2c"/><ellipse cx="2219" cy="1405" rx="25" ry="28" fill="#0b0c2c"/><rect x="2185" y="1422" width="69" height="60" rx="20" fill="#0b0c2c"/><ellipse cx="2262" cy="1387" rx="30" ry="35" fill="#0b0c2c"/><rect x="2220" y="1408" width="85" height="60" rx="20" fill="#0b0c2c"/><ellipse cx="2301" cy="1407" rx="23" ry="26" fill="#0b0c2c"/><rect x="2269" y="1423" width="63" height="60" rx="20" fill="#0b0c2c"/><ellipse cx="2331" cy="1382" rx="32" ry="37" fill="#0b0c2c"/><rect x="2286" y="1404" width="89" height="60" rx="20" fill="#0b0c2c"/><ellipse cx="2385" cy="1384" rx="30" ry="35" fill="#0b0c2c"/><rect x="2342" y="1405" width="85" height="60" rx="20" fill="#0b0c2c"/><ellipse cx="2425" cy="1377" rx="32" ry="37" fill="#0b0c2c"/><rect x="2380" y="1399" width="90" height="60" rx="20" fill="#0b0c2c"/><ellipse cx="2467" cy="1406" rx="30" ry="34" fill="#0b0c2c"/><rect x="2426" y="1427" width="84" height="60" rx="20" fill="#0b0c2c"/><ellipse cx="2514" cy="1409" rx="26" ry="30" fill="#0b0c2c"/><rect x="2478" y="1427" width="73" height="60" rx="20" fill="#0b0c2c"/><ellipse cx="2548" cy="1387" rx="22" ry="26" fill="#0b0c2c"/><rect x="2517" y="1402" width="62" height="60" rx="20" fill="#0b0c2c"/><ellipse cx="2581" cy="1384" rx="23" ry="26" fill="#0b0c2c"/><rect x="2549" y="1400" width="64" height="60" rx="20" fill="#0b0c2c"/><ellipse cx="2614" cy="1383" rx="30" ry="35" fill="#0b0c2c"/><rect x="2572" y="1404" width="84" height="60" rx="20" fill="#0b0c2c"/><ellipse cx="600" cy="1494" rx="60" ry="66" fill="#080a24"/><ellipse cx="723" cy="1452" rx="54" ry="59" fill="#080a24"/><path d="M 683 1422 Q 723 1377 764 1422" fill="none" stroke="#1a4f96" stroke-width="7" opacity="0.4" filter="url(#sc-b4)"/><ellipse cx="805" cy="1480" rx="61" ry="67" fill="#080a24"/><ellipse cx="897" cy="1469" rx="55" ry="60" fill="#080a24"/><ellipse cx="993" cy="1449" rx="62" ry="69" fill="#080a24"/><ellipse cx="1123" cy="1482" rx="60" ry="66" fill="#080a24"/><ellipse cx="1252" cy="1463" rx="61" ry="67" fill="#080a24"/><ellipse cx="1387" cy="1466" rx="60" ry="66" fill="#080a24"/><ellipse cx="1518" cy="1476" rx="54" ry="59" fill="#080a24"/><path d="M 1477 1447 Q 1518 1401 1558 1447" fill="none" stroke="#1a4f96" stroke-width="7" opacity="0.4" filter="url(#sc-b4)"/><ellipse cx="1623" cy="1449" rx="54" ry="60" fill="#080a24"/><ellipse cx="1747" cy="1481" rx="60" ry="66" fill="#080a24"/><path d="M 1702 1448 Q 1747 1398 1792 1448" fill="none" stroke="#1a4f96" stroke-width="7" opacity="0.4" filter="url(#sc-b4)"/><ellipse cx="1872" cy="1467" rx="54" ry="59" fill="#080a24"/><ellipse cx="1956" cy="1446" rx="57" ry="63" fill="#080a24"/><ellipse cx="2064" cy="1480" rx="46" ry="51" fill="#080a24"/><path d="M 2029 1454 Q 2064 1415 2099 1454" fill="none" stroke="#1a4f96" stroke-width="7" opacity="0.4" filter="url(#sc-b4)"/><ellipse cx="2157" cy="1458" rx="61" ry="67" fill="#080a24"/><path d="M 2111 1424 Q 2157 1373 2202 1424" fill="none" stroke="#1a4f96" stroke-width="7" opacity="0.4" filter="url(#sc-b4)"/><ellipse cx="2262" cy="1455" rx="56" ry="61" fill="#080a24"/><path d="M 2221 1424 Q 2262 1377 2304 1424" fill="none" stroke="#1a4f96" stroke-width="7" opacity="0.4" filter="url(#sc-b4)"/><ellipse cx="2386" cy="1467" rx="55" ry="61" fill="#080a24"/><ellipse cx="2484" cy="1455" rx="55" ry="61" fill="#080a24"/><path d="M 2442 1424 Q 2484 1377 2525 1424" fill="none" stroke="#1a4f96" stroke-width="7" opacity="0.4" filter="url(#sc-b4)"/><ellipse cx="2603" cy="1489" rx="61" ry="67" fill="#080a24"/><path d="M 2557 1456 Q 2603 1404 2648 1456" fill="none" stroke="#1a4f96" stroke-width="7" opacity="0.4" filter="url(#sc-b4)"/><ellipse cx="600" cy="1557" rx="63" ry="69" fill="#06091c"/><path d="M 553 1522 Q 600 1469 647 1522" fill="none" stroke="#1a4f96" stroke-width="7" opacity="0.4" filter="url(#sc-b4)"/><ellipse cx="737" cy="1586" rx="77" ry="85" fill="#06091c"/><ellipse cx="870" cy="1573" rx="59" ry="65" fill="#06091c"/><path d="M 826 1540 Q 870 1490 914 1540" fill="none" stroke="#1a4f96" stroke-width="7" opacity="0.4" filter="url(#sc-b4)"/><ellipse cx="969" cy="1581" rx="66" ry="72" fill="#06091c"/><path d="M 919 1545 Q 969 1489 1018 1545" fill="none" stroke="#1a4f96" stroke-width="7" opacity="0.4" filter="url(#sc-b4)"/><ellipse cx="1084" cy="1599" rx="77" ry="85" fill="#06091c"/><path d="M 1026 1557 Q 1084 1491 1142 1557" fill="none" stroke="#1a4f96" stroke-width="7" opacity="0.4" filter="url(#sc-b4)"/><ellipse cx="1204" cy="1594" rx="55" ry="61" fill="#06091c"/><path d="M 1163 1563 Q 1204 1516 1246 1563" fill="none" stroke="#1a4f96" stroke-width="7" opacity="0.4" filter="url(#sc-b4)"/><ellipse cx="1318" cy="1565" rx="70" ry="77" fill="#06091c"/><ellipse cx="1424" cy="1573" rx="58" ry="64" fill="#06091c"/><path d="M 1381 1541 Q 1424 1491 1468 1541" fill="none" stroke="#1a4f96" stroke-width="7" opacity="0.4" filter="url(#sc-b4)"/><ellipse cx="1550" cy="1557" rx="61" ry="67" fill="#06091c"/><path d="M 1504 1524 Q 1550 1472 1596 1524" fill="none" stroke="#1a4f96" stroke-width="7" opacity="0.4" filter="url(#sc-b4)"/><ellipse cx="1672" cy="1581" rx="67" ry="73" fill="#06091c"/><ellipse cx="1815" cy="1584" rx="80" ry="89" fill="#06091c"/><path d="M 1754 1540 Q 1815 1472 1875 1540" fill="none" stroke="#1a4f96" stroke-width="7" opacity="0.4" filter="url(#sc-b4)"/><ellipse cx="1966" cy="1551" rx="59" ry="65" fill="#06091c"/><path d="M 1922 1518 Q 1966 1468 2011 1518" fill="none" stroke="#1a4f96" stroke-width="7" opacity="0.4" filter="url(#sc-b4)"/><ellipse cx="2089" cy="1564" rx="59" ry="65" fill="#06091c"/><path d="M 2044 1531 Q 2089 1481 2133 1531" fill="none" stroke="#1a4f96" stroke-width="7" opacity="0.4" filter="url(#sc-b4)"/><ellipse cx="2211" cy="1581" rx="69" ry="75" fill="#06091c"/><ellipse cx="2335" cy="1595" rx="76" ry="84" fill="#06091c"/><path d="M 2278 1554 Q 2335 1489 2392 1554" fill="none" stroke="#1a4f96" stroke-width="7" opacity="0.4" filter="url(#sc-b4)"/><ellipse cx="2506" cy="1556" rx="74" ry="81" fill="#06091c"/><path d="M 2450 1516 Q 2506 1453 2561 1516" fill="none" stroke="#1a4f96" stroke-width="7" opacity="0.4" filter="url(#sc-b4)"/><ellipse cx="600" cy="1694" rx="102" ry="113" fill="#040612"/><ellipse cx="826" cy="1722" rx="98" ry="108" fill="#040612"/><path d="M 752 1668 Q 826 1584 900 1668" fill="none" stroke="#1a4f96" stroke-width="7" opacity="0.4" filter="url(#sc-b4)"/><ellipse cx="1025" cy="1711" rx="78" ry="85" fill="#040612"/><ellipse cx="1181" cy="1686" rx="96" ry="105" fill="#040612"/><ellipse cx="1399" cy="1702" rx="105" ry="115" fill="#040612"/><ellipse cx="1584" cy="1718" rx="102" ry="113" fill="#040612"/><path d="M 1507 1661 Q 1584 1574 1660 1661" fill="none" stroke="#1a4f96" stroke-width="7" opacity="0.4" filter="url(#sc-b4)"/><ellipse cx="1744" cy="1703" rx="86" ry="95" fill="#040612"/><ellipse cx="1906" cy="1715" rx="71" ry="79" fill="#040612"/><path d="M 1853 1676 Q 1906 1615 1960 1676" fill="none" stroke="#1a4f96" stroke-width="7" opacity="0.4" filter="url(#sc-b4)"/><ellipse cx="2059" cy="1692" rx="76" ry="84" fill="#040612"/><ellipse cx="2182" cy="1701" rx="76" ry="83" fill="#040612"/><ellipse cx="2347" cy="1722" rx="95" ry="104" fill="#040612"/><path d="M 2276 1670 Q 2347 1590 2418 1670" fill="none" stroke="#1a4f96" stroke-width="7" opacity="0.4" filter="url(#sc-b4)"/><ellipse cx="2561" cy="1686" rx="73" ry="81" fill="#040612"/><line x1="1704" y1="1400" x2="1718" y2="1312" stroke="#0b0c2c" stroke-width="9" stroke-linecap="round"/><ellipse cx="1718" cy="1305" rx="7" ry="10" fill="#0b0c2c"/><line x1="1886" y1="1378" x2="1885" y2="1312" stroke="#0b0c2c" stroke-width="9" stroke-linecap="round"/><ellipse cx="1885" cy="1305" rx="7" ry="10" fill="#0b0c2c"/><line x1="1873" y1="1380" x2="1872" y2="1257" stroke="#0b0c2c" stroke-width="9" stroke-linecap="round"/><ellipse cx="1872" cy="1250" rx="7" ry="9" fill="#0b0c2c"/><line x1="1674" y1="1377" x2="1661" y2="1260" stroke="#0b0c2c" stroke-width="10" stroke-linecap="round"/><ellipse cx="1661" cy="1253" rx="8" ry="11" fill="#0b0c2c"/><line x1="1791" y1="1382" x2="1805" y2="1249" stroke="#0b0c2c" stroke-width="9" stroke-linecap="round"/><ellipse cx="1805" cy="1242" rx="7" ry="10" fill="#0b0c2c"/><line x1="1402" y1="1377" x2="1420" y2="1254" stroke="#0b0c2c" stroke-width="8" stroke-linecap="round"/><ellipse cx="1420" cy="1247" rx="6" ry="8" fill="#0b0c2c"/><line x1="1923" y1="1404" x2="1913" y2="1314" stroke="#0b0c2c" stroke-width="9" stroke-linecap="round"/><ellipse cx="1913" cy="1307" rx="7" ry="9" fill="#0b0c2c"/><line x1="1738" y1="1383" x2="1758" y2="1292" stroke="#0b0c2c" stroke-width="10" stroke-linecap="round"/><ellipse cx="1758" cy="1285" rx="8" ry="11" fill="#0b0c2c"/><line x1="1869" y1="1386" x2="1862" y2="1251" stroke="#0b0c2c" stroke-width="7" stroke-linecap="round"/><ellipse cx="1862" cy="1244" rx="6" ry="8" fill="#0b0c2c"/><line x1="1365" y1="1386" x2="1370" y2="1238" stroke="#0b0c2c" stroke-width="9" stroke-linecap="round"/><ellipse cx="1370" cy="1231" rx="7" ry="10" fill="#0b0c2c"/><line x1="1531" y1="1387" x2="1546" y2="1276" stroke="#0b0c2c" stroke-width="8" stroke-linecap="round"/><ellipse cx="1546" cy="1269" rx="6" ry="9" fill="#0b0c2c"/><line x1="1618" y1="1399" x2="1597" y2="1315" stroke="#0b0c2c" stroke-width="7" stroke-linecap="round"/><ellipse cx="1597" cy="1308" rx="6" ry="8" fill="#0b0c2c"/><line x1="1781" y1="1403" x2="1759" y2="1300" stroke="#0b0c2c" stroke-width="8" stroke-linecap="round"/><ellipse cx="1759" cy="1293" rx="6" ry="9" fill="#0b0c2c"/><line x1="1677" y1="1377" x2="1656" y2="1252" stroke="#0b0c2c" stroke-width="10" stroke-linecap="round"/><ellipse cx="1656" cy="1245" rx="8" ry="11" fill="#0b0c2c"/><line x1="1445" y1="1401" x2="1465" y2="1312" stroke="#0b0c2c" stroke-width="8" stroke-linecap="round"/><ellipse cx="1465" cy="1305" rx="6" ry="9" fill="#0b0c2c"/><line x1="1541" y1="1393" x2="1554" y2="1246" stroke="#0b0c2c" stroke-width="9" stroke-linecap="round"/><ellipse cx="1554" cy="1239" rx="7" ry="10" fill="#0b0c2c"/><line x1="1810" y1="1404" x2="1788" y2="1312" stroke="#0b0c2c" stroke-width="7" stroke-linecap="round"/><ellipse cx="1788" cy="1305" rx="6" ry="8" fill="#0b0c2c"/><line x1="1532" y1="1396" x2="1552" y2="1265" stroke="#0b0c2c" stroke-width="10" stroke-linecap="round"/><ellipse cx="1552" cy="1258" rx="8" ry="11" fill="#0b0c2c"/><line x1="1657" y1="1387" x2="1648" y2="1252" stroke="#0b0c2c" stroke-width="7" stroke-linecap="round"/><ellipse cx="1648" cy="1245" rx="6" ry="8" fill="#0b0c2c"/><line x1="1416" y1="1399" x2="1439" y2="1251" stroke="#0b0c2c" stroke-width="7" stroke-linecap="round"/><ellipse cx="1439" cy="1244" rx="6" ry="8" fill="#0b0c2c"/><line x1="1925" y1="1394" x2="1921" y2="1257" stroke="#0b0c2c" stroke-width="9" stroke-linecap="round"/><ellipse cx="1921" cy="1250" rx="7" ry="10" fill="#0b0c2c"/><line x1="1828" y1="1391" x2="1824" y2="1242" stroke="#0b0c2c" stroke-width="10" stroke-linecap="round"/><ellipse cx="1824" cy="1235" rx="8" ry="11" fill="#0b0c2c"/><line x1="1345" y1="1392" x2="1361" y2="1248" stroke="#0b0c2c" stroke-width="9" stroke-linecap="round"/><ellipse cx="1361" cy="1241" rx="7" ry="10" fill="#0b0c2c"/><line x1="1903" y1="1397" x2="1917" y2="1246" stroke="#0b0c2c" stroke-width="8" stroke-linecap="round"/><ellipse cx="1917" cy="1239" rx="7" ry="9" fill="#0b0c2c"/><rect x="615" y="640" width="1995" height="1131" fill="url(#sc-vig)"/></g></defs><g clip-path="url(#vclip)"><use href="#scene"/><rect x="615" y="640" width="1995" height="1131" fill="#1e1f22" opacity="0.46"/></g></svg><div class="abs" style="left:651.3px;top:1602px;width:844.5px;height:121.20000000000005px;border-radius:61px;background:#212226"></div><svg style="left:717.3px;top:1635px" width="55.2" height="55.2" viewBox="0 0 24 24" ><path d="M21 3H3c-1.1 0-2 .9-2 2v3h2V5h18v14h-7v2h7c1.1 0 2-.9 2-2V5c0-1.1-.9-2-2-2zM1 18v3h3c0-1.66-1.34-3-3-3zm0-4v2c2.76 0 5 2.24 5 5h2c0-3.87-3.13-7-7-7zm0-4v2c4.97 0 9 4.03 9 9h2c0-6.08-4.93-11-11-11z" fill="#f1f1f1"/></svg><div class="t" style="letter-spacing:-0.542px;left:802.8px;top:1644.26px;font-size:37.5px;color:#f0f0f0">Predvajanje v napravi TV v dnevni sobi</div><div class="t" style="letter-spacing:-0.135px;left:617px;top:1793.49px;font-size:41px;color:#28292c">Koncert v živo – Palm Springs</div><div class="th" style="top:880px;height:165px"></div><div class="th" style="top:1062.5px;height:165.0px"></div><div class="th" style="top:1242.2px;height:165.0999999999999px"></div><div class="th" style="top:1422.5px;height:168.9000000000001px"></div><div class="th" style="top:1601px;height:165px"></div><div class="th" style="top:1776.8px;height:113.20000000000005px"></div><div class="sk" style="left:2943px;top:1067.6px;width:286.8px;height:31.1px"></div><div class="sk" style="left:2943px;top:1105px;width:342.7px;height:31.0px"></div><div class="sk" style="left:2943px;top:1141px;width:152.0px;height:25.7px"></div><div class="sk" style="left:2943px;top:1173px;width:228.4px;height:24.8px"></div><div class="sk" style="left:2943px;top:1242px;width:286.8px;height:31.0px"></div><div class="sk" style="left:2943px;top:1279.7px;width:342.7px;height:31.7px"></div><div class="sk" style="left:2943px;top:1321.6px;width:152.0px;height:24.7px"></div><div class="sk" style="left:2943px;top:1354.6px;width:250.6px;height:25.4px"></div><div class="sk" style="left:2943px;top:1432px;width:286.8px;height:31.8px"></div><div class="sk" style="left:2943px;top:1468.9px;width:208.0px;height:26.0px"></div><div class="sk" style="left:2943px;top:1606.7px;width:355.4px;height:31.7px"></div><div class="sk" style="left:2943px;top:1644px;width:307.0px;height:31.9px"></div><div class="sk" style="left:2943px;top:1682px;width:152.0px;height:25.6px"></div><div class="sk" style="left:2943px;top:1713.3px;width:334.5px;height:25.4px"></div><div class="sk" style="left:2943px;top:1776.8px;width:334.5px;height:31.8px"></div><div class="sk" style="left:2943px;top:1815px;width:307.0px;height:31.0px"></div><div class="sk" style="left:2943px;top:1853px;width:152.0px;height:27.0px"></div></div></div><div class="abs" style="left:3115.7px;top:398.7px;width:114.60000000000036px;height:114.59999999999997px;border-radius:58px;background:#e6e7ea;box-shadow:0 6px 26px rgba(0,0,0,0.28)"></div><svg style="left:3137.5px;top:424.4px" width="68.2" height="68.2" viewBox="0 0 24 24" ><path d="M15 6H3v2h12V6zm0 4H3v2h12v-2zM3 16h8v-2H3v2zM17 6v8.18c-.31-.11-.65-.18-1-.18-1.66 0-3 1.34-3 3s1.34 3 3 3 3-1.34 3-3V8h3V6h-5z" fill="#000"/></svg><div class="abs" style="left:2508px;top:557px;width:801px;height:471.5px;border-radius:15px;background:#fff;box-shadow:0 8px 28px rgba(0,0,0,0.24),0 2px 6px rgba(0,0,0,0.12);overflow:hidden"><div class="abs" style="left:0;top:0;width:801px;height:264.5px;background:#05070f"></div><svg style="left:422px;top:0;overflow:hidden" width="379" height="264.5" viewBox="2930 557 379 264.5"><defs><linearGradient id="thfade" x1="0" y1="0" x2="1" y2="0"><stop offset="0.03" stop-color="#05070f"/><stop offset="0.2" stop-color="#05070f" stop-opacity="0"/></linearGradient></defs><g transform="translate(2843,536) scale(0.285) translate(-615,-640)"><use href="#scene"/></g><rect x="2930" y="557" width="379" height="264.5" fill="url(#thfade)"/></svg></div><div class="abs" style="left:2548.8px;top:596px;width:57.19999999999982px;height:16px;border-radius:9px;background:#c6cbf8"></div><div class="abs" style="left:2548.8px;top:645px;width:257.0px;height:16px;border-radius:9px;background:#c6cbf8"></div><div class="abs" style="left:2548.8px;top:672.5px;width:133.69999999999982px;height:17.5px;border-radius:9px;background:#c6cbf8"></div><svg style="left:0px;top:0px" width="3840" height="2160" viewBox="0 0 3840 2160" style="left:0;top:0;pointer-events:none"><g fill="#c6cbf8" stroke="#c6cbf8" stroke-width="3" stroke-linejoin="round"><path d="M2573 750.3 V770.7 L2558 760.5Z M2593.5 750.3 V770.7 L2578.5 760.5Z"/><path d="M2646.6 748.6 V773 L2668.6 760.8Z"/><path d="M2716.8 750.3 V770.7 L2731.8 760.5Z M2737.3 750.3 V770.7 L2752.3 760.5Z"/></g><rect x="2784.4" y="735.7" width="3.8" height="50" rx="1.9" fill="#c6cbf8"/><g fill="none" stroke="#c6cbf8" stroke-width="3.3"><path d="M2836 740.5 H2857.5 Q2859.3 740.5 2859.3 742.3 V759.5"/><path d="M2816.7 755 V772.2 Q2816.7 774 2818.5 774 H2837.5"/><path d="M2816.3 740 L2828.5 752.2 M2818.5 752.8 H2829.2 V742"/></g><rect x="2841.5" y="762.5" width="19.3" height="13" fill="#c6cbf8"/></svg><svg style="left:0px;top:0px" width="3840" height="2160" viewBox="0 0 3840 2160" ><rect x="2557.1" y="857.5" width="41.6" height="32.7" rx="3" fill="none" stroke="#111" stroke-width="3"/><g stroke="#111" stroke-width="3"><path d="M2564.5 873 H2568 M2571.6 873 H2591.5 M2564.5 880 H2584.5 M2588 880 H2591.5"/></g></svg><div class="t" style="letter-spacing:-0.129px;left:2630.5px;top:856.77px;font-size:35px;color:#1f1f1f">Samodejni podnapisi</div><div class="abs" style="left:3214.8px;top:860.9px;width:49.29999999999973px;height:27.100000000000023px;border-radius:14px;border:4.8px solid #111"></div><div class="abs" style="left:3220.8px;top:867.4px;width:14.0px;height:14.0px;border-radius:7px;background:#111"></div><div class="abs" style="left:2508px;top:925.7px;width:801px;height:1.599999999999909px;background:#8f9bd0"></div><svg style="left:2550px;top:949.5px" width="55.8" height="55.8" viewBox="0 -960 960 960" ><path d="m370-80-16-128q-13-5-24.5-12T307-235l-119 50L78-375l103-78q-1-7-1-13.5v-27q0-6.5 1-13.5L78-585l110-190 119 50q11-8 23-15t24-12l16-128h220l16 128q13 5 24.5 12t22.5 15l119-50 110 190-103 78q1 7 1 13.5v27q0 6.5-2 13.5l103 78-110 190-118-50q-11 8-23 15t-24 12L590-80H370Zm70-80h79l14-106q31-8 57.5-23.5T639-327l99 41 39-68-86-65q5-14 7-29.5t2-31.5q0-16-2-31.5t-7-29.5l86-65-39-68-99 42q-22-23-48.5-38.5T533-694l-13-106h-79l-14 106q-31 8-57.5 23.5T321-633l-99-41-39 68 86 64q-5 15-7 30t-2 32q0 16 2 31t7 30l-86 65 39 68 99-42q22 23 48.5 38.5T427-266l13 106Zm42-180q58 0 99-41t41-99q0-58-41-99t-99-41q-59 0-99.5 41T342-480q0 58 40.5 99t99.5 41Z" fill="#0c0c0c" stroke="#fff" stroke-width="24"/></svg><div class="t" style="letter-spacing:-0.080px;left:2629.3px;top:959.67px;font-size:35px;color:#1f1f1f">Nastavitve za podnapise</div><svg style="left:0px;top:0px" width="3840" height="2160" viewBox="0 0 3840 2160" ><g fill="none" stroke="#111" stroke-width="3.2" stroke-linejoin="round"><path d="M3252.8 959.4 H3235.8 V996.5 H3273.3 V978.6"/><path d="M3247.7 984.6 L3272.5 959.9 M3256.4 959.4 H3273.3 V974.9"/></g></svg></body></html>
